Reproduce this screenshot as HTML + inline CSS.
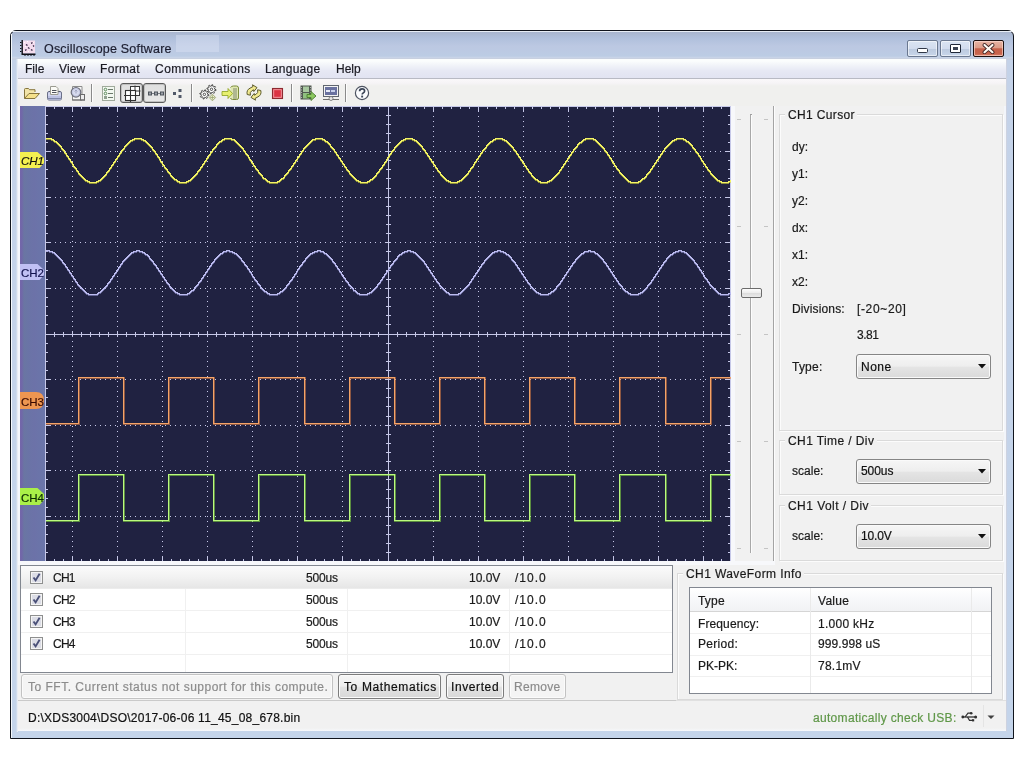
<!DOCTYPE html>
<html><head><meta charset="utf-8"><title>Oscilloscope Software</title>
<style>
html,body{margin:0;padding:0;width:1024px;height:768px;overflow:hidden;background:#fff;}
*{box-sizing:border-box;}
body{font-family:"Liberation Sans", sans-serif;font-size:12px;color:#000;position:relative;}
.a{position:absolute;}
.t{position:absolute;white-space:nowrap;line-height:14px;will-change:transform;-webkit-text-stroke:0.2px currentColor;}
</style></head><body>

<div class="a" style="left:10px;top:30px;width:1004px;height:709px;border:1px solid #10141c;border-radius:6px 6px 0 0;background:linear-gradient(#a8b4cc 0px,#b0c0dc 7px,#bcc8e2 15px,#bccce4 25px,#ccd6e8 27px,#c4cad8 28px,#c4d2e8 29px,#c4d4ea 100%);"></div>
<div class="a" style="left:12px;top:31px;width:1000px;height:1px;background:#e8eef6;border-radius:4px 4px 0 0"></div>
<div class="a" style="left:11px;top:34px;width:1px;height:704px;background:#f4f8fc"></div>
<div class="a" style="left:16px;top:59px;width:1px;height:673px;background:#d0dcec"></div>
<div class="a" style="left:17px;top:59px;width:1px;height:673px;background:#e8ecf4"></div>
<div class="a" style="left:1006px;top:59px;width:1px;height:673px;background:#cdd2e0"></div>
<div class="a" style="left:18px;top:59px;width:988px;height:672px;background:#f1f1f1"></div>
<div class="a" style="left:1004px;top:79px;width:2px;height:622px;background:#f2f5fa"></div>
<svg class="a" style="left:20px;top:40px" width="16" height="16">
<rect x="2.5" y="0.5" width="12.5" height="13" fill="#f4dcee"/>
<path d="M4 2h1v1h-1zM7 1h1v1h-1zM10 3h1v1h-1zM13 2h1v1h-1zM5 6h1v1h-1zM9 7h1v1h-1zM12 6h1v1h-1zM4 10h1v1h-1zM8 11h1v1h-1zM12 10h1v1h-1z" fill="#ffffff"/>
<path d="M2.2 0V14.3H15.5" stroke="#101018" stroke-width="1.4" fill="none"/>
<path d="M0 2.5h1.5M0 5.5h1.5M0 8.5h1.5M0 11.5h1.5M5 14.5v1.5M8 14.5v1.5M11 14.5v1.5M14 14.5v1.5" stroke="#101018" stroke-width="1"/>
<path d="M6 4.5l1.5 1M11 3.5l1.5-1M8 7.5l1.5 1M5 10.5l1.5-1M11 9.5l1.5 1M13 5.5l1 1" stroke="#3a2848" stroke-width="1.5"/>
</svg>
<div class="t" style="left:43.50px;top:41.00px;font-size:12.5px;line-height:16px;color:#1c1e30;letter-spacing:0.190px;">Oscilloscope Software</div>
<div class="a" style="left:176px;top:35px;width:43px;height:17px;background:rgba(230,236,250,0.35)"></div>
<div class="a" style="left:907px;top:40px;width:31px;height:17px;border:1px solid #6a7890;border-radius:2px;background:linear-gradient(#dae4f2,#d2dcee 50%,#bccadf 55%,#c8d6ea);box-shadow:inset 0 0 0 1px rgba(255,255,255,0.55)"></div>
<div class="a" style="left:917px;top:48px;width:11px;height:5px;border:1px solid #303848;background:#fff;border-radius:1.5px"></div>
<div class="a" style="left:940px;top:40px;width:31px;height:17px;border:1px solid #6a7890;border-radius:2px;background:linear-gradient(#dae4f2,#d2dcee 50%,#bccadf 55%,#c8d6ea);box-shadow:inset 0 0 0 1px rgba(255,255,255,0.55)"></div>
<div class="a" style="left:950px;top:44px;width:11px;height:9px;border:1px solid #202838;background:#fff;border-radius:1px"><div class="a" style="left:2px;top:2px;width:5px;height:3px;background:#3a4252"></div></div>
<div class="a" style="left:973px;top:40px;width:31px;height:17px;border:1px solid #1e1010;border-radius:2px;background:linear-gradient(#e8b4a4,#dc9c88 45%,#c6604a 52%,#c8644c 85%,#d88470);box-shadow:inset 0 0 0 1px rgba(255,225,215,0.6)"></div>
<svg class="a" style="left:982px;top:43px" width="13" height="11"><path d="M2.5 2L10.5 9.2M10.5 2L2.5 9.2" stroke="#3a2020" stroke-width="3.8" stroke-linecap="round"/><path d="M2.5 2L10.5 9.2M10.5 2L2.5 9.2" stroke="#fffaf4" stroke-width="2.2" stroke-linecap="round"/></svg>
<div class="a" style="left:18px;top:59px;width:988px;height:20px;background:linear-gradient(#fbfdfd 0px,#fbfdfd 2px,#f2f4f9 6px,#e6e8f4 12px,#e2e4f2 18px);border-bottom:1px solid #b8bac4"></div>
<div class="t" style="left:25.20px;top:61.00px;font-size:12px;line-height:16px;color:#1a1a22;letter-spacing:0.000px;">File</div>
<div class="t" style="left:58.70px;top:61.00px;font-size:12px;line-height:16px;color:#1a1a22;letter-spacing:0.100px;">View</div>
<div class="t" style="left:99.70px;top:61.00px;font-size:12px;line-height:16px;color:#1a1a22;letter-spacing:0.320px;">Format</div>
<div class="t" style="left:154.60px;top:61.00px;font-size:12px;line-height:16px;color:#1a1a22;letter-spacing:0.462px;">Communications</div>
<div class="t" style="left:264.60px;top:61.00px;font-size:12px;line-height:16px;color:#1a1a22;letter-spacing:0.243px;">Language</div>
<div class="t" style="left:336.10px;top:61.00px;font-size:12px;line-height:16px;color:#1a1a22;letter-spacing:0.000px;">Help</div>
<div class="a" style="left:18px;top:79px;width:988px;height:27px;background:linear-gradient(#faf8fa 0px,#f6f4f6 4px,#f0f0ee 7px,#f0f0ee 100%)"></div>
<svg class="a" style="left:23px;top:86px" width="18" height="15">
<path d="M1.5 12.5V3.5q0-1 1-1h3l1 1.2h5.5v2.3" fill="#f2e4a8" stroke="#85743c" stroke-width="1"/>
<path d="M1.5 12.5L6 7.5H16.5L12 12.5Z" fill="#f4e08a" stroke="#85743c" stroke-width="1" stroke-linejoin="round"/>
</svg>
<svg class="a" style="left:46px;top:85px" width="17" height="17">
<rect x="1.5" y="6.5" width="14" height="8.5" rx="1.5" fill="#d0d4ee" stroke="#6a7088" stroke-width="1"/>
<rect x="2" y="11" width="13" height="3.5" fill="#bcc2e2"/>
<path d="M2 13.5h13" stroke="#8088a8" stroke-width="1"/>
<path d="M3.5 6.5h10" stroke="#404858" stroke-width="1.2"/>
<path d="M4.5 1.5h5.5l2 2v6h-7.5z" fill="#fbfbf6" stroke="#9a9a90" stroke-width="1"/>
<path d="M6 5.5h4.5M6 7.5h4.5" stroke="#50545c" stroke-width="1"/>
</svg>
<svg class="a" style="left:70px;top:85px" width="17" height="17">
<path d="M2.5 1.5h9.5v13.5h-9.5z" fill="#f6f6f6" stroke="#8c8c8c" stroke-width="1"/>
<circle cx="6" cy="7.3" r="4.8" fill="#c6cae4" stroke="#6e707c" stroke-width="1.2"/>
<circle cx="6" cy="7.3" r="3" fill="#d8dcf0"/>
<path d="M6 5v3.5M4.6 6.4L6 5l1.4 1.4" stroke="#a0a4c0" stroke-width="1" fill="none"/>
<rect x="10.5" y="9.5" width="4" height="5.5" fill="#ececec" stroke="#6a6a6a" stroke-width="1"/>
<path d="M2 15h13" stroke="#6a6a6a" stroke-width="1"/>
</svg>
<div class="a" style="left:91px;top:84px;width:1px;height:18px;background:#8a8a8a"></div><div class="a" style="left:92px;top:84px;width:1px;height:18px;background:#fdfdfd"></div>
<svg class="a" style="left:102px;top:86px" width="14" height="15">
<rect x="0.5" y="0.5" width="12" height="14" fill="#f2f8f0" stroke="#a0aa9c" stroke-width="1"/>
<circle cx="3.5" cy="3.5" r="1.3" fill="none" stroke="#5c8a5c" stroke-width="1"/>
<circle cx="3.5" cy="7.5" r="1.3" fill="none" stroke="#5c8a5c" stroke-width="1"/>
<rect x="2" y="10" width="3" height="3" fill="#90a090"/>
<path d="M6 3.5h5M6 7.5h5M6 11.5h5" stroke="#6a786a" stroke-width="1"/>
</svg>
<div class="a" style="left:120px;top:83px;width:23px;height:20px;border:1px solid #5a5a5a;border-radius:3px;background:linear-gradient(#dedede,#e8e8e8);box-shadow:inset 0 0 0 1px #c0c0c0"></div>
<div class="a" style="left:143px;top:83px;width:23px;height:20px;border:1px solid #5a5a5a;border-radius:3px;background:linear-gradient(#dedede,#e8e8e8);box-shadow:inset 0 0 0 1px #c0c0c0"></div>
<svg class="a" style="left:124px;top:85px" width="18" height="17">
<rect x="6.5" y="1.5" width="9" height="9" fill="#fff" stroke="#383838" stroke-width="1"/>
<path d="M11 0.5v11M5.5 6h11" stroke="#383838" stroke-width="1"/>
<rect x="1.5" y="5.5" width="10" height="10" fill="#fff" stroke="#303030" stroke-width="1.1"/>
<path d="M6.5 4v13M0 10.5h13" stroke="#303030" stroke-width="1.1"/>
</svg>
<svg class="a" style="left:147px;top:90px" width="17" height="7">
<path d="M4 3.5h3M10 3.5h3" stroke="#7a7e86" stroke-width="1"/>
<rect x="1.5" y="2" width="3" height="3" fill="#9ca0a8" stroke="#4e545c" stroke-width="1"/><rect x="7.5" y="2" width="3" height="3" fill="#9ca0a8" stroke="#4e545c" stroke-width="1"/><rect x="13.5" y="2" width="3" height="3" fill="#9ca0a8" stroke="#4e545c" stroke-width="1"/>
</svg>
<svg class="a" style="left:172px;top:88px" width="10" height="11">
<rect x="1" y="4" width="3" height="3" fill="#505868"/><rect x="6.5" y="1" width="3" height="3" fill="#505868"/><rect x="6.5" y="7" width="3" height="3" fill="#505868"/>
</svg>
<div class="a" style="left:191px;top:84px;width:1px;height:18px;background:#8a8a8a"></div><div class="a" style="left:192px;top:84px;width:1px;height:18px;background:#fdfdfd"></div>
<svg class="a" style="left:199px;top:84px" width="19" height="18"><polygon points="15.80,5.30 17.08,5.73 16.90,6.65 15.55,6.56 14.83,7.63 15.43,8.84 14.65,9.37 13.76,8.35 12.50,8.60 12.07,9.88 11.15,9.70 11.24,8.35 10.17,7.63 8.96,8.23 8.43,7.45 9.45,6.56 9.20,5.30 7.92,4.87 8.10,3.95 9.45,4.04 10.17,2.97 9.57,1.76 10.35,1.23 11.24,2.25 12.50,2.00 12.93,0.72 13.85,0.90 13.76,2.25 14.83,2.97 16.04,2.37 16.57,3.15 15.55,4.04" fill="#fcfcfc" stroke="#404040" stroke-width="0.95" stroke-linejoin="round"/><circle cx="12.5" cy="5.3" r="1.2" fill="none" stroke="#404040" stroke-width="0.9"/><polygon points="8.70,10.40 9.98,10.83 9.80,11.75 8.45,11.66 7.73,12.73 8.33,13.94 7.55,14.47 6.66,13.45 5.40,13.70 4.97,14.98 4.05,14.80 4.14,13.45 3.07,12.73 1.86,13.33 1.33,12.55 2.35,11.66 2.10,10.40 0.82,9.97 1.00,9.05 2.35,9.14 3.07,8.07 2.47,6.86 3.25,6.33 4.14,7.35 5.40,7.10 5.83,5.82 6.75,6.00 6.66,7.35 7.73,8.07 8.94,7.47 9.47,8.25 8.45,9.14" fill="#fcfcfc" stroke="#404040" stroke-width="0.95" stroke-linejoin="round"/><circle cx="5.4" cy="10.4" r="1.2" fill="none" stroke="#404040" stroke-width="0.9"/><path d="M13.4 10.2l3.2 3.3-3.2 3.3-3.2-3.3z" fill="#eef4d0" stroke="#98a070" stroke-width="0.9"/><path d="M13.4 11.3v4.4M11.2 13.5h4.4" stroke="#98a070" stroke-width="0.8"/></svg>
<svg class="a" style="left:221px;top:85px" width="19" height="16">
<path d="M9.5 2.5q1-1.5 3-1.5h3q2 0 2 2v10q0 1.5-2 1.5h-4q-1.5 0-2-1.5" fill="#e0e8b0" stroke="#7a8a3a" stroke-width="1"/>
<rect x="12" y="3" width="4" height="11" fill="#b0b890"/>
<path d="M1 6.5h6v-3l4.5 5-4.5 5v-3h-6z" fill="#e8f070" stroke="#8aa020" stroke-width="0.8"/>
</svg>
<svg class="a" style="left:245px;top:84px" width="18" height="17">
<path d="M2.2 10.5Q1.2 6 5 4.2L8 2.5 7.5 0.8 12 3.6 8.8 7.5 8.6 5.8 6.8 6.8Q4.4 8.2 5.4 11.2Z" fill="#f2ea90" stroke="#5c5a2c" stroke-width="1" stroke-linejoin="round"/>
<path d="M15.8 6.5Q16.8 11 13 12.8L10 14.5 10.5 16.2 6 13.4 9.2 9.5 9.4 11.2 11.2 10.2Q13.6 8.8 12.6 5.8Z" fill="#f2ea90" stroke="#5c5a2c" stroke-width="1" stroke-linejoin="round"/>
</svg>
<svg class="a" style="left:271px;top:87px" width="13" height="13">
<rect x="1.5" y="1.5" width="10" height="10" fill="#dc3444" stroke="#8c2a30" stroke-width="1.1"/>
<rect x="2.7" y="2.7" width="7.6" height="7.6" fill="none" stroke="#f4a0a8" stroke-width="0.9"/>
</svg>
<div class="a" style="left:291px;top:84px;width:1px;height:18px;background:#8a8a8a"></div><div class="a" style="left:292px;top:84px;width:1px;height:18px;background:#fdfdfd"></div>
<svg class="a" style="left:299px;top:84px" width="18" height="17">
<rect x="1.5" y="1.5" width="11" height="14" fill="#505850"/>
<rect x="4" y="2.5" width="6" height="5.5" fill="#a8c8a0"/>
<rect x="4" y="9" width="6" height="5.5" fill="#90c080"/>
<path d="M2.5 3v12M11.5 3v12" stroke="#c8c8c8" stroke-width="0.8" stroke-dasharray="1 1.5"/>
<path d="M8 10.5h4v-3l5 4.5-5 4.5v-3h-4z" fill="#8cc860" stroke="#4a7a30" stroke-width="0.9" stroke-linejoin="round"/>
</svg>
<svg class="a" style="left:322px;top:84px" width="18" height="17">
<rect x="1.5" y="1.5" width="15" height="11" fill="#f4f4f4" stroke="#606670" stroke-width="1"/>
<rect x="3" y="3" width="12" height="8" fill="#6a72a0"/>
<rect x="4" y="6" width="4" height="2" fill="#e8ecf8"/><rect x="9" y="6" width="4" height="2" fill="#c8d0ec"/>
<path d="M1 15.5h16" stroke="#707070" stroke-width="1"/>
<circle cx="9" cy="14.5" r="2" fill="#e8e8e8" stroke="#707070" stroke-width="0.8"/>
</svg>
<div class="a" style="left:345px;top:84px;width:1px;height:18px;background:#8a8a8a"></div><div class="a" style="left:346px;top:84px;width:1px;height:18px;background:#fdfdfd"></div>
<svg class="a" style="left:354px;top:85px" width="16" height="16">
<circle cx="8" cy="8" r="6.6" fill="#fbfcfe" stroke="#4e5462" stroke-width="1.2"/>
<path d="M5.6 6.2q0-2.4 2.5-2.4t2.5 2.2q0 1.3-1.4 2-1 .5-1 1.6" fill="none" stroke="#3a4456" stroke-width="1.7"/>
<rect x="7.2" y="10.6" width="1.9" height="1.9" fill="#3a4456"/>
</svg>
<div class="a" style="left:18px;top:106px;width:2px;height:456px;background:#f4f6fa"></div>
<div class="a" style="left:20px;top:106px;width:25px;height:456px;background:linear-gradient(90deg,#7466aa 0px,#7068a8 2px,#6a76a2 4px,#6a74a6 8px,#6c72a8 14px,#6a76aa 25px)"></div>
<svg width="686" height="456" style="position:absolute;left:45px;top:106px" shape-rendering="crispEdges"><rect x="0" y="0" width="686" height="456" fill="#202241"/><path d="M27 0h1v1h-1zM27 5h1v1h-1zM27 10h1v1h-1zM27 15h1v1h-1zM27 20h1v1h-1zM27 25h1v1h-1zM27 30h1v1h-1zM27 35h1v1h-1zM27 40h1v1h-1zM27 45h1v1h-1zM27 50h1v1h-1zM27 55h1v1h-1zM27 60h1v1h-1zM27 65h1v1h-1zM27 70h1v1h-1zM27 75h1v1h-1zM27 80h1v1h-1zM27 85h1v1h-1zM27 90h1v1h-1zM27 95h1v1h-1zM27 100h1v1h-1zM27 105h1v1h-1zM27 110h1v1h-1zM27 115h1v1h-1zM27 120h1v1h-1zM27 125h1v1h-1zM27 130h1v1h-1zM27 135h1v1h-1zM27 140h1v1h-1zM27 145h1v1h-1zM27 150h1v1h-1zM27 155h1v1h-1zM27 160h1v1h-1zM27 165h1v1h-1zM27 170h1v1h-1zM27 175h1v1h-1zM27 180h1v1h-1zM27 185h1v1h-1zM27 190h1v1h-1zM27 195h1v1h-1zM27 200h1v1h-1zM27 205h1v1h-1zM27 210h1v1h-1zM27 215h1v1h-1zM27 220h1v1h-1zM27 225h1v1h-1zM27 230h1v1h-1zM27 235h1v1h-1zM27 240h1v1h-1zM27 245h1v1h-1zM27 250h1v1h-1zM27 255h1v1h-1zM27 260h1v1h-1zM27 265h1v1h-1zM27 270h1v1h-1zM27 275h1v1h-1zM27 280h1v1h-1zM27 285h1v1h-1zM27 290h1v1h-1zM27 295h1v1h-1zM27 300h1v1h-1zM27 305h1v1h-1zM27 310h1v1h-1zM27 315h1v1h-1zM27 320h1v1h-1zM27 325h1v1h-1zM27 330h1v1h-1zM27 335h1v1h-1zM27 340h1v1h-1zM27 345h1v1h-1zM27 350h1v1h-1zM27 355h1v1h-1zM27 360h1v1h-1zM27 365h1v1h-1zM27 370h1v1h-1zM27 375h1v1h-1zM27 380h1v1h-1zM27 385h1v1h-1zM27 390h1v1h-1zM27 395h1v1h-1zM27 400h1v1h-1zM27 405h1v1h-1zM27 410h1v1h-1zM27 415h1v1h-1zM27 420h1v1h-1zM27 425h1v1h-1zM27 430h1v1h-1zM27 435h1v1h-1zM27 440h1v1h-1zM27 445h1v1h-1zM27 450h1v1h-1zM27 455h1v1h-1zM72 0h1v1h-1zM72 5h1v1h-1zM72 10h1v1h-1zM72 15h1v1h-1zM72 20h1v1h-1zM72 25h1v1h-1zM72 30h1v1h-1zM72 35h1v1h-1zM72 40h1v1h-1zM72 45h1v1h-1zM72 50h1v1h-1zM72 55h1v1h-1zM72 60h1v1h-1zM72 65h1v1h-1zM72 70h1v1h-1zM72 75h1v1h-1zM72 80h1v1h-1zM72 85h1v1h-1zM72 90h1v1h-1zM72 95h1v1h-1zM72 100h1v1h-1zM72 105h1v1h-1zM72 110h1v1h-1zM72 115h1v1h-1zM72 120h1v1h-1zM72 125h1v1h-1zM72 130h1v1h-1zM72 135h1v1h-1zM72 140h1v1h-1zM72 145h1v1h-1zM72 150h1v1h-1zM72 155h1v1h-1zM72 160h1v1h-1zM72 165h1v1h-1zM72 170h1v1h-1zM72 175h1v1h-1zM72 180h1v1h-1zM72 185h1v1h-1zM72 190h1v1h-1zM72 195h1v1h-1zM72 200h1v1h-1zM72 205h1v1h-1zM72 210h1v1h-1zM72 215h1v1h-1zM72 220h1v1h-1zM72 225h1v1h-1zM72 230h1v1h-1zM72 235h1v1h-1zM72 240h1v1h-1zM72 245h1v1h-1zM72 250h1v1h-1zM72 255h1v1h-1zM72 260h1v1h-1zM72 265h1v1h-1zM72 270h1v1h-1zM72 275h1v1h-1zM72 280h1v1h-1zM72 285h1v1h-1zM72 290h1v1h-1zM72 295h1v1h-1zM72 300h1v1h-1zM72 305h1v1h-1zM72 310h1v1h-1zM72 315h1v1h-1zM72 320h1v1h-1zM72 325h1v1h-1zM72 330h1v1h-1zM72 335h1v1h-1zM72 340h1v1h-1zM72 345h1v1h-1zM72 350h1v1h-1zM72 355h1v1h-1zM72 360h1v1h-1zM72 365h1v1h-1zM72 370h1v1h-1zM72 375h1v1h-1zM72 380h1v1h-1zM72 385h1v1h-1zM72 390h1v1h-1zM72 395h1v1h-1zM72 400h1v1h-1zM72 405h1v1h-1zM72 410h1v1h-1zM72 415h1v1h-1zM72 420h1v1h-1zM72 425h1v1h-1zM72 430h1v1h-1zM72 435h1v1h-1zM72 440h1v1h-1zM72 445h1v1h-1zM72 450h1v1h-1zM72 455h1v1h-1zM117 0h1v1h-1zM117 5h1v1h-1zM117 10h1v1h-1zM117 15h1v1h-1zM117 20h1v1h-1zM117 25h1v1h-1zM117 30h1v1h-1zM117 35h1v1h-1zM117 40h1v1h-1zM117 45h1v1h-1zM117 50h1v1h-1zM117 55h1v1h-1zM117 60h1v1h-1zM117 65h1v1h-1zM117 70h1v1h-1zM117 75h1v1h-1zM117 80h1v1h-1zM117 85h1v1h-1zM117 90h1v1h-1zM117 95h1v1h-1zM117 100h1v1h-1zM117 105h1v1h-1zM117 110h1v1h-1zM117 115h1v1h-1zM117 120h1v1h-1zM117 125h1v1h-1zM117 130h1v1h-1zM117 135h1v1h-1zM117 140h1v1h-1zM117 145h1v1h-1zM117 150h1v1h-1zM117 155h1v1h-1zM117 160h1v1h-1zM117 165h1v1h-1zM117 170h1v1h-1zM117 175h1v1h-1zM117 180h1v1h-1zM117 185h1v1h-1zM117 190h1v1h-1zM117 195h1v1h-1zM117 200h1v1h-1zM117 205h1v1h-1zM117 210h1v1h-1zM117 215h1v1h-1zM117 220h1v1h-1zM117 225h1v1h-1zM117 230h1v1h-1zM117 235h1v1h-1zM117 240h1v1h-1zM117 245h1v1h-1zM117 250h1v1h-1zM117 255h1v1h-1zM117 260h1v1h-1zM117 265h1v1h-1zM117 270h1v1h-1zM117 275h1v1h-1zM117 280h1v1h-1zM117 285h1v1h-1zM117 290h1v1h-1zM117 295h1v1h-1zM117 300h1v1h-1zM117 305h1v1h-1zM117 310h1v1h-1zM117 315h1v1h-1zM117 320h1v1h-1zM117 325h1v1h-1zM117 330h1v1h-1zM117 335h1v1h-1zM117 340h1v1h-1zM117 345h1v1h-1zM117 350h1v1h-1zM117 355h1v1h-1zM117 360h1v1h-1zM117 365h1v1h-1zM117 370h1v1h-1zM117 375h1v1h-1zM117 380h1v1h-1zM117 385h1v1h-1zM117 390h1v1h-1zM117 395h1v1h-1zM117 400h1v1h-1zM117 405h1v1h-1zM117 410h1v1h-1zM117 415h1v1h-1zM117 420h1v1h-1zM117 425h1v1h-1zM117 430h1v1h-1zM117 435h1v1h-1zM117 440h1v1h-1zM117 445h1v1h-1zM117 450h1v1h-1zM117 455h1v1h-1zM162 0h1v1h-1zM162 5h1v1h-1zM162 10h1v1h-1zM162 15h1v1h-1zM162 20h1v1h-1zM162 25h1v1h-1zM162 30h1v1h-1zM162 35h1v1h-1zM162 40h1v1h-1zM162 45h1v1h-1zM162 50h1v1h-1zM162 55h1v1h-1zM162 60h1v1h-1zM162 65h1v1h-1zM162 70h1v1h-1zM162 75h1v1h-1zM162 80h1v1h-1zM162 85h1v1h-1zM162 90h1v1h-1zM162 95h1v1h-1zM162 100h1v1h-1zM162 105h1v1h-1zM162 110h1v1h-1zM162 115h1v1h-1zM162 120h1v1h-1zM162 125h1v1h-1zM162 130h1v1h-1zM162 135h1v1h-1zM162 140h1v1h-1zM162 145h1v1h-1zM162 150h1v1h-1zM162 155h1v1h-1zM162 160h1v1h-1zM162 165h1v1h-1zM162 170h1v1h-1zM162 175h1v1h-1zM162 180h1v1h-1zM162 185h1v1h-1zM162 190h1v1h-1zM162 195h1v1h-1zM162 200h1v1h-1zM162 205h1v1h-1zM162 210h1v1h-1zM162 215h1v1h-1zM162 220h1v1h-1zM162 225h1v1h-1zM162 230h1v1h-1zM162 235h1v1h-1zM162 240h1v1h-1zM162 245h1v1h-1zM162 250h1v1h-1zM162 255h1v1h-1zM162 260h1v1h-1zM162 265h1v1h-1zM162 270h1v1h-1zM162 275h1v1h-1zM162 280h1v1h-1zM162 285h1v1h-1zM162 290h1v1h-1zM162 295h1v1h-1zM162 300h1v1h-1zM162 305h1v1h-1zM162 310h1v1h-1zM162 315h1v1h-1zM162 320h1v1h-1zM162 325h1v1h-1zM162 330h1v1h-1zM162 335h1v1h-1zM162 340h1v1h-1zM162 345h1v1h-1zM162 350h1v1h-1zM162 355h1v1h-1zM162 360h1v1h-1zM162 365h1v1h-1zM162 370h1v1h-1zM162 375h1v1h-1zM162 380h1v1h-1zM162 385h1v1h-1zM162 390h1v1h-1zM162 395h1v1h-1zM162 400h1v1h-1zM162 405h1v1h-1zM162 410h1v1h-1zM162 415h1v1h-1zM162 420h1v1h-1zM162 425h1v1h-1zM162 430h1v1h-1zM162 435h1v1h-1zM162 440h1v1h-1zM162 445h1v1h-1zM162 450h1v1h-1zM162 455h1v1h-1zM207 0h1v1h-1zM207 5h1v1h-1zM207 10h1v1h-1zM207 15h1v1h-1zM207 20h1v1h-1zM207 25h1v1h-1zM207 30h1v1h-1zM207 35h1v1h-1zM207 40h1v1h-1zM207 45h1v1h-1zM207 50h1v1h-1zM207 55h1v1h-1zM207 60h1v1h-1zM207 65h1v1h-1zM207 70h1v1h-1zM207 75h1v1h-1zM207 80h1v1h-1zM207 85h1v1h-1zM207 90h1v1h-1zM207 95h1v1h-1zM207 100h1v1h-1zM207 105h1v1h-1zM207 110h1v1h-1zM207 115h1v1h-1zM207 120h1v1h-1zM207 125h1v1h-1zM207 130h1v1h-1zM207 135h1v1h-1zM207 140h1v1h-1zM207 145h1v1h-1zM207 150h1v1h-1zM207 155h1v1h-1zM207 160h1v1h-1zM207 165h1v1h-1zM207 170h1v1h-1zM207 175h1v1h-1zM207 180h1v1h-1zM207 185h1v1h-1zM207 190h1v1h-1zM207 195h1v1h-1zM207 200h1v1h-1zM207 205h1v1h-1zM207 210h1v1h-1zM207 215h1v1h-1zM207 220h1v1h-1zM207 225h1v1h-1zM207 230h1v1h-1zM207 235h1v1h-1zM207 240h1v1h-1zM207 245h1v1h-1zM207 250h1v1h-1zM207 255h1v1h-1zM207 260h1v1h-1zM207 265h1v1h-1zM207 270h1v1h-1zM207 275h1v1h-1zM207 280h1v1h-1zM207 285h1v1h-1zM207 290h1v1h-1zM207 295h1v1h-1zM207 300h1v1h-1zM207 305h1v1h-1zM207 310h1v1h-1zM207 315h1v1h-1zM207 320h1v1h-1zM207 325h1v1h-1zM207 330h1v1h-1zM207 335h1v1h-1zM207 340h1v1h-1zM207 345h1v1h-1zM207 350h1v1h-1zM207 355h1v1h-1zM207 360h1v1h-1zM207 365h1v1h-1zM207 370h1v1h-1zM207 375h1v1h-1zM207 380h1v1h-1zM207 385h1v1h-1zM207 390h1v1h-1zM207 395h1v1h-1zM207 400h1v1h-1zM207 405h1v1h-1zM207 410h1v1h-1zM207 415h1v1h-1zM207 420h1v1h-1zM207 425h1v1h-1zM207 430h1v1h-1zM207 435h1v1h-1zM207 440h1v1h-1zM207 445h1v1h-1zM207 450h1v1h-1zM207 455h1v1h-1zM252 0h1v1h-1zM252 5h1v1h-1zM252 10h1v1h-1zM252 15h1v1h-1zM252 20h1v1h-1zM252 25h1v1h-1zM252 30h1v1h-1zM252 35h1v1h-1zM252 40h1v1h-1zM252 45h1v1h-1zM252 50h1v1h-1zM252 55h1v1h-1zM252 60h1v1h-1zM252 65h1v1h-1zM252 70h1v1h-1zM252 75h1v1h-1zM252 80h1v1h-1zM252 85h1v1h-1zM252 90h1v1h-1zM252 95h1v1h-1zM252 100h1v1h-1zM252 105h1v1h-1zM252 110h1v1h-1zM252 115h1v1h-1zM252 120h1v1h-1zM252 125h1v1h-1zM252 130h1v1h-1zM252 135h1v1h-1zM252 140h1v1h-1zM252 145h1v1h-1zM252 150h1v1h-1zM252 155h1v1h-1zM252 160h1v1h-1zM252 165h1v1h-1zM252 170h1v1h-1zM252 175h1v1h-1zM252 180h1v1h-1zM252 185h1v1h-1zM252 190h1v1h-1zM252 195h1v1h-1zM252 200h1v1h-1zM252 205h1v1h-1zM252 210h1v1h-1zM252 215h1v1h-1zM252 220h1v1h-1zM252 225h1v1h-1zM252 230h1v1h-1zM252 235h1v1h-1zM252 240h1v1h-1zM252 245h1v1h-1zM252 250h1v1h-1zM252 255h1v1h-1zM252 260h1v1h-1zM252 265h1v1h-1zM252 270h1v1h-1zM252 275h1v1h-1zM252 280h1v1h-1zM252 285h1v1h-1zM252 290h1v1h-1zM252 295h1v1h-1zM252 300h1v1h-1zM252 305h1v1h-1zM252 310h1v1h-1zM252 315h1v1h-1zM252 320h1v1h-1zM252 325h1v1h-1zM252 330h1v1h-1zM252 335h1v1h-1zM252 340h1v1h-1zM252 345h1v1h-1zM252 350h1v1h-1zM252 355h1v1h-1zM252 360h1v1h-1zM252 365h1v1h-1zM252 370h1v1h-1zM252 375h1v1h-1zM252 380h1v1h-1zM252 385h1v1h-1zM252 390h1v1h-1zM252 395h1v1h-1zM252 400h1v1h-1zM252 405h1v1h-1zM252 410h1v1h-1zM252 415h1v1h-1zM252 420h1v1h-1zM252 425h1v1h-1zM252 430h1v1h-1zM252 435h1v1h-1zM252 440h1v1h-1zM252 445h1v1h-1zM252 450h1v1h-1zM252 455h1v1h-1zM297 0h1v1h-1zM297 5h1v1h-1zM297 10h1v1h-1zM297 15h1v1h-1zM297 20h1v1h-1zM297 25h1v1h-1zM297 30h1v1h-1zM297 35h1v1h-1zM297 40h1v1h-1zM297 45h1v1h-1zM297 50h1v1h-1zM297 55h1v1h-1zM297 60h1v1h-1zM297 65h1v1h-1zM297 70h1v1h-1zM297 75h1v1h-1zM297 80h1v1h-1zM297 85h1v1h-1zM297 90h1v1h-1zM297 95h1v1h-1zM297 100h1v1h-1zM297 105h1v1h-1zM297 110h1v1h-1zM297 115h1v1h-1zM297 120h1v1h-1zM297 125h1v1h-1zM297 130h1v1h-1zM297 135h1v1h-1zM297 140h1v1h-1zM297 145h1v1h-1zM297 150h1v1h-1zM297 155h1v1h-1zM297 160h1v1h-1zM297 165h1v1h-1zM297 170h1v1h-1zM297 175h1v1h-1zM297 180h1v1h-1zM297 185h1v1h-1zM297 190h1v1h-1zM297 195h1v1h-1zM297 200h1v1h-1zM297 205h1v1h-1zM297 210h1v1h-1zM297 215h1v1h-1zM297 220h1v1h-1zM297 225h1v1h-1zM297 230h1v1h-1zM297 235h1v1h-1zM297 240h1v1h-1zM297 245h1v1h-1zM297 250h1v1h-1zM297 255h1v1h-1zM297 260h1v1h-1zM297 265h1v1h-1zM297 270h1v1h-1zM297 275h1v1h-1zM297 280h1v1h-1zM297 285h1v1h-1zM297 290h1v1h-1zM297 295h1v1h-1zM297 300h1v1h-1zM297 305h1v1h-1zM297 310h1v1h-1zM297 315h1v1h-1zM297 320h1v1h-1zM297 325h1v1h-1zM297 330h1v1h-1zM297 335h1v1h-1zM297 340h1v1h-1zM297 345h1v1h-1zM297 350h1v1h-1zM297 355h1v1h-1zM297 360h1v1h-1zM297 365h1v1h-1zM297 370h1v1h-1zM297 375h1v1h-1zM297 380h1v1h-1zM297 385h1v1h-1zM297 390h1v1h-1zM297 395h1v1h-1zM297 400h1v1h-1zM297 405h1v1h-1zM297 410h1v1h-1zM297 415h1v1h-1zM297 420h1v1h-1zM297 425h1v1h-1zM297 430h1v1h-1zM297 435h1v1h-1zM297 440h1v1h-1zM297 445h1v1h-1zM297 450h1v1h-1zM297 455h1v1h-1zM388 0h1v1h-1zM388 5h1v1h-1zM388 10h1v1h-1zM388 15h1v1h-1zM388 20h1v1h-1zM388 25h1v1h-1zM388 30h1v1h-1zM388 35h1v1h-1zM388 40h1v1h-1zM388 45h1v1h-1zM388 50h1v1h-1zM388 55h1v1h-1zM388 60h1v1h-1zM388 65h1v1h-1zM388 70h1v1h-1zM388 75h1v1h-1zM388 80h1v1h-1zM388 85h1v1h-1zM388 90h1v1h-1zM388 95h1v1h-1zM388 100h1v1h-1zM388 105h1v1h-1zM388 110h1v1h-1zM388 115h1v1h-1zM388 120h1v1h-1zM388 125h1v1h-1zM388 130h1v1h-1zM388 135h1v1h-1zM388 140h1v1h-1zM388 145h1v1h-1zM388 150h1v1h-1zM388 155h1v1h-1zM388 160h1v1h-1zM388 165h1v1h-1zM388 170h1v1h-1zM388 175h1v1h-1zM388 180h1v1h-1zM388 185h1v1h-1zM388 190h1v1h-1zM388 195h1v1h-1zM388 200h1v1h-1zM388 205h1v1h-1zM388 210h1v1h-1zM388 215h1v1h-1zM388 220h1v1h-1zM388 225h1v1h-1zM388 230h1v1h-1zM388 235h1v1h-1zM388 240h1v1h-1zM388 245h1v1h-1zM388 250h1v1h-1zM388 255h1v1h-1zM388 260h1v1h-1zM388 265h1v1h-1zM388 270h1v1h-1zM388 275h1v1h-1zM388 280h1v1h-1zM388 285h1v1h-1zM388 290h1v1h-1zM388 295h1v1h-1zM388 300h1v1h-1zM388 305h1v1h-1zM388 310h1v1h-1zM388 315h1v1h-1zM388 320h1v1h-1zM388 325h1v1h-1zM388 330h1v1h-1zM388 335h1v1h-1zM388 340h1v1h-1zM388 345h1v1h-1zM388 350h1v1h-1zM388 355h1v1h-1zM388 360h1v1h-1zM388 365h1v1h-1zM388 370h1v1h-1zM388 375h1v1h-1zM388 380h1v1h-1zM388 385h1v1h-1zM388 390h1v1h-1zM388 395h1v1h-1zM388 400h1v1h-1zM388 405h1v1h-1zM388 410h1v1h-1zM388 415h1v1h-1zM388 420h1v1h-1zM388 425h1v1h-1zM388 430h1v1h-1zM388 435h1v1h-1zM388 440h1v1h-1zM388 445h1v1h-1zM388 450h1v1h-1zM388 455h1v1h-1zM433 0h1v1h-1zM433 5h1v1h-1zM433 10h1v1h-1zM433 15h1v1h-1zM433 20h1v1h-1zM433 25h1v1h-1zM433 30h1v1h-1zM433 35h1v1h-1zM433 40h1v1h-1zM433 45h1v1h-1zM433 50h1v1h-1zM433 55h1v1h-1zM433 60h1v1h-1zM433 65h1v1h-1zM433 70h1v1h-1zM433 75h1v1h-1zM433 80h1v1h-1zM433 85h1v1h-1zM433 90h1v1h-1zM433 95h1v1h-1zM433 100h1v1h-1zM433 105h1v1h-1zM433 110h1v1h-1zM433 115h1v1h-1zM433 120h1v1h-1zM433 125h1v1h-1zM433 130h1v1h-1zM433 135h1v1h-1zM433 140h1v1h-1zM433 145h1v1h-1zM433 150h1v1h-1zM433 155h1v1h-1zM433 160h1v1h-1zM433 165h1v1h-1zM433 170h1v1h-1zM433 175h1v1h-1zM433 180h1v1h-1zM433 185h1v1h-1zM433 190h1v1h-1zM433 195h1v1h-1zM433 200h1v1h-1zM433 205h1v1h-1zM433 210h1v1h-1zM433 215h1v1h-1zM433 220h1v1h-1zM433 225h1v1h-1zM433 230h1v1h-1zM433 235h1v1h-1zM433 240h1v1h-1zM433 245h1v1h-1zM433 250h1v1h-1zM433 255h1v1h-1zM433 260h1v1h-1zM433 265h1v1h-1zM433 270h1v1h-1zM433 275h1v1h-1zM433 280h1v1h-1zM433 285h1v1h-1zM433 290h1v1h-1zM433 295h1v1h-1zM433 300h1v1h-1zM433 305h1v1h-1zM433 310h1v1h-1zM433 315h1v1h-1zM433 320h1v1h-1zM433 325h1v1h-1zM433 330h1v1h-1zM433 335h1v1h-1zM433 340h1v1h-1zM433 345h1v1h-1zM433 350h1v1h-1zM433 355h1v1h-1zM433 360h1v1h-1zM433 365h1v1h-1zM433 370h1v1h-1zM433 375h1v1h-1zM433 380h1v1h-1zM433 385h1v1h-1zM433 390h1v1h-1zM433 395h1v1h-1zM433 400h1v1h-1zM433 405h1v1h-1zM433 410h1v1h-1zM433 415h1v1h-1zM433 420h1v1h-1zM433 425h1v1h-1zM433 430h1v1h-1zM433 435h1v1h-1zM433 440h1v1h-1zM433 445h1v1h-1zM433 450h1v1h-1zM433 455h1v1h-1zM478 0h1v1h-1zM478 5h1v1h-1zM478 10h1v1h-1zM478 15h1v1h-1zM478 20h1v1h-1zM478 25h1v1h-1zM478 30h1v1h-1zM478 35h1v1h-1zM478 40h1v1h-1zM478 45h1v1h-1zM478 50h1v1h-1zM478 55h1v1h-1zM478 60h1v1h-1zM478 65h1v1h-1zM478 70h1v1h-1zM478 75h1v1h-1zM478 80h1v1h-1zM478 85h1v1h-1zM478 90h1v1h-1zM478 95h1v1h-1zM478 100h1v1h-1zM478 105h1v1h-1zM478 110h1v1h-1zM478 115h1v1h-1zM478 120h1v1h-1zM478 125h1v1h-1zM478 130h1v1h-1zM478 135h1v1h-1zM478 140h1v1h-1zM478 145h1v1h-1zM478 150h1v1h-1zM478 155h1v1h-1zM478 160h1v1h-1zM478 165h1v1h-1zM478 170h1v1h-1zM478 175h1v1h-1zM478 180h1v1h-1zM478 185h1v1h-1zM478 190h1v1h-1zM478 195h1v1h-1zM478 200h1v1h-1zM478 205h1v1h-1zM478 210h1v1h-1zM478 215h1v1h-1zM478 220h1v1h-1zM478 225h1v1h-1zM478 230h1v1h-1zM478 235h1v1h-1zM478 240h1v1h-1zM478 245h1v1h-1zM478 250h1v1h-1zM478 255h1v1h-1zM478 260h1v1h-1zM478 265h1v1h-1zM478 270h1v1h-1zM478 275h1v1h-1zM478 280h1v1h-1zM478 285h1v1h-1zM478 290h1v1h-1zM478 295h1v1h-1zM478 300h1v1h-1zM478 305h1v1h-1zM478 310h1v1h-1zM478 315h1v1h-1zM478 320h1v1h-1zM478 325h1v1h-1zM478 330h1v1h-1zM478 335h1v1h-1zM478 340h1v1h-1zM478 345h1v1h-1zM478 350h1v1h-1zM478 355h1v1h-1zM478 360h1v1h-1zM478 365h1v1h-1zM478 370h1v1h-1zM478 375h1v1h-1zM478 380h1v1h-1zM478 385h1v1h-1zM478 390h1v1h-1zM478 395h1v1h-1zM478 400h1v1h-1zM478 405h1v1h-1zM478 410h1v1h-1zM478 415h1v1h-1zM478 420h1v1h-1zM478 425h1v1h-1zM478 430h1v1h-1zM478 435h1v1h-1zM478 440h1v1h-1zM478 445h1v1h-1zM478 450h1v1h-1zM478 455h1v1h-1zM523 0h1v1h-1zM523 5h1v1h-1zM523 10h1v1h-1zM523 15h1v1h-1zM523 20h1v1h-1zM523 25h1v1h-1zM523 30h1v1h-1zM523 35h1v1h-1zM523 40h1v1h-1zM523 45h1v1h-1zM523 50h1v1h-1zM523 55h1v1h-1zM523 60h1v1h-1zM523 65h1v1h-1zM523 70h1v1h-1zM523 75h1v1h-1zM523 80h1v1h-1zM523 85h1v1h-1zM523 90h1v1h-1zM523 95h1v1h-1zM523 100h1v1h-1zM523 105h1v1h-1zM523 110h1v1h-1zM523 115h1v1h-1zM523 120h1v1h-1zM523 125h1v1h-1zM523 130h1v1h-1zM523 135h1v1h-1zM523 140h1v1h-1zM523 145h1v1h-1zM523 150h1v1h-1zM523 155h1v1h-1zM523 160h1v1h-1zM523 165h1v1h-1zM523 170h1v1h-1zM523 175h1v1h-1zM523 180h1v1h-1zM523 185h1v1h-1zM523 190h1v1h-1zM523 195h1v1h-1zM523 200h1v1h-1zM523 205h1v1h-1zM523 210h1v1h-1zM523 215h1v1h-1zM523 220h1v1h-1zM523 225h1v1h-1zM523 230h1v1h-1zM523 235h1v1h-1zM523 240h1v1h-1zM523 245h1v1h-1zM523 250h1v1h-1zM523 255h1v1h-1zM523 260h1v1h-1zM523 265h1v1h-1zM523 270h1v1h-1zM523 275h1v1h-1zM523 280h1v1h-1zM523 285h1v1h-1zM523 290h1v1h-1zM523 295h1v1h-1zM523 300h1v1h-1zM523 305h1v1h-1zM523 310h1v1h-1zM523 315h1v1h-1zM523 320h1v1h-1zM523 325h1v1h-1zM523 330h1v1h-1zM523 335h1v1h-1zM523 340h1v1h-1zM523 345h1v1h-1zM523 350h1v1h-1zM523 355h1v1h-1zM523 360h1v1h-1zM523 365h1v1h-1zM523 370h1v1h-1zM523 375h1v1h-1zM523 380h1v1h-1zM523 385h1v1h-1zM523 390h1v1h-1zM523 395h1v1h-1zM523 400h1v1h-1zM523 405h1v1h-1zM523 410h1v1h-1zM523 415h1v1h-1zM523 420h1v1h-1zM523 425h1v1h-1zM523 430h1v1h-1zM523 435h1v1h-1zM523 440h1v1h-1zM523 445h1v1h-1zM523 450h1v1h-1zM523 455h1v1h-1zM568 0h1v1h-1zM568 5h1v1h-1zM568 10h1v1h-1zM568 15h1v1h-1zM568 20h1v1h-1zM568 25h1v1h-1zM568 30h1v1h-1zM568 35h1v1h-1zM568 40h1v1h-1zM568 45h1v1h-1zM568 50h1v1h-1zM568 55h1v1h-1zM568 60h1v1h-1zM568 65h1v1h-1zM568 70h1v1h-1zM568 75h1v1h-1zM568 80h1v1h-1zM568 85h1v1h-1zM568 90h1v1h-1zM568 95h1v1h-1zM568 100h1v1h-1zM568 105h1v1h-1zM568 110h1v1h-1zM568 115h1v1h-1zM568 120h1v1h-1zM568 125h1v1h-1zM568 130h1v1h-1zM568 135h1v1h-1zM568 140h1v1h-1zM568 145h1v1h-1zM568 150h1v1h-1zM568 155h1v1h-1zM568 160h1v1h-1zM568 165h1v1h-1zM568 170h1v1h-1zM568 175h1v1h-1zM568 180h1v1h-1zM568 185h1v1h-1zM568 190h1v1h-1zM568 195h1v1h-1zM568 200h1v1h-1zM568 205h1v1h-1zM568 210h1v1h-1zM568 215h1v1h-1zM568 220h1v1h-1zM568 225h1v1h-1zM568 230h1v1h-1zM568 235h1v1h-1zM568 240h1v1h-1zM568 245h1v1h-1zM568 250h1v1h-1zM568 255h1v1h-1zM568 260h1v1h-1zM568 265h1v1h-1zM568 270h1v1h-1zM568 275h1v1h-1zM568 280h1v1h-1zM568 285h1v1h-1zM568 290h1v1h-1zM568 295h1v1h-1zM568 300h1v1h-1zM568 305h1v1h-1zM568 310h1v1h-1zM568 315h1v1h-1zM568 320h1v1h-1zM568 325h1v1h-1zM568 330h1v1h-1zM568 335h1v1h-1zM568 340h1v1h-1zM568 345h1v1h-1zM568 350h1v1h-1zM568 355h1v1h-1zM568 360h1v1h-1zM568 365h1v1h-1zM568 370h1v1h-1zM568 375h1v1h-1zM568 380h1v1h-1zM568 385h1v1h-1zM568 390h1v1h-1zM568 395h1v1h-1zM568 400h1v1h-1zM568 405h1v1h-1zM568 410h1v1h-1zM568 415h1v1h-1zM568 420h1v1h-1zM568 425h1v1h-1zM568 430h1v1h-1zM568 435h1v1h-1zM568 440h1v1h-1zM568 445h1v1h-1zM568 450h1v1h-1zM568 455h1v1h-1zM613 0h1v1h-1zM613 5h1v1h-1zM613 10h1v1h-1zM613 15h1v1h-1zM613 20h1v1h-1zM613 25h1v1h-1zM613 30h1v1h-1zM613 35h1v1h-1zM613 40h1v1h-1zM613 45h1v1h-1zM613 50h1v1h-1zM613 55h1v1h-1zM613 60h1v1h-1zM613 65h1v1h-1zM613 70h1v1h-1zM613 75h1v1h-1zM613 80h1v1h-1zM613 85h1v1h-1zM613 90h1v1h-1zM613 95h1v1h-1zM613 100h1v1h-1zM613 105h1v1h-1zM613 110h1v1h-1zM613 115h1v1h-1zM613 120h1v1h-1zM613 125h1v1h-1zM613 130h1v1h-1zM613 135h1v1h-1zM613 140h1v1h-1zM613 145h1v1h-1zM613 150h1v1h-1zM613 155h1v1h-1zM613 160h1v1h-1zM613 165h1v1h-1zM613 170h1v1h-1zM613 175h1v1h-1zM613 180h1v1h-1zM613 185h1v1h-1zM613 190h1v1h-1zM613 195h1v1h-1zM613 200h1v1h-1zM613 205h1v1h-1zM613 210h1v1h-1zM613 215h1v1h-1zM613 220h1v1h-1zM613 225h1v1h-1zM613 230h1v1h-1zM613 235h1v1h-1zM613 240h1v1h-1zM613 245h1v1h-1zM613 250h1v1h-1zM613 255h1v1h-1zM613 260h1v1h-1zM613 265h1v1h-1zM613 270h1v1h-1zM613 275h1v1h-1zM613 280h1v1h-1zM613 285h1v1h-1zM613 290h1v1h-1zM613 295h1v1h-1zM613 300h1v1h-1zM613 305h1v1h-1zM613 310h1v1h-1zM613 315h1v1h-1zM613 320h1v1h-1zM613 325h1v1h-1zM613 330h1v1h-1zM613 335h1v1h-1zM613 340h1v1h-1zM613 345h1v1h-1zM613 350h1v1h-1zM613 355h1v1h-1zM613 360h1v1h-1zM613 365h1v1h-1zM613 370h1v1h-1zM613 375h1v1h-1zM613 380h1v1h-1zM613 385h1v1h-1zM613 390h1v1h-1zM613 395h1v1h-1zM613 400h1v1h-1zM613 405h1v1h-1zM613 410h1v1h-1zM613 415h1v1h-1zM613 420h1v1h-1zM613 425h1v1h-1zM613 430h1v1h-1zM613 435h1v1h-1zM613 440h1v1h-1zM613 445h1v1h-1zM613 450h1v1h-1zM613 455h1v1h-1zM658 0h1v1h-1zM658 5h1v1h-1zM658 10h1v1h-1zM658 15h1v1h-1zM658 20h1v1h-1zM658 25h1v1h-1zM658 30h1v1h-1zM658 35h1v1h-1zM658 40h1v1h-1zM658 45h1v1h-1zM658 50h1v1h-1zM658 55h1v1h-1zM658 60h1v1h-1zM658 65h1v1h-1zM658 70h1v1h-1zM658 75h1v1h-1zM658 80h1v1h-1zM658 85h1v1h-1zM658 90h1v1h-1zM658 95h1v1h-1zM658 100h1v1h-1zM658 105h1v1h-1zM658 110h1v1h-1zM658 115h1v1h-1zM658 120h1v1h-1zM658 125h1v1h-1zM658 130h1v1h-1zM658 135h1v1h-1zM658 140h1v1h-1zM658 145h1v1h-1zM658 150h1v1h-1zM658 155h1v1h-1zM658 160h1v1h-1zM658 165h1v1h-1zM658 170h1v1h-1zM658 175h1v1h-1zM658 180h1v1h-1zM658 185h1v1h-1zM658 190h1v1h-1zM658 195h1v1h-1zM658 200h1v1h-1zM658 205h1v1h-1zM658 210h1v1h-1zM658 215h1v1h-1zM658 220h1v1h-1zM658 225h1v1h-1zM658 230h1v1h-1zM658 235h1v1h-1zM658 240h1v1h-1zM658 245h1v1h-1zM658 250h1v1h-1zM658 255h1v1h-1zM658 260h1v1h-1zM658 265h1v1h-1zM658 270h1v1h-1zM658 275h1v1h-1zM658 280h1v1h-1zM658 285h1v1h-1zM658 290h1v1h-1zM658 295h1v1h-1zM658 300h1v1h-1zM658 305h1v1h-1zM658 310h1v1h-1zM658 315h1v1h-1zM658 320h1v1h-1zM658 325h1v1h-1zM658 330h1v1h-1zM658 335h1v1h-1zM658 340h1v1h-1zM658 345h1v1h-1zM658 350h1v1h-1zM658 355h1v1h-1zM658 360h1v1h-1zM658 365h1v1h-1zM658 370h1v1h-1zM658 375h1v1h-1zM658 380h1v1h-1zM658 385h1v1h-1zM658 390h1v1h-1zM658 395h1v1h-1zM658 400h1v1h-1zM658 405h1v1h-1zM658 410h1v1h-1zM658 415h1v1h-1zM658 420h1v1h-1zM658 425h1v1h-1zM658 430h1v1h-1zM658 435h1v1h-1zM658 440h1v1h-1zM658 445h1v1h-1zM658 450h1v1h-1zM658 455h1v1h-1zM0 45h1v1h-1zM5 45h1v1h-1zM10 45h1v1h-1zM15 45h1v1h-1zM20 45h1v1h-1zM25 45h1v1h-1zM30 45h1v1h-1zM35 45h1v1h-1zM40 45h1v1h-1zM45 45h1v1h-1zM50 45h1v1h-1zM55 45h1v1h-1zM60 45h1v1h-1zM65 45h1v1h-1zM70 45h1v1h-1zM75 45h1v1h-1zM80 45h1v1h-1zM85 45h1v1h-1zM90 45h1v1h-1zM95 45h1v1h-1zM100 45h1v1h-1zM105 45h1v1h-1zM110 45h1v1h-1zM115 45h1v1h-1zM120 45h1v1h-1zM125 45h1v1h-1zM130 45h1v1h-1zM135 45h1v1h-1zM140 45h1v1h-1zM145 45h1v1h-1zM150 45h1v1h-1zM155 45h1v1h-1zM160 45h1v1h-1zM165 45h1v1h-1zM170 45h1v1h-1zM175 45h1v1h-1zM180 45h1v1h-1zM185 45h1v1h-1zM190 45h1v1h-1zM195 45h1v1h-1zM200 45h1v1h-1zM205 45h1v1h-1zM210 45h1v1h-1zM215 45h1v1h-1zM220 45h1v1h-1zM225 45h1v1h-1zM230 45h1v1h-1zM235 45h1v1h-1zM240 45h1v1h-1zM245 45h1v1h-1zM250 45h1v1h-1zM255 45h1v1h-1zM260 45h1v1h-1zM265 45h1v1h-1zM270 45h1v1h-1zM275 45h1v1h-1zM280 45h1v1h-1zM285 45h1v1h-1zM290 45h1v1h-1zM295 45h1v1h-1zM300 45h1v1h-1zM305 45h1v1h-1zM310 45h1v1h-1zM315 45h1v1h-1zM320 45h1v1h-1zM325 45h1v1h-1zM330 45h1v1h-1zM335 45h1v1h-1zM340 45h1v1h-1zM345 45h1v1h-1zM350 45h1v1h-1zM355 45h1v1h-1zM360 45h1v1h-1zM365 45h1v1h-1zM370 45h1v1h-1zM375 45h1v1h-1zM380 45h1v1h-1zM385 45h1v1h-1zM390 45h1v1h-1zM395 45h1v1h-1zM400 45h1v1h-1zM405 45h1v1h-1zM410 45h1v1h-1zM415 45h1v1h-1zM420 45h1v1h-1zM425 45h1v1h-1zM430 45h1v1h-1zM435 45h1v1h-1zM440 45h1v1h-1zM445 45h1v1h-1zM450 45h1v1h-1zM455 45h1v1h-1zM460 45h1v1h-1zM465 45h1v1h-1zM470 45h1v1h-1zM475 45h1v1h-1zM480 45h1v1h-1zM485 45h1v1h-1zM490 45h1v1h-1zM495 45h1v1h-1zM500 45h1v1h-1zM505 45h1v1h-1zM510 45h1v1h-1zM515 45h1v1h-1zM520 45h1v1h-1zM525 45h1v1h-1zM530 45h1v1h-1zM535 45h1v1h-1zM540 45h1v1h-1zM545 45h1v1h-1zM550 45h1v1h-1zM555 45h1v1h-1zM560 45h1v1h-1zM565 45h1v1h-1zM570 45h1v1h-1zM575 45h1v1h-1zM580 45h1v1h-1zM585 45h1v1h-1zM590 45h1v1h-1zM595 45h1v1h-1zM600 45h1v1h-1zM605 45h1v1h-1zM610 45h1v1h-1zM615 45h1v1h-1zM620 45h1v1h-1zM625 45h1v1h-1zM630 45h1v1h-1zM635 45h1v1h-1zM640 45h1v1h-1zM645 45h1v1h-1zM650 45h1v1h-1zM655 45h1v1h-1zM660 45h1v1h-1zM665 45h1v1h-1zM670 45h1v1h-1zM675 45h1v1h-1zM680 45h1v1h-1zM685 45h1v1h-1zM0 91h1v1h-1zM5 91h1v1h-1zM10 91h1v1h-1zM15 91h1v1h-1zM20 91h1v1h-1zM25 91h1v1h-1zM30 91h1v1h-1zM35 91h1v1h-1zM40 91h1v1h-1zM45 91h1v1h-1zM50 91h1v1h-1zM55 91h1v1h-1zM60 91h1v1h-1zM65 91h1v1h-1zM70 91h1v1h-1zM75 91h1v1h-1zM80 91h1v1h-1zM85 91h1v1h-1zM90 91h1v1h-1zM95 91h1v1h-1zM100 91h1v1h-1zM105 91h1v1h-1zM110 91h1v1h-1zM115 91h1v1h-1zM120 91h1v1h-1zM125 91h1v1h-1zM130 91h1v1h-1zM135 91h1v1h-1zM140 91h1v1h-1zM145 91h1v1h-1zM150 91h1v1h-1zM155 91h1v1h-1zM160 91h1v1h-1zM165 91h1v1h-1zM170 91h1v1h-1zM175 91h1v1h-1zM180 91h1v1h-1zM185 91h1v1h-1zM190 91h1v1h-1zM195 91h1v1h-1zM200 91h1v1h-1zM205 91h1v1h-1zM210 91h1v1h-1zM215 91h1v1h-1zM220 91h1v1h-1zM225 91h1v1h-1zM230 91h1v1h-1zM235 91h1v1h-1zM240 91h1v1h-1zM245 91h1v1h-1zM250 91h1v1h-1zM255 91h1v1h-1zM260 91h1v1h-1zM265 91h1v1h-1zM270 91h1v1h-1zM275 91h1v1h-1zM280 91h1v1h-1zM285 91h1v1h-1zM290 91h1v1h-1zM295 91h1v1h-1zM300 91h1v1h-1zM305 91h1v1h-1zM310 91h1v1h-1zM315 91h1v1h-1zM320 91h1v1h-1zM325 91h1v1h-1zM330 91h1v1h-1zM335 91h1v1h-1zM340 91h1v1h-1zM345 91h1v1h-1zM350 91h1v1h-1zM355 91h1v1h-1zM360 91h1v1h-1zM365 91h1v1h-1zM370 91h1v1h-1zM375 91h1v1h-1zM380 91h1v1h-1zM385 91h1v1h-1zM390 91h1v1h-1zM395 91h1v1h-1zM400 91h1v1h-1zM405 91h1v1h-1zM410 91h1v1h-1zM415 91h1v1h-1zM420 91h1v1h-1zM425 91h1v1h-1zM430 91h1v1h-1zM435 91h1v1h-1zM440 91h1v1h-1zM445 91h1v1h-1zM450 91h1v1h-1zM455 91h1v1h-1zM460 91h1v1h-1zM465 91h1v1h-1zM470 91h1v1h-1zM475 91h1v1h-1zM480 91h1v1h-1zM485 91h1v1h-1zM490 91h1v1h-1zM495 91h1v1h-1zM500 91h1v1h-1zM505 91h1v1h-1zM510 91h1v1h-1zM515 91h1v1h-1zM520 91h1v1h-1zM525 91h1v1h-1zM530 91h1v1h-1zM535 91h1v1h-1zM540 91h1v1h-1zM545 91h1v1h-1zM550 91h1v1h-1zM555 91h1v1h-1zM560 91h1v1h-1zM565 91h1v1h-1zM570 91h1v1h-1zM575 91h1v1h-1zM580 91h1v1h-1zM585 91h1v1h-1zM590 91h1v1h-1zM595 91h1v1h-1zM600 91h1v1h-1zM605 91h1v1h-1zM610 91h1v1h-1zM615 91h1v1h-1zM620 91h1v1h-1zM625 91h1v1h-1zM630 91h1v1h-1zM635 91h1v1h-1zM640 91h1v1h-1zM645 91h1v1h-1zM650 91h1v1h-1zM655 91h1v1h-1zM660 91h1v1h-1zM665 91h1v1h-1zM670 91h1v1h-1zM675 91h1v1h-1zM680 91h1v1h-1zM685 91h1v1h-1zM0 136h1v1h-1zM5 136h1v1h-1zM10 136h1v1h-1zM15 136h1v1h-1zM20 136h1v1h-1zM25 136h1v1h-1zM30 136h1v1h-1zM35 136h1v1h-1zM40 136h1v1h-1zM45 136h1v1h-1zM50 136h1v1h-1zM55 136h1v1h-1zM60 136h1v1h-1zM65 136h1v1h-1zM70 136h1v1h-1zM75 136h1v1h-1zM80 136h1v1h-1zM85 136h1v1h-1zM90 136h1v1h-1zM95 136h1v1h-1zM100 136h1v1h-1zM105 136h1v1h-1zM110 136h1v1h-1zM115 136h1v1h-1zM120 136h1v1h-1zM125 136h1v1h-1zM130 136h1v1h-1zM135 136h1v1h-1zM140 136h1v1h-1zM145 136h1v1h-1zM150 136h1v1h-1zM155 136h1v1h-1zM160 136h1v1h-1zM165 136h1v1h-1zM170 136h1v1h-1zM175 136h1v1h-1zM180 136h1v1h-1zM185 136h1v1h-1zM190 136h1v1h-1zM195 136h1v1h-1zM200 136h1v1h-1zM205 136h1v1h-1zM210 136h1v1h-1zM215 136h1v1h-1zM220 136h1v1h-1zM225 136h1v1h-1zM230 136h1v1h-1zM235 136h1v1h-1zM240 136h1v1h-1zM245 136h1v1h-1zM250 136h1v1h-1zM255 136h1v1h-1zM260 136h1v1h-1zM265 136h1v1h-1zM270 136h1v1h-1zM275 136h1v1h-1zM280 136h1v1h-1zM285 136h1v1h-1zM290 136h1v1h-1zM295 136h1v1h-1zM300 136h1v1h-1zM305 136h1v1h-1zM310 136h1v1h-1zM315 136h1v1h-1zM320 136h1v1h-1zM325 136h1v1h-1zM330 136h1v1h-1zM335 136h1v1h-1zM340 136h1v1h-1zM345 136h1v1h-1zM350 136h1v1h-1zM355 136h1v1h-1zM360 136h1v1h-1zM365 136h1v1h-1zM370 136h1v1h-1zM375 136h1v1h-1zM380 136h1v1h-1zM385 136h1v1h-1zM390 136h1v1h-1zM395 136h1v1h-1zM400 136h1v1h-1zM405 136h1v1h-1zM410 136h1v1h-1zM415 136h1v1h-1zM420 136h1v1h-1zM425 136h1v1h-1zM430 136h1v1h-1zM435 136h1v1h-1zM440 136h1v1h-1zM445 136h1v1h-1zM450 136h1v1h-1zM455 136h1v1h-1zM460 136h1v1h-1zM465 136h1v1h-1zM470 136h1v1h-1zM475 136h1v1h-1zM480 136h1v1h-1zM485 136h1v1h-1zM490 136h1v1h-1zM495 136h1v1h-1zM500 136h1v1h-1zM505 136h1v1h-1zM510 136h1v1h-1zM515 136h1v1h-1zM520 136h1v1h-1zM525 136h1v1h-1zM530 136h1v1h-1zM535 136h1v1h-1zM540 136h1v1h-1zM545 136h1v1h-1zM550 136h1v1h-1zM555 136h1v1h-1zM560 136h1v1h-1zM565 136h1v1h-1zM570 136h1v1h-1zM575 136h1v1h-1zM580 136h1v1h-1zM585 136h1v1h-1zM590 136h1v1h-1zM595 136h1v1h-1zM600 136h1v1h-1zM605 136h1v1h-1zM610 136h1v1h-1zM615 136h1v1h-1zM620 136h1v1h-1zM625 136h1v1h-1zM630 136h1v1h-1zM635 136h1v1h-1zM640 136h1v1h-1zM645 136h1v1h-1zM650 136h1v1h-1zM655 136h1v1h-1zM660 136h1v1h-1zM665 136h1v1h-1zM670 136h1v1h-1zM675 136h1v1h-1zM680 136h1v1h-1zM685 136h1v1h-1zM0 182h1v1h-1zM5 182h1v1h-1zM10 182h1v1h-1zM15 182h1v1h-1zM20 182h1v1h-1zM25 182h1v1h-1zM30 182h1v1h-1zM35 182h1v1h-1zM40 182h1v1h-1zM45 182h1v1h-1zM50 182h1v1h-1zM55 182h1v1h-1zM60 182h1v1h-1zM65 182h1v1h-1zM70 182h1v1h-1zM75 182h1v1h-1zM80 182h1v1h-1zM85 182h1v1h-1zM90 182h1v1h-1zM95 182h1v1h-1zM100 182h1v1h-1zM105 182h1v1h-1zM110 182h1v1h-1zM115 182h1v1h-1zM120 182h1v1h-1zM125 182h1v1h-1zM130 182h1v1h-1zM135 182h1v1h-1zM140 182h1v1h-1zM145 182h1v1h-1zM150 182h1v1h-1zM155 182h1v1h-1zM160 182h1v1h-1zM165 182h1v1h-1zM170 182h1v1h-1zM175 182h1v1h-1zM180 182h1v1h-1zM185 182h1v1h-1zM190 182h1v1h-1zM195 182h1v1h-1zM200 182h1v1h-1zM205 182h1v1h-1zM210 182h1v1h-1zM215 182h1v1h-1zM220 182h1v1h-1zM225 182h1v1h-1zM230 182h1v1h-1zM235 182h1v1h-1zM240 182h1v1h-1zM245 182h1v1h-1zM250 182h1v1h-1zM255 182h1v1h-1zM260 182h1v1h-1zM265 182h1v1h-1zM270 182h1v1h-1zM275 182h1v1h-1zM280 182h1v1h-1zM285 182h1v1h-1zM290 182h1v1h-1zM295 182h1v1h-1zM300 182h1v1h-1zM305 182h1v1h-1zM310 182h1v1h-1zM315 182h1v1h-1zM320 182h1v1h-1zM325 182h1v1h-1zM330 182h1v1h-1zM335 182h1v1h-1zM340 182h1v1h-1zM345 182h1v1h-1zM350 182h1v1h-1zM355 182h1v1h-1zM360 182h1v1h-1zM365 182h1v1h-1zM370 182h1v1h-1zM375 182h1v1h-1zM380 182h1v1h-1zM385 182h1v1h-1zM390 182h1v1h-1zM395 182h1v1h-1zM400 182h1v1h-1zM405 182h1v1h-1zM410 182h1v1h-1zM415 182h1v1h-1zM420 182h1v1h-1zM425 182h1v1h-1zM430 182h1v1h-1zM435 182h1v1h-1zM440 182h1v1h-1zM445 182h1v1h-1zM450 182h1v1h-1zM455 182h1v1h-1zM460 182h1v1h-1zM465 182h1v1h-1zM470 182h1v1h-1zM475 182h1v1h-1zM480 182h1v1h-1zM485 182h1v1h-1zM490 182h1v1h-1zM495 182h1v1h-1zM500 182h1v1h-1zM505 182h1v1h-1zM510 182h1v1h-1zM515 182h1v1h-1zM520 182h1v1h-1zM525 182h1v1h-1zM530 182h1v1h-1zM535 182h1v1h-1zM540 182h1v1h-1zM545 182h1v1h-1zM550 182h1v1h-1zM555 182h1v1h-1zM560 182h1v1h-1zM565 182h1v1h-1zM570 182h1v1h-1zM575 182h1v1h-1zM580 182h1v1h-1zM585 182h1v1h-1zM590 182h1v1h-1zM595 182h1v1h-1zM600 182h1v1h-1zM605 182h1v1h-1zM610 182h1v1h-1zM615 182h1v1h-1zM620 182h1v1h-1zM625 182h1v1h-1zM630 182h1v1h-1zM635 182h1v1h-1zM640 182h1v1h-1zM645 182h1v1h-1zM650 182h1v1h-1zM655 182h1v1h-1zM660 182h1v1h-1zM665 182h1v1h-1zM670 182h1v1h-1zM675 182h1v1h-1zM680 182h1v1h-1zM685 182h1v1h-1zM0 273h1v1h-1zM5 273h1v1h-1zM10 273h1v1h-1zM15 273h1v1h-1zM20 273h1v1h-1zM25 273h1v1h-1zM30 273h1v1h-1zM35 273h1v1h-1zM40 273h1v1h-1zM45 273h1v1h-1zM50 273h1v1h-1zM55 273h1v1h-1zM60 273h1v1h-1zM65 273h1v1h-1zM70 273h1v1h-1zM75 273h1v1h-1zM80 273h1v1h-1zM85 273h1v1h-1zM90 273h1v1h-1zM95 273h1v1h-1zM100 273h1v1h-1zM105 273h1v1h-1zM110 273h1v1h-1zM115 273h1v1h-1zM120 273h1v1h-1zM125 273h1v1h-1zM130 273h1v1h-1zM135 273h1v1h-1zM140 273h1v1h-1zM145 273h1v1h-1zM150 273h1v1h-1zM155 273h1v1h-1zM160 273h1v1h-1zM165 273h1v1h-1zM170 273h1v1h-1zM175 273h1v1h-1zM180 273h1v1h-1zM185 273h1v1h-1zM190 273h1v1h-1zM195 273h1v1h-1zM200 273h1v1h-1zM205 273h1v1h-1zM210 273h1v1h-1zM215 273h1v1h-1zM220 273h1v1h-1zM225 273h1v1h-1zM230 273h1v1h-1zM235 273h1v1h-1zM240 273h1v1h-1zM245 273h1v1h-1zM250 273h1v1h-1zM255 273h1v1h-1zM260 273h1v1h-1zM265 273h1v1h-1zM270 273h1v1h-1zM275 273h1v1h-1zM280 273h1v1h-1zM285 273h1v1h-1zM290 273h1v1h-1zM295 273h1v1h-1zM300 273h1v1h-1zM305 273h1v1h-1zM310 273h1v1h-1zM315 273h1v1h-1zM320 273h1v1h-1zM325 273h1v1h-1zM330 273h1v1h-1zM335 273h1v1h-1zM340 273h1v1h-1zM345 273h1v1h-1zM350 273h1v1h-1zM355 273h1v1h-1zM360 273h1v1h-1zM365 273h1v1h-1zM370 273h1v1h-1zM375 273h1v1h-1zM380 273h1v1h-1zM385 273h1v1h-1zM390 273h1v1h-1zM395 273h1v1h-1zM400 273h1v1h-1zM405 273h1v1h-1zM410 273h1v1h-1zM415 273h1v1h-1zM420 273h1v1h-1zM425 273h1v1h-1zM430 273h1v1h-1zM435 273h1v1h-1zM440 273h1v1h-1zM445 273h1v1h-1zM450 273h1v1h-1zM455 273h1v1h-1zM460 273h1v1h-1zM465 273h1v1h-1zM470 273h1v1h-1zM475 273h1v1h-1zM480 273h1v1h-1zM485 273h1v1h-1zM490 273h1v1h-1zM495 273h1v1h-1zM500 273h1v1h-1zM505 273h1v1h-1zM510 273h1v1h-1zM515 273h1v1h-1zM520 273h1v1h-1zM525 273h1v1h-1zM530 273h1v1h-1zM535 273h1v1h-1zM540 273h1v1h-1zM545 273h1v1h-1zM550 273h1v1h-1zM555 273h1v1h-1zM560 273h1v1h-1zM565 273h1v1h-1zM570 273h1v1h-1zM575 273h1v1h-1zM580 273h1v1h-1zM585 273h1v1h-1zM590 273h1v1h-1zM595 273h1v1h-1zM600 273h1v1h-1zM605 273h1v1h-1zM610 273h1v1h-1zM615 273h1v1h-1zM620 273h1v1h-1zM625 273h1v1h-1zM630 273h1v1h-1zM635 273h1v1h-1zM640 273h1v1h-1zM645 273h1v1h-1zM650 273h1v1h-1zM655 273h1v1h-1zM660 273h1v1h-1zM665 273h1v1h-1zM670 273h1v1h-1zM675 273h1v1h-1zM680 273h1v1h-1zM685 273h1v1h-1zM0 319h1v1h-1zM5 319h1v1h-1zM10 319h1v1h-1zM15 319h1v1h-1zM20 319h1v1h-1zM25 319h1v1h-1zM30 319h1v1h-1zM35 319h1v1h-1zM40 319h1v1h-1zM45 319h1v1h-1zM50 319h1v1h-1zM55 319h1v1h-1zM60 319h1v1h-1zM65 319h1v1h-1zM70 319h1v1h-1zM75 319h1v1h-1zM80 319h1v1h-1zM85 319h1v1h-1zM90 319h1v1h-1zM95 319h1v1h-1zM100 319h1v1h-1zM105 319h1v1h-1zM110 319h1v1h-1zM115 319h1v1h-1zM120 319h1v1h-1zM125 319h1v1h-1zM130 319h1v1h-1zM135 319h1v1h-1zM140 319h1v1h-1zM145 319h1v1h-1zM150 319h1v1h-1zM155 319h1v1h-1zM160 319h1v1h-1zM165 319h1v1h-1zM170 319h1v1h-1zM175 319h1v1h-1zM180 319h1v1h-1zM185 319h1v1h-1zM190 319h1v1h-1zM195 319h1v1h-1zM200 319h1v1h-1zM205 319h1v1h-1zM210 319h1v1h-1zM215 319h1v1h-1zM220 319h1v1h-1zM225 319h1v1h-1zM230 319h1v1h-1zM235 319h1v1h-1zM240 319h1v1h-1zM245 319h1v1h-1zM250 319h1v1h-1zM255 319h1v1h-1zM260 319h1v1h-1zM265 319h1v1h-1zM270 319h1v1h-1zM275 319h1v1h-1zM280 319h1v1h-1zM285 319h1v1h-1zM290 319h1v1h-1zM295 319h1v1h-1zM300 319h1v1h-1zM305 319h1v1h-1zM310 319h1v1h-1zM315 319h1v1h-1zM320 319h1v1h-1zM325 319h1v1h-1zM330 319h1v1h-1zM335 319h1v1h-1zM340 319h1v1h-1zM345 319h1v1h-1zM350 319h1v1h-1zM355 319h1v1h-1zM360 319h1v1h-1zM365 319h1v1h-1zM370 319h1v1h-1zM375 319h1v1h-1zM380 319h1v1h-1zM385 319h1v1h-1zM390 319h1v1h-1zM395 319h1v1h-1zM400 319h1v1h-1zM405 319h1v1h-1zM410 319h1v1h-1zM415 319h1v1h-1zM420 319h1v1h-1zM425 319h1v1h-1zM430 319h1v1h-1zM435 319h1v1h-1zM440 319h1v1h-1zM445 319h1v1h-1zM450 319h1v1h-1zM455 319h1v1h-1zM460 319h1v1h-1zM465 319h1v1h-1zM470 319h1v1h-1zM475 319h1v1h-1zM480 319h1v1h-1zM485 319h1v1h-1zM490 319h1v1h-1zM495 319h1v1h-1zM500 319h1v1h-1zM505 319h1v1h-1zM510 319h1v1h-1zM515 319h1v1h-1zM520 319h1v1h-1zM525 319h1v1h-1zM530 319h1v1h-1zM535 319h1v1h-1zM540 319h1v1h-1zM545 319h1v1h-1zM550 319h1v1h-1zM555 319h1v1h-1zM560 319h1v1h-1zM565 319h1v1h-1zM570 319h1v1h-1zM575 319h1v1h-1zM580 319h1v1h-1zM585 319h1v1h-1zM590 319h1v1h-1zM595 319h1v1h-1zM600 319h1v1h-1zM605 319h1v1h-1zM610 319h1v1h-1zM615 319h1v1h-1zM620 319h1v1h-1zM625 319h1v1h-1zM630 319h1v1h-1zM635 319h1v1h-1zM640 319h1v1h-1zM645 319h1v1h-1zM650 319h1v1h-1zM655 319h1v1h-1zM660 319h1v1h-1zM665 319h1v1h-1zM670 319h1v1h-1zM675 319h1v1h-1zM680 319h1v1h-1zM685 319h1v1h-1zM0 364h1v1h-1zM5 364h1v1h-1zM10 364h1v1h-1zM15 364h1v1h-1zM20 364h1v1h-1zM25 364h1v1h-1zM30 364h1v1h-1zM35 364h1v1h-1zM40 364h1v1h-1zM45 364h1v1h-1zM50 364h1v1h-1zM55 364h1v1h-1zM60 364h1v1h-1zM65 364h1v1h-1zM70 364h1v1h-1zM75 364h1v1h-1zM80 364h1v1h-1zM85 364h1v1h-1zM90 364h1v1h-1zM95 364h1v1h-1zM100 364h1v1h-1zM105 364h1v1h-1zM110 364h1v1h-1zM115 364h1v1h-1zM120 364h1v1h-1zM125 364h1v1h-1zM130 364h1v1h-1zM135 364h1v1h-1zM140 364h1v1h-1zM145 364h1v1h-1zM150 364h1v1h-1zM155 364h1v1h-1zM160 364h1v1h-1zM165 364h1v1h-1zM170 364h1v1h-1zM175 364h1v1h-1zM180 364h1v1h-1zM185 364h1v1h-1zM190 364h1v1h-1zM195 364h1v1h-1zM200 364h1v1h-1zM205 364h1v1h-1zM210 364h1v1h-1zM215 364h1v1h-1zM220 364h1v1h-1zM225 364h1v1h-1zM230 364h1v1h-1zM235 364h1v1h-1zM240 364h1v1h-1zM245 364h1v1h-1zM250 364h1v1h-1zM255 364h1v1h-1zM260 364h1v1h-1zM265 364h1v1h-1zM270 364h1v1h-1zM275 364h1v1h-1zM280 364h1v1h-1zM285 364h1v1h-1zM290 364h1v1h-1zM295 364h1v1h-1zM300 364h1v1h-1zM305 364h1v1h-1zM310 364h1v1h-1zM315 364h1v1h-1zM320 364h1v1h-1zM325 364h1v1h-1zM330 364h1v1h-1zM335 364h1v1h-1zM340 364h1v1h-1zM345 364h1v1h-1zM350 364h1v1h-1zM355 364h1v1h-1zM360 364h1v1h-1zM365 364h1v1h-1zM370 364h1v1h-1zM375 364h1v1h-1zM380 364h1v1h-1zM385 364h1v1h-1zM390 364h1v1h-1zM395 364h1v1h-1zM400 364h1v1h-1zM405 364h1v1h-1zM410 364h1v1h-1zM415 364h1v1h-1zM420 364h1v1h-1zM425 364h1v1h-1zM430 364h1v1h-1zM435 364h1v1h-1zM440 364h1v1h-1zM445 364h1v1h-1zM450 364h1v1h-1zM455 364h1v1h-1zM460 364h1v1h-1zM465 364h1v1h-1zM470 364h1v1h-1zM475 364h1v1h-1zM480 364h1v1h-1zM485 364h1v1h-1zM490 364h1v1h-1zM495 364h1v1h-1zM500 364h1v1h-1zM505 364h1v1h-1zM510 364h1v1h-1zM515 364h1v1h-1zM520 364h1v1h-1zM525 364h1v1h-1zM530 364h1v1h-1zM535 364h1v1h-1zM540 364h1v1h-1zM545 364h1v1h-1zM550 364h1v1h-1zM555 364h1v1h-1zM560 364h1v1h-1zM565 364h1v1h-1zM570 364h1v1h-1zM575 364h1v1h-1zM580 364h1v1h-1zM585 364h1v1h-1zM590 364h1v1h-1zM595 364h1v1h-1zM600 364h1v1h-1zM605 364h1v1h-1zM610 364h1v1h-1zM615 364h1v1h-1zM620 364h1v1h-1zM625 364h1v1h-1zM630 364h1v1h-1zM635 364h1v1h-1zM640 364h1v1h-1zM645 364h1v1h-1zM650 364h1v1h-1zM655 364h1v1h-1zM660 364h1v1h-1zM665 364h1v1h-1zM670 364h1v1h-1zM675 364h1v1h-1zM680 364h1v1h-1zM685 364h1v1h-1zM0 410h1v1h-1zM5 410h1v1h-1zM10 410h1v1h-1zM15 410h1v1h-1zM20 410h1v1h-1zM25 410h1v1h-1zM30 410h1v1h-1zM35 410h1v1h-1zM40 410h1v1h-1zM45 410h1v1h-1zM50 410h1v1h-1zM55 410h1v1h-1zM60 410h1v1h-1zM65 410h1v1h-1zM70 410h1v1h-1zM75 410h1v1h-1zM80 410h1v1h-1zM85 410h1v1h-1zM90 410h1v1h-1zM95 410h1v1h-1zM100 410h1v1h-1zM105 410h1v1h-1zM110 410h1v1h-1zM115 410h1v1h-1zM120 410h1v1h-1zM125 410h1v1h-1zM130 410h1v1h-1zM135 410h1v1h-1zM140 410h1v1h-1zM145 410h1v1h-1zM150 410h1v1h-1zM155 410h1v1h-1zM160 410h1v1h-1zM165 410h1v1h-1zM170 410h1v1h-1zM175 410h1v1h-1zM180 410h1v1h-1zM185 410h1v1h-1zM190 410h1v1h-1zM195 410h1v1h-1zM200 410h1v1h-1zM205 410h1v1h-1zM210 410h1v1h-1zM215 410h1v1h-1zM220 410h1v1h-1zM225 410h1v1h-1zM230 410h1v1h-1zM235 410h1v1h-1zM240 410h1v1h-1zM245 410h1v1h-1zM250 410h1v1h-1zM255 410h1v1h-1zM260 410h1v1h-1zM265 410h1v1h-1zM270 410h1v1h-1zM275 410h1v1h-1zM280 410h1v1h-1zM285 410h1v1h-1zM290 410h1v1h-1zM295 410h1v1h-1zM300 410h1v1h-1zM305 410h1v1h-1zM310 410h1v1h-1zM315 410h1v1h-1zM320 410h1v1h-1zM325 410h1v1h-1zM330 410h1v1h-1zM335 410h1v1h-1zM340 410h1v1h-1zM345 410h1v1h-1zM350 410h1v1h-1zM355 410h1v1h-1zM360 410h1v1h-1zM365 410h1v1h-1zM370 410h1v1h-1zM375 410h1v1h-1zM380 410h1v1h-1zM385 410h1v1h-1zM390 410h1v1h-1zM395 410h1v1h-1zM400 410h1v1h-1zM405 410h1v1h-1zM410 410h1v1h-1zM415 410h1v1h-1zM420 410h1v1h-1zM425 410h1v1h-1zM430 410h1v1h-1zM435 410h1v1h-1zM440 410h1v1h-1zM445 410h1v1h-1zM450 410h1v1h-1zM455 410h1v1h-1zM460 410h1v1h-1zM465 410h1v1h-1zM470 410h1v1h-1zM475 410h1v1h-1zM480 410h1v1h-1zM485 410h1v1h-1zM490 410h1v1h-1zM495 410h1v1h-1zM500 410h1v1h-1zM505 410h1v1h-1zM510 410h1v1h-1zM515 410h1v1h-1zM520 410h1v1h-1zM525 410h1v1h-1zM530 410h1v1h-1zM535 410h1v1h-1zM540 410h1v1h-1zM545 410h1v1h-1zM550 410h1v1h-1zM555 410h1v1h-1zM560 410h1v1h-1zM565 410h1v1h-1zM570 410h1v1h-1zM575 410h1v1h-1zM580 410h1v1h-1zM585 410h1v1h-1zM590 410h1v1h-1zM595 410h1v1h-1zM600 410h1v1h-1zM605 410h1v1h-1zM610 410h1v1h-1zM615 410h1v1h-1zM620 410h1v1h-1zM625 410h1v1h-1zM630 410h1v1h-1zM635 410h1v1h-1zM640 410h1v1h-1zM645 410h1v1h-1zM650 410h1v1h-1zM655 410h1v1h-1zM660 410h1v1h-1zM665 410h1v1h-1zM670 410h1v1h-1zM675 410h1v1h-1zM680 410h1v1h-1zM685 410h1v1h-1zM343 0h1v456h-1zM0 228h686v1h-686zM9 226h1v5h-1zM18 226h1v5h-1zM27 226h1v5h-1zM36 226h1v5h-1zM45 226h1v5h-1zM54 226h1v5h-1zM63 226h1v5h-1zM72 226h1v5h-1zM81 226h1v5h-1zM90 226h1v5h-1zM99 226h1v5h-1zM108 226h1v5h-1zM117 226h1v5h-1zM126 226h1v5h-1zM135 226h1v5h-1zM144 226h1v5h-1zM153 226h1v5h-1zM162 226h1v5h-1zM171 226h1v5h-1zM180 226h1v5h-1zM189 226h1v5h-1zM198 226h1v5h-1zM207 226h1v5h-1zM216 226h1v5h-1zM225 226h1v5h-1zM234 226h1v5h-1zM243 226h1v5h-1zM252 226h1v5h-1zM261 226h1v5h-1zM270 226h1v5h-1zM279 226h1v5h-1zM288 226h1v5h-1zM297 226h1v5h-1zM306 226h1v5h-1zM315 226h1v5h-1zM324 226h1v5h-1zM333 226h1v5h-1zM352 226h1v5h-1zM361 226h1v5h-1zM370 226h1v5h-1zM379 226h1v5h-1zM388 226h1v5h-1zM397 226h1v5h-1zM406 226h1v5h-1zM415 226h1v5h-1zM424 226h1v5h-1zM433 226h1v5h-1zM442 226h1v5h-1zM451 226h1v5h-1zM460 226h1v5h-1zM469 226h1v5h-1zM478 226h1v5h-1zM487 226h1v5h-1zM496 226h1v5h-1zM505 226h1v5h-1zM514 226h1v5h-1zM523 226h1v5h-1zM532 226h1v5h-1zM541 226h1v5h-1zM550 226h1v5h-1zM559 226h1v5h-1zM568 226h1v5h-1zM577 226h1v5h-1zM586 226h1v5h-1zM595 226h1v5h-1zM604 226h1v5h-1zM613 226h1v5h-1zM622 226h1v5h-1zM631 226h1v5h-1zM640 226h1v5h-1zM649 226h1v5h-1zM658 226h1v5h-1zM667 226h1v5h-1zM676 226h1v5h-1zM341 9h5v1h-5zM341 18h5v1h-5zM341 27h5v1h-5zM341 36h5v1h-5zM341 45h5v1h-5zM341 54h5v1h-5zM341 63h5v1h-5zM341 72h5v1h-5zM341 82h5v1h-5zM341 91h5v1h-5zM341 100h5v1h-5zM341 109h5v1h-5zM341 118h5v1h-5zM341 127h5v1h-5zM341 136h5v1h-5zM341 145h5v1h-5zM341 155h5v1h-5zM341 164h5v1h-5zM341 173h5v1h-5zM341 182h5v1h-5zM341 191h5v1h-5zM341 200h5v1h-5zM341 209h5v1h-5zM341 218h5v1h-5zM341 237h5v1h-5zM341 246h5v1h-5zM341 255h5v1h-5zM341 264h5v1h-5zM341 273h5v1h-5zM341 282h5v1h-5zM341 291h5v1h-5zM341 300h5v1h-5zM341 310h5v1h-5zM341 319h5v1h-5zM341 328h5v1h-5zM341 337h5v1h-5zM341 346h5v1h-5zM341 355h5v1h-5zM341 364h5v1h-5zM341 373h5v1h-5zM341 383h5v1h-5zM341 392h5v1h-5zM341 401h5v1h-5zM341 410h5v1h-5zM341 419h5v1h-5zM341 428h5v1h-5zM341 437h5v1h-5zM341 446h5v1h-5zM9 0h1v3h-1zM9 453h1v3h-1zM18 0h1v3h-1zM18 453h1v3h-1zM27 0h1v6h-1zM27 450h1v6h-1zM36 0h1v3h-1zM36 453h1v3h-1zM45 0h1v3h-1zM45 453h1v3h-1zM54 0h1v3h-1zM54 453h1v3h-1zM63 0h1v3h-1zM63 453h1v3h-1zM72 0h1v6h-1zM72 450h1v6h-1zM81 0h1v3h-1zM81 453h1v3h-1zM90 0h1v3h-1zM90 453h1v3h-1zM99 0h1v3h-1zM99 453h1v3h-1zM108 0h1v3h-1zM108 453h1v3h-1zM117 0h1v6h-1zM117 450h1v6h-1zM126 0h1v3h-1zM126 453h1v3h-1zM135 0h1v3h-1zM135 453h1v3h-1zM144 0h1v3h-1zM144 453h1v3h-1zM153 0h1v3h-1zM153 453h1v3h-1zM162 0h1v6h-1zM162 450h1v6h-1zM171 0h1v3h-1zM171 453h1v3h-1zM180 0h1v3h-1zM180 453h1v3h-1zM189 0h1v3h-1zM189 453h1v3h-1zM198 0h1v3h-1zM198 453h1v3h-1zM207 0h1v6h-1zM207 450h1v6h-1zM216 0h1v3h-1zM216 453h1v3h-1zM225 0h1v3h-1zM225 453h1v3h-1zM234 0h1v3h-1zM234 453h1v3h-1zM243 0h1v3h-1zM243 453h1v3h-1zM252 0h1v6h-1zM252 450h1v6h-1zM261 0h1v3h-1zM261 453h1v3h-1zM270 0h1v3h-1zM270 453h1v3h-1zM279 0h1v3h-1zM279 453h1v3h-1zM288 0h1v3h-1zM288 453h1v3h-1zM297 0h1v6h-1zM297 450h1v6h-1zM306 0h1v3h-1zM306 453h1v3h-1zM315 0h1v3h-1zM315 453h1v3h-1zM324 0h1v3h-1zM324 453h1v3h-1zM333 0h1v3h-1zM333 453h1v3h-1zM343 0h1v6h-1zM343 450h1v6h-1zM352 0h1v3h-1zM352 453h1v3h-1zM361 0h1v3h-1zM361 453h1v3h-1zM370 0h1v3h-1zM370 453h1v3h-1zM379 0h1v3h-1zM379 453h1v3h-1zM388 0h1v6h-1zM388 450h1v6h-1zM397 0h1v3h-1zM397 453h1v3h-1zM406 0h1v3h-1zM406 453h1v3h-1zM415 0h1v3h-1zM415 453h1v3h-1zM424 0h1v3h-1zM424 453h1v3h-1zM433 0h1v6h-1zM433 450h1v6h-1zM442 0h1v3h-1zM442 453h1v3h-1zM451 0h1v3h-1zM451 453h1v3h-1zM460 0h1v3h-1zM460 453h1v3h-1zM469 0h1v3h-1zM469 453h1v3h-1zM478 0h1v6h-1zM478 450h1v6h-1zM487 0h1v3h-1zM487 453h1v3h-1zM496 0h1v3h-1zM496 453h1v3h-1zM505 0h1v3h-1zM505 453h1v3h-1zM514 0h1v3h-1zM514 453h1v3h-1zM523 0h1v6h-1zM523 450h1v6h-1zM532 0h1v3h-1zM532 453h1v3h-1zM541 0h1v3h-1zM541 453h1v3h-1zM550 0h1v3h-1zM550 453h1v3h-1zM559 0h1v3h-1zM559 453h1v3h-1zM568 0h1v6h-1zM568 450h1v6h-1zM577 0h1v3h-1zM577 453h1v3h-1zM586 0h1v3h-1zM586 453h1v3h-1zM595 0h1v3h-1zM595 453h1v3h-1zM604 0h1v3h-1zM604 453h1v3h-1zM613 0h1v6h-1zM613 450h1v6h-1zM622 0h1v3h-1zM622 453h1v3h-1zM631 0h1v3h-1zM631 453h1v3h-1zM640 0h1v3h-1zM640 453h1v3h-1zM649 0h1v3h-1zM649 453h1v3h-1zM658 0h1v6h-1zM658 450h1v6h-1zM667 0h1v3h-1zM667 453h1v3h-1zM676 0h1v3h-1zM676 453h1v3h-1zM0 9h3v1h-3zM683 9h3v1h-3zM0 18h3v1h-3zM683 18h3v1h-3zM0 27h3v1h-3zM683 27h3v1h-3zM0 36h3v1h-3zM683 36h3v1h-3zM0 45h6v1h-6zM680 45h6v1h-6zM0 54h3v1h-3zM683 54h3v1h-3zM0 63h3v1h-3zM683 63h3v1h-3zM0 72h3v1h-3zM683 72h3v1h-3zM0 82h3v1h-3zM683 82h3v1h-3zM0 91h6v1h-6zM680 91h6v1h-6zM0 100h3v1h-3zM683 100h3v1h-3zM0 109h3v1h-3zM683 109h3v1h-3zM0 118h3v1h-3zM683 118h3v1h-3zM0 127h3v1h-3zM683 127h3v1h-3zM0 136h6v1h-6zM680 136h6v1h-6zM0 145h3v1h-3zM683 145h3v1h-3zM0 155h3v1h-3zM683 155h3v1h-3zM0 164h3v1h-3zM683 164h3v1h-3zM0 173h3v1h-3zM683 173h3v1h-3zM0 182h6v1h-6zM680 182h6v1h-6zM0 191h3v1h-3zM683 191h3v1h-3zM0 200h3v1h-3zM683 200h3v1h-3zM0 209h3v1h-3zM683 209h3v1h-3zM0 218h3v1h-3zM683 218h3v1h-3zM0 228h6v1h-6zM680 228h6v1h-6zM0 237h3v1h-3zM683 237h3v1h-3zM0 246h3v1h-3zM683 246h3v1h-3zM0 255h3v1h-3zM683 255h3v1h-3zM0 264h3v1h-3zM683 264h3v1h-3zM0 273h6v1h-6zM680 273h6v1h-6zM0 282h3v1h-3zM683 282h3v1h-3zM0 291h3v1h-3zM683 291h3v1h-3zM0 300h3v1h-3zM683 300h3v1h-3zM0 310h3v1h-3zM683 310h3v1h-3zM0 319h6v1h-6zM680 319h6v1h-6zM0 328h3v1h-3zM683 328h3v1h-3zM0 337h3v1h-3zM683 337h3v1h-3zM0 346h3v1h-3zM683 346h3v1h-3zM0 355h3v1h-3zM683 355h3v1h-3zM0 364h6v1h-6zM680 364h6v1h-6zM0 373h3v1h-3zM683 373h3v1h-3zM0 383h3v1h-3zM683 383h3v1h-3zM0 392h3v1h-3zM683 392h3v1h-3zM0 401h3v1h-3zM683 401h3v1h-3zM0 410h6v1h-6zM680 410h6v1h-6zM0 419h3v1h-3zM683 419h3v1h-3zM0 428h3v1h-3zM683 428h3v1h-3zM0 437h3v1h-3zM683 437h3v1h-3zM0 446h3v1h-3zM683 446h3v1h-3zM0 0h1v456h-1zM0 0h686v1h-686zM685 0h1v456h-1z" fill="#c6c8e8"/><path d="M1 32h1v2h-1zM2 32h1v2h-1zM3 32h1v2h-1zM4 32h1v2h-1zM5 32h1v2h-1zM6 32h1v3h-1zM7 33h1v2h-1zM8 33h1v3h-1zM9 34h1v3h-1zM10 35h1v2h-1zM11 35h1v3h-1zM12 36h1v3h-1zM13 37h1v3h-1zM14 38h1v3h-1zM15 39h1v3h-1zM16 40h1v4h-1zM17 42h1v3h-1zM18 43h1v3h-1zM19 44h1v4h-1zM20 46h1v3h-1zM21 47h1v4h-1zM22 49h1v3h-1zM23 50h1v4h-1zM24 52h1v3h-1zM25 53h1v4h-1zM26 55h1v3h-1zM27 56h1v4h-1zM28 58h1v4h-1zM29 60h1v3h-1zM30 61h1v3h-1zM31 62h1v4h-1zM32 64h1v3h-1zM33 65h1v4h-1zM34 67h1v3h-1zM35 68h1v3h-1zM36 69h1v3h-1zM37 70h1v3h-1zM38 71h1v3h-1zM39 72h1v3h-1zM40 73h1v3h-1zM41 74h1v2h-1zM42 74h1v3h-1zM43 75h1v2h-1zM44 75h1v3h-1zM45 76h1v2h-1zM46 76h1v2h-1zM47 76h1v2h-1zM48 76h1v2h-1zM49 76h1v2h-1zM50 76h1v2h-1zM51 75h1v3h-1zM52 75h1v2h-1zM53 74h1v3h-1zM54 74h1v2h-1zM55 73h1v3h-1zM56 72h1v3h-1zM57 71h1v3h-1zM58 70h1v3h-1zM59 69h1v3h-1zM60 68h1v3h-1zM61 66h1v4h-1zM62 65h1v3h-1zM63 64h1v3h-1zM64 62h1v4h-1zM65 61h1v3h-1zM66 59h1v4h-1zM67 58h1v3h-1zM68 56h1v4h-1zM69 55h1v3h-1zM70 53h1v4h-1zM71 52h1v3h-1zM72 50h1v4h-1zM73 49h1v3h-1zM74 47h1v4h-1zM75 46h1v3h-1zM76 44h1v4h-1zM77 43h1v3h-1zM78 42h1v3h-1zM79 40h1v4h-1zM80 39h1v3h-1zM81 38h1v3h-1zM82 37h1v3h-1zM83 36h1v3h-1zM84 35h1v3h-1zM85 34h1v3h-1zM86 34h1v2h-1zM87 33h1v3h-1zM88 33h1v2h-1zM89 32h1v3h-1zM90 32h1v2h-1zM91 32h1v2h-1zM92 32h1v2h-1zM93 32h1v2h-1zM94 32h1v2h-1zM95 32h1v2h-1zM96 32h1v3h-1zM97 33h1v2h-1zM98 33h1v3h-1zM99 34h1v2h-1zM100 34h1v3h-1zM101 35h1v3h-1zM102 36h1v3h-1zM103 37h1v3h-1zM104 38h1v3h-1zM105 39h1v3h-1zM106 40h1v3h-1zM107 41h1v4h-1zM108 43h1v3h-1zM109 44h1v3h-1zM110 45h1v4h-1zM111 47h1v3h-1zM112 48h1v4h-1zM113 50h1v3h-1zM114 51h1v4h-1zM115 53h1v4h-1zM116 55h1v3h-1zM117 56h1v4h-1zM118 58h1v3h-1zM119 59h1v4h-1zM120 61h1v3h-1zM121 62h1v3h-1zM122 63h1v4h-1zM123 65h1v3h-1zM124 66h1v3h-1zM125 67h1v4h-1zM126 69h1v3h-1zM127 70h1v3h-1zM128 71h1v3h-1zM129 72h1v3h-1zM130 73h1v2h-1zM131 73h1v3h-1zM132 74h1v3h-1zM133 75h1v2h-1zM134 75h1v3h-1zM135 76h1v2h-1zM136 76h1v2h-1zM137 76h1v2h-1zM138 76h1v2h-1zM139 76h1v2h-1zM140 76h1v2h-1zM141 75h1v3h-1zM142 75h1v2h-1zM143 74h1v3h-1zM144 74h1v2h-1zM145 73h1v3h-1zM146 72h1v3h-1zM147 71h1v3h-1zM148 70h1v3h-1zM149 69h1v3h-1zM150 68h1v3h-1zM151 67h1v3h-1zM152 65h1v4h-1zM153 64h1v3h-1zM154 63h1v3h-1zM155 61h1v4h-1zM156 60h1v3h-1zM157 58h1v4h-1zM158 57h1v3h-1zM159 55h1v4h-1zM160 54h1v3h-1zM161 52h1v4h-1zM162 51h1v3h-1zM163 49h1v4h-1zM164 48h1v3h-1zM165 46h1v4h-1zM166 45h1v3h-1zM167 43h1v4h-1zM168 42h1v3h-1zM169 41h1v3h-1zM170 40h1v3h-1zM171 38h1v4h-1zM172 37h1v3h-1zM173 36h1v3h-1zM174 35h1v3h-1zM175 35h1v2h-1zM176 34h1v3h-1zM177 33h1v3h-1zM178 33h1v2h-1zM179 32h1v3h-1zM180 32h1v2h-1zM181 32h1v2h-1zM182 32h1v2h-1zM183 32h1v2h-1zM184 32h1v2h-1zM185 32h1v2h-1zM186 32h1v3h-1zM187 33h1v2h-1zM188 33h1v2h-1zM189 33h1v3h-1zM190 34h1v3h-1zM191 35h1v3h-1zM192 36h1v3h-1zM193 37h1v3h-1zM194 38h1v3h-1zM195 39h1v3h-1zM196 40h1v3h-1zM197 41h1v3h-1zM198 42h1v4h-1zM199 44h1v3h-1zM200 45h1v4h-1zM201 47h1v3h-1zM202 48h1v3h-1zM203 49h1v4h-1zM204 51h1v4h-1zM205 53h1v3h-1zM206 54h1v4h-1zM207 56h1v3h-1zM208 57h1v4h-1zM209 59h1v3h-1zM210 60h1v4h-1zM211 62h1v3h-1zM212 63h1v3h-1zM213 64h1v4h-1zM214 66h1v3h-1zM215 67h1v3h-1zM216 68h1v3h-1zM217 69h1v4h-1zM218 71h1v3h-1zM219 72h1v2h-1zM220 72h1v3h-1zM221 73h1v3h-1zM222 74h1v3h-1zM223 75h1v2h-1zM224 75h1v3h-1zM225 76h1v2h-1zM226 76h1v2h-1zM227 76h1v2h-1zM228 76h1v2h-1zM229 76h1v2h-1zM230 76h1v2h-1zM231 76h1v2h-1zM232 75h1v3h-1zM233 75h1v2h-1zM234 74h1v3h-1zM235 73h1v3h-1zM236 72h1v3h-1zM237 72h1v2h-1zM238 71h1v3h-1zM239 69h1v4h-1zM240 68h1v3h-1zM241 67h1v3h-1zM242 66h1v3h-1zM243 64h1v4h-1zM244 63h1v3h-1zM245 62h1v3h-1zM246 60h1v4h-1zM247 59h1v3h-1zM248 57h1v4h-1zM249 56h1v3h-1zM250 54h1v4h-1zM251 53h1v3h-1zM252 51h1v4h-1zM253 50h1v3h-1zM254 48h1v4h-1zM255 47h1v3h-1zM256 45h1v4h-1zM257 44h1v3h-1zM258 42h1v4h-1zM259 41h1v3h-1zM260 40h1v3h-1zM261 39h1v3h-1zM262 38h1v3h-1zM263 37h1v3h-1zM264 36h1v3h-1zM265 35h1v3h-1zM266 34h1v3h-1zM267 33h1v3h-1zM268 33h1v2h-1zM269 33h1v2h-1zM270 32h1v3h-1zM271 32h1v2h-1zM272 32h1v2h-1zM273 32h1v2h-1zM274 32h1v2h-1zM275 32h1v2h-1zM276 32h1v2h-1zM277 32h1v3h-1zM278 33h1v2h-1zM279 33h1v3h-1zM280 34h1v3h-1zM281 35h1v2h-1zM282 35h1v3h-1zM283 36h1v3h-1zM284 37h1v3h-1zM285 38h1v4h-1zM286 40h1v3h-1zM287 41h1v3h-1zM288 42h1v3h-1zM289 43h1v4h-1zM290 45h1v3h-1zM291 46h1v4h-1zM292 48h1v3h-1zM293 49h1v4h-1zM294 51h1v3h-1zM295 52h1v4h-1zM296 54h1v3h-1zM297 55h1v4h-1zM298 57h1v3h-1zM299 58h1v4h-1zM300 60h1v3h-1zM301 61h1v4h-1zM302 63h1v3h-1zM303 64h1v3h-1zM304 65h1v4h-1zM305 67h1v3h-1zM306 68h1v3h-1zM307 69h1v3h-1zM308 70h1v3h-1zM309 71h1v3h-1zM310 72h1v3h-1zM311 73h1v3h-1zM312 74h1v2h-1zM313 74h1v3h-1zM314 75h1v2h-1zM315 75h1v3h-1zM316 76h1v2h-1zM317 76h1v2h-1zM318 76h1v2h-1zM319 76h1v2h-1zM320 76h1v2h-1zM321 76h1v2h-1zM322 75h1v3h-1zM323 75h1v2h-1zM324 74h1v3h-1zM325 73h1v3h-1zM326 73h1v2h-1zM327 72h1v3h-1zM328 71h1v3h-1zM329 70h1v3h-1zM330 69h1v3h-1zM331 67h1v4h-1zM332 66h1v3h-1zM333 65h1v3h-1zM334 63h1v4h-1zM335 62h1v3h-1zM336 61h1v3h-1zM337 59h1v4h-1zM338 58h1v3h-1zM339 56h1v4h-1zM340 55h1v3h-1zM341 53h1v4h-1zM342 51h1v4h-1zM343 50h1v3h-1zM344 48h1v4h-1zM345 47h1v3h-1zM346 45h1v4h-1zM347 44h1v3h-1zM348 43h1v3h-1zM349 41h1v4h-1zM350 40h1v3h-1zM351 39h1v3h-1zM352 38h1v3h-1zM353 37h1v3h-1zM354 36h1v3h-1zM355 35h1v3h-1zM356 34h1v3h-1zM357 34h1v2h-1zM358 33h1v3h-1zM359 33h1v2h-1zM360 32h1v3h-1zM361 32h1v2h-1zM362 32h1v2h-1zM363 32h1v2h-1zM364 32h1v2h-1zM365 32h1v2h-1zM366 32h1v2h-1zM367 32h1v3h-1zM368 33h1v2h-1zM369 33h1v3h-1zM370 34h1v2h-1zM371 34h1v3h-1zM372 35h1v3h-1zM373 36h1v3h-1zM374 37h1v3h-1zM375 38h1v3h-1zM376 39h1v3h-1zM377 40h1v4h-1zM378 42h1v3h-1zM379 43h1v3h-1zM380 44h1v4h-1zM381 46h1v3h-1zM382 47h1v4h-1zM383 49h1v3h-1zM384 50h1v4h-1zM385 52h1v3h-1zM386 53h1v4h-1zM387 55h1v3h-1zM388 56h1v4h-1zM389 58h1v3h-1zM390 59h1v4h-1zM391 61h1v3h-1zM392 62h1v4h-1zM393 64h1v3h-1zM394 65h1v3h-1zM395 66h1v4h-1zM396 68h1v3h-1zM397 69h1v3h-1zM398 70h1v3h-1zM399 71h1v3h-1zM400 72h1v3h-1zM401 73h1v3h-1zM402 74h1v2h-1zM403 74h1v3h-1zM404 75h1v2h-1zM405 75h1v3h-1zM406 76h1v2h-1zM407 76h1v2h-1zM408 76h1v2h-1zM409 76h1v2h-1zM410 76h1v2h-1zM411 76h1v2h-1zM412 75h1v3h-1zM413 75h1v2h-1zM414 74h1v3h-1zM415 74h1v2h-1zM416 73h1v3h-1zM417 72h1v3h-1zM418 71h1v3h-1zM419 70h1v3h-1zM420 69h1v3h-1zM421 68h1v3h-1zM422 67h1v3h-1zM423 65h1v4h-1zM424 64h1v3h-1zM425 62h1v4h-1zM426 61h1v3h-1zM427 60h1v3h-1zM428 58h1v4h-1zM429 56h1v4h-1zM430 55h1v3h-1zM431 53h1v4h-1zM432 52h1v3h-1zM433 50h1v4h-1zM434 49h1v3h-1zM435 47h1v4h-1zM436 46h1v3h-1zM437 44h1v4h-1zM438 43h1v3h-1zM439 42h1v3h-1zM440 41h1v3h-1zM441 39h1v4h-1zM442 38h1v3h-1zM443 37h1v3h-1zM444 36h1v3h-1zM445 35h1v3h-1zM446 35h1v2h-1zM447 34h1v3h-1zM448 33h1v3h-1zM449 33h1v2h-1zM450 32h1v3h-1zM451 32h1v2h-1zM452 32h1v2h-1zM453 32h1v2h-1zM454 32h1v2h-1zM455 32h1v2h-1zM456 32h1v2h-1zM457 32h1v3h-1zM458 33h1v2h-1zM459 33h1v3h-1zM460 34h1v2h-1zM461 34h1v3h-1zM462 35h1v3h-1zM463 36h1v3h-1zM464 37h1v3h-1zM465 38h1v3h-1zM466 39h1v3h-1zM467 40h1v3h-1zM468 41h1v4h-1zM469 43h1v3h-1zM470 44h1v3h-1zM471 45h1v4h-1zM472 47h1v3h-1zM473 48h1v4h-1zM474 50h1v3h-1zM475 51h1v4h-1zM476 53h1v3h-1zM477 54h1v4h-1zM478 56h1v3h-1zM479 57h1v4h-1zM480 59h1v3h-1zM481 60h1v4h-1zM482 62h1v3h-1zM483 63h1v4h-1zM484 65h1v3h-1zM485 66h1v3h-1zM486 67h1v4h-1zM487 69h1v3h-1zM488 70h1v3h-1zM489 71h1v3h-1zM490 72h1v3h-1zM491 73h1v2h-1zM492 73h1v3h-1zM493 74h1v3h-1zM494 75h1v2h-1zM495 75h1v3h-1zM496 76h1v2h-1zM497 76h1v2h-1zM498 76h1v2h-1zM499 76h1v2h-1zM500 76h1v2h-1zM501 76h1v2h-1zM502 75h1v3h-1zM503 75h1v2h-1zM504 74h1v3h-1zM505 74h1v2h-1zM506 73h1v3h-1zM507 72h1v3h-1zM508 71h1v3h-1zM509 70h1v3h-1zM510 69h1v3h-1zM511 68h1v3h-1zM512 67h1v3h-1zM513 66h1v3h-1zM514 64h1v4h-1zM515 63h1v3h-1zM516 61h1v4h-1zM517 60h1v3h-1zM518 58h1v4h-1zM519 57h1v3h-1zM520 55h1v4h-1zM521 54h1v3h-1zM522 52h1v4h-1zM523 51h1v3h-1zM524 49h1v4h-1zM525 48h1v3h-1zM526 46h1v4h-1zM527 45h1v3h-1zM528 43h1v4h-1zM529 42h1v3h-1zM530 41h1v3h-1zM531 40h1v3h-1zM532 38h1v4h-1zM533 37h1v3h-1zM534 36h1v3h-1zM535 36h1v2h-1zM536 35h1v3h-1zM537 34h1v3h-1zM538 33h1v3h-1zM539 33h1v2h-1zM540 32h1v3h-1zM541 32h1v2h-1zM542 32h1v2h-1zM543 32h1v2h-1zM544 32h1v2h-1zM545 32h1v2h-1zM546 32h1v2h-1zM547 32h1v2h-1zM548 32h1v3h-1zM549 33h1v2h-1zM550 33h1v3h-1zM551 34h1v3h-1zM552 35h1v3h-1zM553 36h1v3h-1zM554 37h1v3h-1zM555 38h1v3h-1zM556 39h1v3h-1zM557 40h1v3h-1zM558 41h1v3h-1zM559 42h1v4h-1zM560 44h1v3h-1zM561 45h1v3h-1zM562 46h1v4h-1zM563 48h1v3h-1zM564 49h1v4h-1zM565 51h1v3h-1zM566 52h1v4h-1zM567 54h1v4h-1zM568 56h1v3h-1zM569 57h1v4h-1zM570 59h1v3h-1zM571 60h1v4h-1zM572 62h1v3h-1zM573 63h1v3h-1zM574 64h1v4h-1zM575 66h1v3h-1zM576 67h1v3h-1zM577 68h1v3h-1zM578 69h1v3h-1zM579 70h1v3h-1zM580 71h1v3h-1zM581 72h1v3h-1zM582 73h1v3h-1zM583 74h1v3h-1zM584 75h1v2h-1zM585 75h1v3h-1zM586 76h1v2h-1zM587 76h1v2h-1zM588 76h1v2h-1zM589 76h1v2h-1zM590 76h1v2h-1zM591 76h1v2h-1zM592 76h1v2h-1zM593 75h1v3h-1zM594 75h1v2h-1zM595 74h1v3h-1zM596 73h1v3h-1zM597 72h1v3h-1zM598 72h1v2h-1zM599 71h1v3h-1zM600 70h1v3h-1zM601 68h1v4h-1zM602 67h1v3h-1zM603 66h1v3h-1zM604 65h1v3h-1zM605 63h1v4h-1zM606 62h1v3h-1zM607 60h1v4h-1zM608 59h1v3h-1zM609 57h1v4h-1zM610 56h1v3h-1zM611 54h1v4h-1zM612 53h1v3h-1zM613 51h1v4h-1zM614 50h1v3h-1zM615 48h1v4h-1zM616 47h1v3h-1zM617 45h1v4h-1zM618 44h1v3h-1zM619 42h1v4h-1zM620 41h1v3h-1zM621 40h1v3h-1zM622 39h1v3h-1zM623 38h1v3h-1zM624 37h1v3h-1zM625 36h1v3h-1zM626 35h1v3h-1zM627 34h1v3h-1zM628 34h1v2h-1zM629 33h1v3h-1zM630 33h1v2h-1zM631 32h1v3h-1zM632 32h1v2h-1zM633 32h1v2h-1zM634 32h1v2h-1zM635 32h1v2h-1zM636 32h1v2h-1zM637 32h1v2h-1zM638 32h1v3h-1zM639 33h1v2h-1zM640 33h1v3h-1zM641 34h1v3h-1zM642 35h1v2h-1zM643 35h1v3h-1zM644 36h1v3h-1zM645 37h1v3h-1zM646 38h1v3h-1zM647 39h1v4h-1zM648 41h1v3h-1zM649 42h1v3h-1zM650 43h1v4h-1zM651 45h1v3h-1zM652 46h1v3h-1zM653 47h1v4h-1zM654 49h1v3h-1zM655 50h1v4h-1zM656 52h1v4h-1zM657 54h1v3h-1zM658 55h1v4h-1zM659 57h1v3h-1zM660 58h1v4h-1zM661 60h1v3h-1zM662 61h1v4h-1zM663 63h1v3h-1zM664 64h1v3h-1zM665 65h1v4h-1zM666 67h1v3h-1zM667 68h1v3h-1zM668 69h1v3h-1zM669 70h1v3h-1zM670 71h1v3h-1zM671 72h1v3h-1zM672 73h1v3h-1zM673 74h1v2h-1zM674 74h1v3h-1zM675 75h1v2h-1zM676 75h1v3h-1zM677 76h1v2h-1zM678 76h1v2h-1zM679 76h1v2h-1zM680 76h1v2h-1zM681 76h1v2h-1zM682 76h1v2h-1zM683 75h1v3h-1zM684 75h1v2h-1zM685 74h1v3h-1z" fill="#dcdc38" opacity="0.6"/><path d="M1 32h1v1h-1zM2 32h1v1h-1zM3 32h1v1h-1zM4 32h1v1h-1zM5 32h1v1h-1zM6 32h1v2h-1zM7 33h1v1h-1zM8 33h1v2h-1zM9 34h1v2h-1zM10 35h1v1h-1zM11 35h1v2h-1zM12 36h1v2h-1zM13 37h1v2h-1zM14 38h1v2h-1zM15 39h1v2h-1zM16 40h1v3h-1zM17 42h1v2h-1zM18 43h1v2h-1zM19 44h1v3h-1zM20 46h1v2h-1zM21 47h1v3h-1zM22 49h1v2h-1zM23 50h1v3h-1zM24 52h1v2h-1zM25 53h1v3h-1zM26 55h1v2h-1zM27 56h1v3h-1zM28 58h1v3h-1zM29 60h1v2h-1zM30 61h1v2h-1zM31 62h1v3h-1zM32 64h1v2h-1zM33 65h1v3h-1zM34 67h1v2h-1zM35 68h1v2h-1zM36 69h1v2h-1zM37 70h1v2h-1zM38 71h1v2h-1zM39 72h1v2h-1zM40 73h1v2h-1zM41 74h1v1h-1zM42 74h1v2h-1zM43 75h1v1h-1zM44 75h1v2h-1zM45 76h1v1h-1zM46 76h1v1h-1zM47 76h1v1h-1zM48 76h1v1h-1zM49 76h1v1h-1zM50 76h1v1h-1zM51 75h1v2h-1zM52 75h1v1h-1zM53 74h1v2h-1zM54 74h1v1h-1zM55 73h1v2h-1zM56 72h1v2h-1zM57 71h1v2h-1zM58 70h1v2h-1zM59 69h1v2h-1zM60 68h1v2h-1zM61 66h1v3h-1zM62 65h1v2h-1zM63 64h1v2h-1zM64 62h1v3h-1zM65 61h1v2h-1zM66 59h1v3h-1zM67 58h1v2h-1zM68 56h1v3h-1zM69 55h1v2h-1zM70 53h1v3h-1zM71 52h1v2h-1zM72 50h1v3h-1zM73 49h1v2h-1zM74 47h1v3h-1zM75 46h1v2h-1zM76 44h1v3h-1zM77 43h1v2h-1zM78 42h1v2h-1zM79 40h1v3h-1zM80 39h1v2h-1zM81 38h1v2h-1zM82 37h1v2h-1zM83 36h1v2h-1zM84 35h1v2h-1zM85 34h1v2h-1zM86 34h1v1h-1zM87 33h1v2h-1zM88 33h1v1h-1zM89 32h1v2h-1zM90 32h1v1h-1zM91 32h1v1h-1zM92 32h1v1h-1zM93 32h1v1h-1zM94 32h1v1h-1zM95 32h1v1h-1zM96 32h1v2h-1zM97 33h1v1h-1zM98 33h1v2h-1zM99 34h1v1h-1zM100 34h1v2h-1zM101 35h1v2h-1zM102 36h1v2h-1zM103 37h1v2h-1zM104 38h1v2h-1zM105 39h1v2h-1zM106 40h1v2h-1zM107 41h1v3h-1zM108 43h1v2h-1zM109 44h1v2h-1zM110 45h1v3h-1zM111 47h1v2h-1zM112 48h1v3h-1zM113 50h1v2h-1zM114 51h1v3h-1zM115 53h1v3h-1zM116 55h1v2h-1zM117 56h1v3h-1zM118 58h1v2h-1zM119 59h1v3h-1zM120 61h1v2h-1zM121 62h1v2h-1zM122 63h1v3h-1zM123 65h1v2h-1zM124 66h1v2h-1zM125 67h1v3h-1zM126 69h1v2h-1zM127 70h1v2h-1zM128 71h1v2h-1zM129 72h1v2h-1zM130 73h1v1h-1zM131 73h1v2h-1zM132 74h1v2h-1zM133 75h1v1h-1zM134 75h1v2h-1zM135 76h1v1h-1zM136 76h1v1h-1zM137 76h1v1h-1zM138 76h1v1h-1zM139 76h1v1h-1zM140 76h1v1h-1zM141 75h1v2h-1zM142 75h1v1h-1zM143 74h1v2h-1zM144 74h1v1h-1zM145 73h1v2h-1zM146 72h1v2h-1zM147 71h1v2h-1zM148 70h1v2h-1zM149 69h1v2h-1zM150 68h1v2h-1zM151 67h1v2h-1zM152 65h1v3h-1zM153 64h1v2h-1zM154 63h1v2h-1zM155 61h1v3h-1zM156 60h1v2h-1zM157 58h1v3h-1zM158 57h1v2h-1zM159 55h1v3h-1zM160 54h1v2h-1zM161 52h1v3h-1zM162 51h1v2h-1zM163 49h1v3h-1zM164 48h1v2h-1zM165 46h1v3h-1zM166 45h1v2h-1zM167 43h1v3h-1zM168 42h1v2h-1zM169 41h1v2h-1zM170 40h1v2h-1zM171 38h1v3h-1zM172 37h1v2h-1zM173 36h1v2h-1zM174 35h1v2h-1zM175 35h1v1h-1zM176 34h1v2h-1zM177 33h1v2h-1zM178 33h1v1h-1zM179 32h1v2h-1zM180 32h1v1h-1zM181 32h1v1h-1zM182 32h1v1h-1zM183 32h1v1h-1zM184 32h1v1h-1zM185 32h1v1h-1zM186 32h1v2h-1zM187 33h1v1h-1zM188 33h1v1h-1zM189 33h1v2h-1zM190 34h1v2h-1zM191 35h1v2h-1zM192 36h1v2h-1zM193 37h1v2h-1zM194 38h1v2h-1zM195 39h1v2h-1zM196 40h1v2h-1zM197 41h1v2h-1zM198 42h1v3h-1zM199 44h1v2h-1zM200 45h1v3h-1zM201 47h1v2h-1zM202 48h1v2h-1zM203 49h1v3h-1zM204 51h1v3h-1zM205 53h1v2h-1zM206 54h1v3h-1zM207 56h1v2h-1zM208 57h1v3h-1zM209 59h1v2h-1zM210 60h1v3h-1zM211 62h1v2h-1zM212 63h1v2h-1zM213 64h1v3h-1zM214 66h1v2h-1zM215 67h1v2h-1zM216 68h1v2h-1zM217 69h1v3h-1zM218 71h1v2h-1zM219 72h1v1h-1zM220 72h1v2h-1zM221 73h1v2h-1zM222 74h1v2h-1zM223 75h1v1h-1zM224 75h1v2h-1zM225 76h1v1h-1zM226 76h1v1h-1zM227 76h1v1h-1zM228 76h1v1h-1zM229 76h1v1h-1zM230 76h1v1h-1zM231 76h1v1h-1zM232 75h1v2h-1zM233 75h1v1h-1zM234 74h1v2h-1zM235 73h1v2h-1zM236 72h1v2h-1zM237 72h1v1h-1zM238 71h1v2h-1zM239 69h1v3h-1zM240 68h1v2h-1zM241 67h1v2h-1zM242 66h1v2h-1zM243 64h1v3h-1zM244 63h1v2h-1zM245 62h1v2h-1zM246 60h1v3h-1zM247 59h1v2h-1zM248 57h1v3h-1zM249 56h1v2h-1zM250 54h1v3h-1zM251 53h1v2h-1zM252 51h1v3h-1zM253 50h1v2h-1zM254 48h1v3h-1zM255 47h1v2h-1zM256 45h1v3h-1zM257 44h1v2h-1zM258 42h1v3h-1zM259 41h1v2h-1zM260 40h1v2h-1zM261 39h1v2h-1zM262 38h1v2h-1zM263 37h1v2h-1zM264 36h1v2h-1zM265 35h1v2h-1zM266 34h1v2h-1zM267 33h1v2h-1zM268 33h1v1h-1zM269 33h1v1h-1zM270 32h1v2h-1zM271 32h1v1h-1zM272 32h1v1h-1zM273 32h1v1h-1zM274 32h1v1h-1zM275 32h1v1h-1zM276 32h1v1h-1zM277 32h1v2h-1zM278 33h1v1h-1zM279 33h1v2h-1zM280 34h1v2h-1zM281 35h1v1h-1zM282 35h1v2h-1zM283 36h1v2h-1zM284 37h1v2h-1zM285 38h1v3h-1zM286 40h1v2h-1zM287 41h1v2h-1zM288 42h1v2h-1zM289 43h1v3h-1zM290 45h1v2h-1zM291 46h1v3h-1zM292 48h1v2h-1zM293 49h1v3h-1zM294 51h1v2h-1zM295 52h1v3h-1zM296 54h1v2h-1zM297 55h1v3h-1zM298 57h1v2h-1zM299 58h1v3h-1zM300 60h1v2h-1zM301 61h1v3h-1zM302 63h1v2h-1zM303 64h1v2h-1zM304 65h1v3h-1zM305 67h1v2h-1zM306 68h1v2h-1zM307 69h1v2h-1zM308 70h1v2h-1zM309 71h1v2h-1zM310 72h1v2h-1zM311 73h1v2h-1zM312 74h1v1h-1zM313 74h1v2h-1zM314 75h1v1h-1zM315 75h1v2h-1zM316 76h1v1h-1zM317 76h1v1h-1zM318 76h1v1h-1zM319 76h1v1h-1zM320 76h1v1h-1zM321 76h1v1h-1zM322 75h1v2h-1zM323 75h1v1h-1zM324 74h1v2h-1zM325 73h1v2h-1zM326 73h1v1h-1zM327 72h1v2h-1zM328 71h1v2h-1zM329 70h1v2h-1zM330 69h1v2h-1zM331 67h1v3h-1zM332 66h1v2h-1zM333 65h1v2h-1zM334 63h1v3h-1zM335 62h1v2h-1zM336 61h1v2h-1zM337 59h1v3h-1zM338 58h1v2h-1zM339 56h1v3h-1zM340 55h1v2h-1zM341 53h1v3h-1zM342 51h1v3h-1zM343 50h1v2h-1zM344 48h1v3h-1zM345 47h1v2h-1zM346 45h1v3h-1zM347 44h1v2h-1zM348 43h1v2h-1zM349 41h1v3h-1zM350 40h1v2h-1zM351 39h1v2h-1zM352 38h1v2h-1zM353 37h1v2h-1zM354 36h1v2h-1zM355 35h1v2h-1zM356 34h1v2h-1zM357 34h1v1h-1zM358 33h1v2h-1zM359 33h1v1h-1zM360 32h1v2h-1zM361 32h1v1h-1zM362 32h1v1h-1zM363 32h1v1h-1zM364 32h1v1h-1zM365 32h1v1h-1zM366 32h1v1h-1zM367 32h1v2h-1zM368 33h1v1h-1zM369 33h1v2h-1zM370 34h1v1h-1zM371 34h1v2h-1zM372 35h1v2h-1zM373 36h1v2h-1zM374 37h1v2h-1zM375 38h1v2h-1zM376 39h1v2h-1zM377 40h1v3h-1zM378 42h1v2h-1zM379 43h1v2h-1zM380 44h1v3h-1zM381 46h1v2h-1zM382 47h1v3h-1zM383 49h1v2h-1zM384 50h1v3h-1zM385 52h1v2h-1zM386 53h1v3h-1zM387 55h1v2h-1zM388 56h1v3h-1zM389 58h1v2h-1zM390 59h1v3h-1zM391 61h1v2h-1zM392 62h1v3h-1zM393 64h1v2h-1zM394 65h1v2h-1zM395 66h1v3h-1zM396 68h1v2h-1zM397 69h1v2h-1zM398 70h1v2h-1zM399 71h1v2h-1zM400 72h1v2h-1zM401 73h1v2h-1zM402 74h1v1h-1zM403 74h1v2h-1zM404 75h1v1h-1zM405 75h1v2h-1zM406 76h1v1h-1zM407 76h1v1h-1zM408 76h1v1h-1zM409 76h1v1h-1zM410 76h1v1h-1zM411 76h1v1h-1zM412 75h1v2h-1zM413 75h1v1h-1zM414 74h1v2h-1zM415 74h1v1h-1zM416 73h1v2h-1zM417 72h1v2h-1zM418 71h1v2h-1zM419 70h1v2h-1zM420 69h1v2h-1zM421 68h1v2h-1zM422 67h1v2h-1zM423 65h1v3h-1zM424 64h1v2h-1zM425 62h1v3h-1zM426 61h1v2h-1zM427 60h1v2h-1zM428 58h1v3h-1zM429 56h1v3h-1zM430 55h1v2h-1zM431 53h1v3h-1zM432 52h1v2h-1zM433 50h1v3h-1zM434 49h1v2h-1zM435 47h1v3h-1zM436 46h1v2h-1zM437 44h1v3h-1zM438 43h1v2h-1zM439 42h1v2h-1zM440 41h1v2h-1zM441 39h1v3h-1zM442 38h1v2h-1zM443 37h1v2h-1zM444 36h1v2h-1zM445 35h1v2h-1zM446 35h1v1h-1zM447 34h1v2h-1zM448 33h1v2h-1zM449 33h1v1h-1zM450 32h1v2h-1zM451 32h1v1h-1zM452 32h1v1h-1zM453 32h1v1h-1zM454 32h1v1h-1zM455 32h1v1h-1zM456 32h1v1h-1zM457 32h1v2h-1zM458 33h1v1h-1zM459 33h1v2h-1zM460 34h1v1h-1zM461 34h1v2h-1zM462 35h1v2h-1zM463 36h1v2h-1zM464 37h1v2h-1zM465 38h1v2h-1zM466 39h1v2h-1zM467 40h1v2h-1zM468 41h1v3h-1zM469 43h1v2h-1zM470 44h1v2h-1zM471 45h1v3h-1zM472 47h1v2h-1zM473 48h1v3h-1zM474 50h1v2h-1zM475 51h1v3h-1zM476 53h1v2h-1zM477 54h1v3h-1zM478 56h1v2h-1zM479 57h1v3h-1zM480 59h1v2h-1zM481 60h1v3h-1zM482 62h1v2h-1zM483 63h1v3h-1zM484 65h1v2h-1zM485 66h1v2h-1zM486 67h1v3h-1zM487 69h1v2h-1zM488 70h1v2h-1zM489 71h1v2h-1zM490 72h1v2h-1zM491 73h1v1h-1zM492 73h1v2h-1zM493 74h1v2h-1zM494 75h1v1h-1zM495 75h1v2h-1zM496 76h1v1h-1zM497 76h1v1h-1zM498 76h1v1h-1zM499 76h1v1h-1zM500 76h1v1h-1zM501 76h1v1h-1zM502 75h1v2h-1zM503 75h1v1h-1zM504 74h1v2h-1zM505 74h1v1h-1zM506 73h1v2h-1zM507 72h1v2h-1zM508 71h1v2h-1zM509 70h1v2h-1zM510 69h1v2h-1zM511 68h1v2h-1zM512 67h1v2h-1zM513 66h1v2h-1zM514 64h1v3h-1zM515 63h1v2h-1zM516 61h1v3h-1zM517 60h1v2h-1zM518 58h1v3h-1zM519 57h1v2h-1zM520 55h1v3h-1zM521 54h1v2h-1zM522 52h1v3h-1zM523 51h1v2h-1zM524 49h1v3h-1zM525 48h1v2h-1zM526 46h1v3h-1zM527 45h1v2h-1zM528 43h1v3h-1zM529 42h1v2h-1zM530 41h1v2h-1zM531 40h1v2h-1zM532 38h1v3h-1zM533 37h1v2h-1zM534 36h1v2h-1zM535 36h1v1h-1zM536 35h1v2h-1zM537 34h1v2h-1zM538 33h1v2h-1zM539 33h1v1h-1zM540 32h1v2h-1zM541 32h1v1h-1zM542 32h1v1h-1zM543 32h1v1h-1zM544 32h1v1h-1zM545 32h1v1h-1zM546 32h1v1h-1zM547 32h1v1h-1zM548 32h1v2h-1zM549 33h1v1h-1zM550 33h1v2h-1zM551 34h1v2h-1zM552 35h1v2h-1zM553 36h1v2h-1zM554 37h1v2h-1zM555 38h1v2h-1zM556 39h1v2h-1zM557 40h1v2h-1zM558 41h1v2h-1zM559 42h1v3h-1zM560 44h1v2h-1zM561 45h1v2h-1zM562 46h1v3h-1zM563 48h1v2h-1zM564 49h1v3h-1zM565 51h1v2h-1zM566 52h1v3h-1zM567 54h1v3h-1zM568 56h1v2h-1zM569 57h1v3h-1zM570 59h1v2h-1zM571 60h1v3h-1zM572 62h1v2h-1zM573 63h1v2h-1zM574 64h1v3h-1zM575 66h1v2h-1zM576 67h1v2h-1zM577 68h1v2h-1zM578 69h1v2h-1zM579 70h1v2h-1zM580 71h1v2h-1zM581 72h1v2h-1zM582 73h1v2h-1zM583 74h1v2h-1zM584 75h1v1h-1zM585 75h1v2h-1zM586 76h1v1h-1zM587 76h1v1h-1zM588 76h1v1h-1zM589 76h1v1h-1zM590 76h1v1h-1zM591 76h1v1h-1zM592 76h1v1h-1zM593 75h1v2h-1zM594 75h1v1h-1zM595 74h1v2h-1zM596 73h1v2h-1zM597 72h1v2h-1zM598 72h1v1h-1zM599 71h1v2h-1zM600 70h1v2h-1zM601 68h1v3h-1zM602 67h1v2h-1zM603 66h1v2h-1zM604 65h1v2h-1zM605 63h1v3h-1zM606 62h1v2h-1zM607 60h1v3h-1zM608 59h1v2h-1zM609 57h1v3h-1zM610 56h1v2h-1zM611 54h1v3h-1zM612 53h1v2h-1zM613 51h1v3h-1zM614 50h1v2h-1zM615 48h1v3h-1zM616 47h1v2h-1zM617 45h1v3h-1zM618 44h1v2h-1zM619 42h1v3h-1zM620 41h1v2h-1zM621 40h1v2h-1zM622 39h1v2h-1zM623 38h1v2h-1zM624 37h1v2h-1zM625 36h1v2h-1zM626 35h1v2h-1zM627 34h1v2h-1zM628 34h1v1h-1zM629 33h1v2h-1zM630 33h1v1h-1zM631 32h1v2h-1zM632 32h1v1h-1zM633 32h1v1h-1zM634 32h1v1h-1zM635 32h1v1h-1zM636 32h1v1h-1zM637 32h1v1h-1zM638 32h1v2h-1zM639 33h1v1h-1zM640 33h1v2h-1zM641 34h1v2h-1zM642 35h1v1h-1zM643 35h1v2h-1zM644 36h1v2h-1zM645 37h1v2h-1zM646 38h1v2h-1zM647 39h1v3h-1zM648 41h1v2h-1zM649 42h1v2h-1zM650 43h1v3h-1zM651 45h1v2h-1zM652 46h1v2h-1zM653 47h1v3h-1zM654 49h1v2h-1zM655 50h1v3h-1zM656 52h1v3h-1zM657 54h1v2h-1zM658 55h1v3h-1zM659 57h1v2h-1zM660 58h1v3h-1zM661 60h1v2h-1zM662 61h1v3h-1zM663 63h1v2h-1zM664 64h1v2h-1zM665 65h1v3h-1zM666 67h1v2h-1zM667 68h1v2h-1zM668 69h1v2h-1zM669 70h1v2h-1zM670 71h1v2h-1zM671 72h1v2h-1zM672 73h1v2h-1zM673 74h1v1h-1zM674 74h1v2h-1zM675 75h1v1h-1zM676 75h1v2h-1zM677 76h1v1h-1zM678 76h1v1h-1zM679 76h1v1h-1zM680 76h1v1h-1zM681 76h1v1h-1zM682 76h1v1h-1zM683 75h1v2h-1zM684 75h1v1h-1zM685 74h1v2h-1z" fill="#f4f466"/><path d="M1 144h1v2h-1zM2 144h1v2h-1zM3 144h1v2h-1zM4 144h1v3h-1zM5 145h1v2h-1zM6 145h1v2h-1zM7 145h1v3h-1zM8 146h1v2h-1zM9 146h1v3h-1zM10 147h1v3h-1zM11 148h1v3h-1zM12 149h1v3h-1zM13 150h1v3h-1zM14 151h1v3h-1zM15 152h1v3h-1zM16 153h1v3h-1zM17 154h1v4h-1zM18 156h1v3h-1zM19 157h1v3h-1zM20 158h1v4h-1zM21 160h1v3h-1zM22 161h1v4h-1zM23 163h1v3h-1zM24 164h1v4h-1zM25 166h1v3h-1zM26 167h1v4h-1zM27 169h1v3h-1zM28 170h1v4h-1zM29 172h1v3h-1zM30 173h1v4h-1zM31 175h1v3h-1zM32 176h1v4h-1zM33 178h1v3h-1zM34 179h1v3h-1zM35 180h1v3h-1zM36 181h1v3h-1zM37 182h1v3h-1zM38 183h1v3h-1zM39 184h1v3h-1zM40 185h1v3h-1zM41 186h1v3h-1zM42 187h1v2h-1zM43 187h1v3h-1zM44 188h1v2h-1zM45 188h1v2h-1zM46 188h1v2h-1zM47 188h1v2h-1zM48 188h1v2h-1zM49 188h1v2h-1zM50 188h1v2h-1zM51 188h1v2h-1zM52 187h1v3h-1zM53 186h1v3h-1zM54 186h1v2h-1zM55 185h1v3h-1zM56 184h1v3h-1zM57 183h1v3h-1zM58 182h1v3h-1zM59 181h1v3h-1zM60 180h1v3h-1zM61 179h1v3h-1zM62 177h1v4h-1zM63 176h1v3h-1zM64 175h1v3h-1zM65 173h1v4h-1zM66 172h1v3h-1zM67 170h1v4h-1zM68 169h1v3h-1zM69 167h1v4h-1zM70 166h1v3h-1zM71 164h1v4h-1zM72 163h1v3h-1zM73 161h1v4h-1zM74 160h1v3h-1zM75 158h1v4h-1zM76 157h1v3h-1zM77 155h1v4h-1zM78 154h1v3h-1zM79 153h1v3h-1zM80 152h1v3h-1zM81 151h1v3h-1zM82 150h1v3h-1zM83 149h1v3h-1zM84 148h1v3h-1zM85 147h1v3h-1zM86 146h1v3h-1zM87 146h1v2h-1zM88 145h1v3h-1zM89 145h1v2h-1zM90 145h1v2h-1zM91 144h1v3h-1zM92 144h1v2h-1zM93 144h1v2h-1zM94 144h1v3h-1zM95 145h1v2h-1zM96 145h1v2h-1zM97 145h1v3h-1zM98 146h1v2h-1zM99 146h1v3h-1zM100 147h1v3h-1zM101 148h1v2h-1zM102 148h1v3h-1zM103 149h1v3h-1zM104 150h1v4h-1zM105 152h1v3h-1zM106 153h1v3h-1zM107 154h1v3h-1zM108 155h1v4h-1zM109 157h1v3h-1zM110 158h1v3h-1zM111 159h1v4h-1zM112 161h1v3h-1zM113 162h1v4h-1zM114 164h1v3h-1zM115 165h1v4h-1zM116 167h1v3h-1zM117 168h1v4h-1zM118 170h1v3h-1zM119 171h1v4h-1zM120 173h1v3h-1zM121 174h1v4h-1zM122 176h1v3h-1zM123 177h1v3h-1zM124 178h1v4h-1zM125 180h1v3h-1zM126 181h1v3h-1zM127 182h1v3h-1zM128 183h1v3h-1zM129 184h1v3h-1zM130 185h1v3h-1zM131 186h1v2h-1zM132 186h1v3h-1zM133 187h1v2h-1zM134 187h1v3h-1zM135 188h1v2h-1zM136 188h1v2h-1zM137 188h1v2h-1zM138 188h1v2h-1zM139 188h1v2h-1zM140 188h1v2h-1zM141 188h1v2h-1zM142 187h1v3h-1zM143 187h1v2h-1zM144 186h1v3h-1zM145 185h1v3h-1zM146 184h1v3h-1zM147 184h1v2h-1zM148 183h1v3h-1zM149 181h1v4h-1zM150 180h1v3h-1zM151 179h1v3h-1zM152 178h1v3h-1zM153 176h1v4h-1zM154 175h1v3h-1zM155 174h1v3h-1zM156 172h1v4h-1zM157 171h1v3h-1zM158 169h1v4h-1zM159 168h1v3h-1zM160 166h1v4h-1zM161 165h1v3h-1zM162 163h1v4h-1zM163 162h1v3h-1zM164 160h1v4h-1zM165 159h1v3h-1zM166 157h1v4h-1zM167 156h1v3h-1zM168 155h1v3h-1zM169 153h1v4h-1zM170 152h1v3h-1zM171 151h1v3h-1zM172 150h1v3h-1zM173 149h1v3h-1zM174 148h1v3h-1zM175 147h1v3h-1zM176 147h1v2h-1zM177 146h1v3h-1zM178 145h1v3h-1zM179 145h1v2h-1zM180 145h1v2h-1zM181 144h1v3h-1zM182 144h1v2h-1zM183 144h1v2h-1zM184 144h1v3h-1zM185 145h1v2h-1zM186 145h1v2h-1zM187 145h1v3h-1zM188 146h1v2h-1zM189 146h1v3h-1zM190 147h1v2h-1zM191 147h1v3h-1zM192 148h1v3h-1zM193 149h1v3h-1zM194 150h1v3h-1zM195 151h1v3h-1zM196 152h1v4h-1zM197 154h1v3h-1zM198 155h1v3h-1zM199 156h1v4h-1zM200 158h1v3h-1zM201 159h1v3h-1zM202 160h1v4h-1zM203 162h1v3h-1zM204 163h1v4h-1zM205 165h1v3h-1zM206 166h1v4h-1zM207 168h1v4h-1zM208 170h1v3h-1zM209 171h1v4h-1zM210 173h1v3h-1zM211 174h1v3h-1zM212 175h1v4h-1zM213 177h1v3h-1zM214 178h1v3h-1zM215 179h1v4h-1zM216 181h1v3h-1zM217 182h1v3h-1zM218 183h1v3h-1zM219 184h1v3h-1zM220 185h1v2h-1zM221 185h1v3h-1zM222 186h1v3h-1zM223 187h1v2h-1zM224 187h1v3h-1zM225 188h1v2h-1zM226 188h1v2h-1zM227 188h1v2h-1zM228 188h1v2h-1zM229 188h1v2h-1zM230 188h1v2h-1zM231 188h1v2h-1zM232 187h1v3h-1zM233 187h1v2h-1zM234 186h1v3h-1zM235 185h1v3h-1zM236 185h1v2h-1zM237 184h1v3h-1zM238 183h1v3h-1zM239 182h1v3h-1zM240 181h1v3h-1zM241 179h1v4h-1zM242 178h1v3h-1zM243 177h1v3h-1zM244 175h1v4h-1zM245 174h1v3h-1zM246 173h1v3h-1zM247 171h1v4h-1zM248 170h1v3h-1zM249 168h1v4h-1zM250 167h1v3h-1zM251 165h1v4h-1zM252 163h1v4h-1zM253 162h1v3h-1zM254 160h1v4h-1zM255 159h1v3h-1zM256 158h1v3h-1zM257 156h1v4h-1zM258 155h1v3h-1zM259 154h1v3h-1zM260 152h1v4h-1zM261 151h1v3h-1zM262 150h1v3h-1zM263 149h1v3h-1zM264 148h1v3h-1zM265 147h1v3h-1zM266 147h1v2h-1zM267 146h1v3h-1zM268 146h1v2h-1zM269 145h1v3h-1zM270 145h1v2h-1zM271 145h1v2h-1zM272 144h1v3h-1zM273 144h1v2h-1zM274 144h1v2h-1zM275 144h1v3h-1zM276 145h1v2h-1zM277 145h1v2h-1zM278 145h1v3h-1zM279 146h1v3h-1zM280 147h1v2h-1zM281 147h1v3h-1zM282 148h1v3h-1zM283 149h1v3h-1zM284 150h1v3h-1zM285 151h1v3h-1zM286 152h1v3h-1zM287 153h1v4h-1zM288 155h1v3h-1zM289 156h1v3h-1zM290 157h1v4h-1zM291 159h1v3h-1zM292 160h1v4h-1zM293 162h1v3h-1zM294 163h1v4h-1zM295 165h1v3h-1zM296 166h1v4h-1zM297 168h1v3h-1zM298 169h1v4h-1zM299 171h1v3h-1zM300 172h1v4h-1zM301 174h1v3h-1zM302 175h1v3h-1zM303 176h1v4h-1zM304 178h1v3h-1zM305 179h1v3h-1zM306 180h1v3h-1zM307 181h1v3h-1zM308 182h1v4h-1zM309 184h1v2h-1zM310 184h1v3h-1zM311 185h1v3h-1zM312 186h1v3h-1zM313 187h1v2h-1zM314 187h1v3h-1zM315 188h1v2h-1zM316 188h1v2h-1zM317 188h1v2h-1zM318 188h1v2h-1zM319 188h1v2h-1zM320 188h1v2h-1zM321 188h1v2h-1zM322 187h1v3h-1zM323 187h1v2h-1zM324 186h1v3h-1zM325 186h1v2h-1zM326 185h1v3h-1zM327 184h1v3h-1zM328 183h1v3h-1zM329 182h1v3h-1zM330 181h1v3h-1zM331 180h1v3h-1zM332 178h1v4h-1zM333 177h1v3h-1zM334 176h1v3h-1zM335 174h1v4h-1zM336 173h1v3h-1zM337 171h1v4h-1zM338 170h1v3h-1zM339 168h1v4h-1zM340 167h1v3h-1zM341 165h1v4h-1zM342 164h1v3h-1zM343 162h1v4h-1zM344 161h1v3h-1zM345 159h1v4h-1zM346 158h1v3h-1zM347 157h1v3h-1zM348 155h1v4h-1zM349 154h1v3h-1zM350 153h1v3h-1zM351 152h1v3h-1zM352 150h1v4h-1zM353 149h1v3h-1zM354 148h1v3h-1zM355 148h1v2h-1zM356 147h1v3h-1zM357 146h1v3h-1zM358 146h1v2h-1zM359 145h1v3h-1zM360 145h1v2h-1zM361 145h1v2h-1zM362 144h1v3h-1zM363 144h1v2h-1zM364 144h1v2h-1zM365 144h1v3h-1zM366 145h1v2h-1zM367 145h1v2h-1zM368 145h1v3h-1zM369 146h1v2h-1zM370 146h1v3h-1zM371 147h1v3h-1zM372 148h1v3h-1zM373 149h1v3h-1zM374 150h1v3h-1zM375 151h1v3h-1zM376 152h1v3h-1zM377 153h1v3h-1zM378 154h1v3h-1zM379 155h1v4h-1zM380 157h1v3h-1zM381 158h1v4h-1zM382 160h1v3h-1zM383 161h1v4h-1zM384 163h1v3h-1zM385 164h1v4h-1zM386 166h1v3h-1zM387 167h1v4h-1zM388 169h1v3h-1zM389 170h1v4h-1zM390 172h1v3h-1zM391 173h1v4h-1zM392 175h1v3h-1zM393 176h1v3h-1zM394 177h1v4h-1zM395 179h1v3h-1zM396 180h1v3h-1zM397 181h1v3h-1zM398 182h1v3h-1zM399 183h1v3h-1zM400 184h1v3h-1zM401 185h1v3h-1zM402 186h1v2h-1zM403 186h1v3h-1zM404 187h1v3h-1zM405 188h1v2h-1zM406 188h1v2h-1zM407 188h1v2h-1zM408 188h1v2h-1zM409 188h1v2h-1zM410 188h1v2h-1zM411 188h1v2h-1zM412 188h1v2h-1zM413 187h1v3h-1zM414 187h1v2h-1zM415 186h1v3h-1zM416 185h1v3h-1zM417 184h1v3h-1zM418 183h1v3h-1zM419 182h1v3h-1zM420 181h1v3h-1zM421 180h1v3h-1zM422 179h1v3h-1zM423 178h1v3h-1zM424 176h1v4h-1zM425 175h1v3h-1zM426 173h1v4h-1zM427 172h1v3h-1zM428 170h1v4h-1zM429 169h1v3h-1zM430 167h1v4h-1zM431 166h1v3h-1zM432 164h1v4h-1zM433 163h1v3h-1zM434 161h1v4h-1zM435 160h1v3h-1zM436 158h1v4h-1zM437 157h1v3h-1zM438 156h1v3h-1zM439 154h1v4h-1zM440 153h1v3h-1zM441 152h1v3h-1zM442 151h1v3h-1zM443 150h1v3h-1zM444 149h1v3h-1zM445 148h1v3h-1zM446 147h1v3h-1zM447 146h1v3h-1zM448 146h1v2h-1zM449 145h1v3h-1zM450 145h1v2h-1zM451 145h1v2h-1zM452 144h1v3h-1zM453 144h1v2h-1zM454 144h1v2h-1zM455 144h1v3h-1zM456 145h1v2h-1zM457 145h1v2h-1zM458 145h1v3h-1zM459 146h1v2h-1zM460 146h1v3h-1zM461 147h1v3h-1zM462 148h1v2h-1zM463 148h1v3h-1zM464 149h1v3h-1zM465 150h1v3h-1zM466 151h1v4h-1zM467 153h1v3h-1zM468 154h1v3h-1zM469 155h1v3h-1zM470 156h1v4h-1zM471 158h1v3h-1zM472 159h1v4h-1zM473 161h1v3h-1zM474 162h1v4h-1zM475 164h1v3h-1zM476 165h1v4h-1zM477 167h1v3h-1zM478 168h1v4h-1zM479 170h1v3h-1zM480 171h1v4h-1zM481 173h1v3h-1zM482 174h1v4h-1zM483 176h1v3h-1zM484 177h1v3h-1zM485 178h1v4h-1zM486 180h1v3h-1zM487 181h1v3h-1zM488 182h1v3h-1zM489 183h1v3h-1zM490 184h1v3h-1zM491 185h1v3h-1zM492 186h1v2h-1zM493 186h1v3h-1zM494 187h1v2h-1zM495 187h1v3h-1zM496 188h1v2h-1zM497 188h1v2h-1zM498 188h1v2h-1zM499 188h1v2h-1zM500 188h1v2h-1zM501 188h1v2h-1zM502 188h1v2h-1zM503 187h1v3h-1zM504 187h1v2h-1zM505 186h1v3h-1zM506 185h1v3h-1zM507 185h1v2h-1zM508 184h1v3h-1zM509 183h1v3h-1zM510 182h1v3h-1zM511 180h1v4h-1zM512 179h1v3h-1zM513 178h1v3h-1zM514 177h1v3h-1zM515 175h1v4h-1zM516 174h1v3h-1zM517 172h1v4h-1zM518 171h1v3h-1zM519 169h1v4h-1zM520 168h1v3h-1zM521 166h1v4h-1zM522 165h1v3h-1zM523 163h1v4h-1zM524 162h1v3h-1zM525 160h1v4h-1zM526 159h1v3h-1zM527 157h1v4h-1zM528 156h1v3h-1zM529 155h1v3h-1zM530 153h1v4h-1zM531 152h1v3h-1zM532 151h1v3h-1zM533 150h1v3h-1zM534 149h1v3h-1zM535 148h1v3h-1zM536 147h1v3h-1zM537 147h1v2h-1zM538 146h1v3h-1zM539 145h1v3h-1zM540 145h1v2h-1zM541 145h1v2h-1zM542 145h1v2h-1zM543 144h1v3h-1zM544 144h1v2h-1zM545 144h1v3h-1zM546 145h1v2h-1zM547 145h1v2h-1zM548 145h1v2h-1zM549 145h1v3h-1zM550 146h1v3h-1zM551 147h1v2h-1zM552 147h1v3h-1zM553 148h1v3h-1zM554 149h1v3h-1zM555 150h1v3h-1zM556 151h1v3h-1zM557 152h1v3h-1zM558 153h1v4h-1zM559 155h1v3h-1zM560 156h1v3h-1zM561 157h1v4h-1zM562 159h1v3h-1zM563 160h1v4h-1zM564 162h1v3h-1zM565 163h1v4h-1zM566 165h1v3h-1zM567 166h1v4h-1zM568 168h1v3h-1zM569 169h1v4h-1zM570 171h1v3h-1zM571 172h1v4h-1zM572 174h1v3h-1zM573 175h1v4h-1zM574 177h1v3h-1zM575 178h1v3h-1zM576 179h1v3h-1zM577 180h1v4h-1zM578 182h1v3h-1zM579 183h1v3h-1zM580 184h1v3h-1zM581 185h1v2h-1zM582 185h1v3h-1zM583 186h1v3h-1zM584 187h1v2h-1zM585 187h1v3h-1zM586 188h1v2h-1zM587 188h1v2h-1zM588 188h1v2h-1zM589 188h1v2h-1zM590 188h1v2h-1zM591 188h1v2h-1zM592 188h1v2h-1zM593 187h1v3h-1zM594 187h1v2h-1zM595 186h1v3h-1zM596 186h1v2h-1zM597 185h1v3h-1zM598 184h1v3h-1zM599 183h1v3h-1zM600 182h1v3h-1zM601 181h1v3h-1zM602 179h1v4h-1zM603 178h1v3h-1zM604 177h1v3h-1zM605 176h1v3h-1zM606 174h1v4h-1zM607 173h1v3h-1zM608 171h1v4h-1zM609 170h1v3h-1zM610 168h1v4h-1zM611 167h1v3h-1zM612 165h1v4h-1zM613 164h1v3h-1zM614 162h1v4h-1zM615 161h1v3h-1zM616 159h1v4h-1zM617 158h1v3h-1zM618 156h1v4h-1zM619 155h1v3h-1zM620 154h1v3h-1zM621 152h1v4h-1zM622 151h1v3h-1zM623 150h1v3h-1zM624 149h1v3h-1zM625 148h1v3h-1zM626 148h1v2h-1zM627 147h1v3h-1zM628 146h1v3h-1zM629 146h1v2h-1zM630 145h1v3h-1zM631 145h1v2h-1zM632 145h1v2h-1zM633 144h1v3h-1zM634 144h1v2h-1zM635 144h1v2h-1zM636 144h1v3h-1zM637 145h1v2h-1zM638 145h1v2h-1zM639 145h1v3h-1zM640 146h1v2h-1zM641 146h1v3h-1zM642 147h1v3h-1zM643 148h1v3h-1zM644 149h1v3h-1zM645 150h1v3h-1zM646 151h1v3h-1zM647 152h1v3h-1zM648 153h1v3h-1zM649 154h1v4h-1zM650 156h1v3h-1zM651 157h1v3h-1zM652 158h1v4h-1zM653 160h1v3h-1zM654 161h1v4h-1zM655 163h1v3h-1zM656 164h1v4h-1zM657 166h1v3h-1zM658 167h1v4h-1zM659 169h1v4h-1zM660 171h1v3h-1zM661 172h1v3h-1zM662 173h1v4h-1zM663 175h1v3h-1zM664 176h1v4h-1zM665 178h1v3h-1zM666 179h1v3h-1zM667 180h1v3h-1zM668 181h1v3h-1zM669 182h1v3h-1zM670 183h1v3h-1zM671 184h1v3h-1zM672 185h1v3h-1zM673 186h1v3h-1zM674 187h1v2h-1zM675 187h1v3h-1zM676 188h1v2h-1zM677 188h1v2h-1zM678 188h1v2h-1zM679 188h1v2h-1zM680 188h1v2h-1zM681 188h1v2h-1zM682 188h1v2h-1zM683 187h1v3h-1zM684 187h1v2h-1zM685 186h1v3h-1z" fill="#9c9cdc" opacity="0.55"/><path d="M1 144h1v1h-1zM2 144h1v1h-1zM3 144h1v1h-1zM4 144h1v2h-1zM5 145h1v1h-1zM6 145h1v1h-1zM7 145h1v2h-1zM8 146h1v1h-1zM9 146h1v2h-1zM10 147h1v2h-1zM11 148h1v2h-1zM12 149h1v2h-1zM13 150h1v2h-1zM14 151h1v2h-1zM15 152h1v2h-1zM16 153h1v2h-1zM17 154h1v3h-1zM18 156h1v2h-1zM19 157h1v2h-1zM20 158h1v3h-1zM21 160h1v2h-1zM22 161h1v3h-1zM23 163h1v2h-1zM24 164h1v3h-1zM25 166h1v2h-1zM26 167h1v3h-1zM27 169h1v2h-1zM28 170h1v3h-1zM29 172h1v2h-1zM30 173h1v3h-1zM31 175h1v2h-1zM32 176h1v3h-1zM33 178h1v2h-1zM34 179h1v2h-1zM35 180h1v2h-1zM36 181h1v2h-1zM37 182h1v2h-1zM38 183h1v2h-1zM39 184h1v2h-1zM40 185h1v2h-1zM41 186h1v2h-1zM42 187h1v1h-1zM43 187h1v2h-1zM44 188h1v1h-1zM45 188h1v1h-1zM46 188h1v1h-1zM47 188h1v1h-1zM48 188h1v1h-1zM49 188h1v1h-1zM50 188h1v1h-1zM51 188h1v1h-1zM52 187h1v2h-1zM53 186h1v2h-1zM54 186h1v1h-1zM55 185h1v2h-1zM56 184h1v2h-1zM57 183h1v2h-1zM58 182h1v2h-1zM59 181h1v2h-1zM60 180h1v2h-1zM61 179h1v2h-1zM62 177h1v3h-1zM63 176h1v2h-1zM64 175h1v2h-1zM65 173h1v3h-1zM66 172h1v2h-1zM67 170h1v3h-1zM68 169h1v2h-1zM69 167h1v3h-1zM70 166h1v2h-1zM71 164h1v3h-1zM72 163h1v2h-1zM73 161h1v3h-1zM74 160h1v2h-1zM75 158h1v3h-1zM76 157h1v2h-1zM77 155h1v3h-1zM78 154h1v2h-1zM79 153h1v2h-1zM80 152h1v2h-1zM81 151h1v2h-1zM82 150h1v2h-1zM83 149h1v2h-1zM84 148h1v2h-1zM85 147h1v2h-1zM86 146h1v2h-1zM87 146h1v1h-1zM88 145h1v2h-1zM89 145h1v1h-1zM90 145h1v1h-1zM91 144h1v2h-1zM92 144h1v1h-1zM93 144h1v1h-1zM94 144h1v2h-1zM95 145h1v1h-1zM96 145h1v1h-1zM97 145h1v2h-1zM98 146h1v1h-1zM99 146h1v2h-1zM100 147h1v2h-1zM101 148h1v1h-1zM102 148h1v2h-1zM103 149h1v2h-1zM104 150h1v3h-1zM105 152h1v2h-1zM106 153h1v2h-1zM107 154h1v2h-1zM108 155h1v3h-1zM109 157h1v2h-1zM110 158h1v2h-1zM111 159h1v3h-1zM112 161h1v2h-1zM113 162h1v3h-1zM114 164h1v2h-1zM115 165h1v3h-1zM116 167h1v2h-1zM117 168h1v3h-1zM118 170h1v2h-1zM119 171h1v3h-1zM120 173h1v2h-1zM121 174h1v3h-1zM122 176h1v2h-1zM123 177h1v2h-1zM124 178h1v3h-1zM125 180h1v2h-1zM126 181h1v2h-1zM127 182h1v2h-1zM128 183h1v2h-1zM129 184h1v2h-1zM130 185h1v2h-1zM131 186h1v1h-1zM132 186h1v2h-1zM133 187h1v1h-1zM134 187h1v2h-1zM135 188h1v1h-1zM136 188h1v1h-1zM137 188h1v1h-1zM138 188h1v1h-1zM139 188h1v1h-1zM140 188h1v1h-1zM141 188h1v1h-1zM142 187h1v2h-1zM143 187h1v1h-1zM144 186h1v2h-1zM145 185h1v2h-1zM146 184h1v2h-1zM147 184h1v1h-1zM148 183h1v2h-1zM149 181h1v3h-1zM150 180h1v2h-1zM151 179h1v2h-1zM152 178h1v2h-1zM153 176h1v3h-1zM154 175h1v2h-1zM155 174h1v2h-1zM156 172h1v3h-1zM157 171h1v2h-1zM158 169h1v3h-1zM159 168h1v2h-1zM160 166h1v3h-1zM161 165h1v2h-1zM162 163h1v3h-1zM163 162h1v2h-1zM164 160h1v3h-1zM165 159h1v2h-1zM166 157h1v3h-1zM167 156h1v2h-1zM168 155h1v2h-1zM169 153h1v3h-1zM170 152h1v2h-1zM171 151h1v2h-1zM172 150h1v2h-1zM173 149h1v2h-1zM174 148h1v2h-1zM175 147h1v2h-1zM176 147h1v1h-1zM177 146h1v2h-1zM178 145h1v2h-1zM179 145h1v1h-1zM180 145h1v1h-1zM181 144h1v2h-1zM182 144h1v1h-1zM183 144h1v1h-1zM184 144h1v2h-1zM185 145h1v1h-1zM186 145h1v1h-1zM187 145h1v2h-1zM188 146h1v1h-1zM189 146h1v2h-1zM190 147h1v1h-1zM191 147h1v2h-1zM192 148h1v2h-1zM193 149h1v2h-1zM194 150h1v2h-1zM195 151h1v2h-1zM196 152h1v3h-1zM197 154h1v2h-1zM198 155h1v2h-1zM199 156h1v3h-1zM200 158h1v2h-1zM201 159h1v2h-1zM202 160h1v3h-1zM203 162h1v2h-1zM204 163h1v3h-1zM205 165h1v2h-1zM206 166h1v3h-1zM207 168h1v3h-1zM208 170h1v2h-1zM209 171h1v3h-1zM210 173h1v2h-1zM211 174h1v2h-1zM212 175h1v3h-1zM213 177h1v2h-1zM214 178h1v2h-1zM215 179h1v3h-1zM216 181h1v2h-1zM217 182h1v2h-1zM218 183h1v2h-1zM219 184h1v2h-1zM220 185h1v1h-1zM221 185h1v2h-1zM222 186h1v2h-1zM223 187h1v1h-1zM224 187h1v2h-1zM225 188h1v1h-1zM226 188h1v1h-1zM227 188h1v1h-1zM228 188h1v1h-1zM229 188h1v1h-1zM230 188h1v1h-1zM231 188h1v1h-1zM232 187h1v2h-1zM233 187h1v1h-1zM234 186h1v2h-1zM235 185h1v2h-1zM236 185h1v1h-1zM237 184h1v2h-1zM238 183h1v2h-1zM239 182h1v2h-1zM240 181h1v2h-1zM241 179h1v3h-1zM242 178h1v2h-1zM243 177h1v2h-1zM244 175h1v3h-1zM245 174h1v2h-1zM246 173h1v2h-1zM247 171h1v3h-1zM248 170h1v2h-1zM249 168h1v3h-1zM250 167h1v2h-1zM251 165h1v3h-1zM252 163h1v3h-1zM253 162h1v2h-1zM254 160h1v3h-1zM255 159h1v2h-1zM256 158h1v2h-1zM257 156h1v3h-1zM258 155h1v2h-1zM259 154h1v2h-1zM260 152h1v3h-1zM261 151h1v2h-1zM262 150h1v2h-1zM263 149h1v2h-1zM264 148h1v2h-1zM265 147h1v2h-1zM266 147h1v1h-1zM267 146h1v2h-1zM268 146h1v1h-1zM269 145h1v2h-1zM270 145h1v1h-1zM271 145h1v1h-1zM272 144h1v2h-1zM273 144h1v1h-1zM274 144h1v1h-1zM275 144h1v2h-1zM276 145h1v1h-1zM277 145h1v1h-1zM278 145h1v2h-1zM279 146h1v2h-1zM280 147h1v1h-1zM281 147h1v2h-1zM282 148h1v2h-1zM283 149h1v2h-1zM284 150h1v2h-1zM285 151h1v2h-1zM286 152h1v2h-1zM287 153h1v3h-1zM288 155h1v2h-1zM289 156h1v2h-1zM290 157h1v3h-1zM291 159h1v2h-1zM292 160h1v3h-1zM293 162h1v2h-1zM294 163h1v3h-1zM295 165h1v2h-1zM296 166h1v3h-1zM297 168h1v2h-1zM298 169h1v3h-1zM299 171h1v2h-1zM300 172h1v3h-1zM301 174h1v2h-1zM302 175h1v2h-1zM303 176h1v3h-1zM304 178h1v2h-1zM305 179h1v2h-1zM306 180h1v2h-1zM307 181h1v2h-1zM308 182h1v3h-1zM309 184h1v1h-1zM310 184h1v2h-1zM311 185h1v2h-1zM312 186h1v2h-1zM313 187h1v1h-1zM314 187h1v2h-1zM315 188h1v1h-1zM316 188h1v1h-1zM317 188h1v1h-1zM318 188h1v1h-1zM319 188h1v1h-1zM320 188h1v1h-1zM321 188h1v1h-1zM322 187h1v2h-1zM323 187h1v1h-1zM324 186h1v2h-1zM325 186h1v1h-1zM326 185h1v2h-1zM327 184h1v2h-1zM328 183h1v2h-1zM329 182h1v2h-1zM330 181h1v2h-1zM331 180h1v2h-1zM332 178h1v3h-1zM333 177h1v2h-1zM334 176h1v2h-1zM335 174h1v3h-1zM336 173h1v2h-1zM337 171h1v3h-1zM338 170h1v2h-1zM339 168h1v3h-1zM340 167h1v2h-1zM341 165h1v3h-1zM342 164h1v2h-1zM343 162h1v3h-1zM344 161h1v2h-1zM345 159h1v3h-1zM346 158h1v2h-1zM347 157h1v2h-1zM348 155h1v3h-1zM349 154h1v2h-1zM350 153h1v2h-1zM351 152h1v2h-1zM352 150h1v3h-1zM353 149h1v2h-1zM354 148h1v2h-1zM355 148h1v1h-1zM356 147h1v2h-1zM357 146h1v2h-1zM358 146h1v1h-1zM359 145h1v2h-1zM360 145h1v1h-1zM361 145h1v1h-1zM362 144h1v2h-1zM363 144h1v1h-1zM364 144h1v1h-1zM365 144h1v2h-1zM366 145h1v1h-1zM367 145h1v1h-1zM368 145h1v2h-1zM369 146h1v1h-1zM370 146h1v2h-1zM371 147h1v2h-1zM372 148h1v2h-1zM373 149h1v2h-1zM374 150h1v2h-1zM375 151h1v2h-1zM376 152h1v2h-1zM377 153h1v2h-1zM378 154h1v2h-1zM379 155h1v3h-1zM380 157h1v2h-1zM381 158h1v3h-1zM382 160h1v2h-1zM383 161h1v3h-1zM384 163h1v2h-1zM385 164h1v3h-1zM386 166h1v2h-1zM387 167h1v3h-1zM388 169h1v2h-1zM389 170h1v3h-1zM390 172h1v2h-1zM391 173h1v3h-1zM392 175h1v2h-1zM393 176h1v2h-1zM394 177h1v3h-1zM395 179h1v2h-1zM396 180h1v2h-1zM397 181h1v2h-1zM398 182h1v2h-1zM399 183h1v2h-1zM400 184h1v2h-1zM401 185h1v2h-1zM402 186h1v1h-1zM403 186h1v2h-1zM404 187h1v2h-1zM405 188h1v1h-1zM406 188h1v1h-1zM407 188h1v1h-1zM408 188h1v1h-1zM409 188h1v1h-1zM410 188h1v1h-1zM411 188h1v1h-1zM412 188h1v1h-1zM413 187h1v2h-1zM414 187h1v1h-1zM415 186h1v2h-1zM416 185h1v2h-1zM417 184h1v2h-1zM418 183h1v2h-1zM419 182h1v2h-1zM420 181h1v2h-1zM421 180h1v2h-1zM422 179h1v2h-1zM423 178h1v2h-1zM424 176h1v3h-1zM425 175h1v2h-1zM426 173h1v3h-1zM427 172h1v2h-1zM428 170h1v3h-1zM429 169h1v2h-1zM430 167h1v3h-1zM431 166h1v2h-1zM432 164h1v3h-1zM433 163h1v2h-1zM434 161h1v3h-1zM435 160h1v2h-1zM436 158h1v3h-1zM437 157h1v2h-1zM438 156h1v2h-1zM439 154h1v3h-1zM440 153h1v2h-1zM441 152h1v2h-1zM442 151h1v2h-1zM443 150h1v2h-1zM444 149h1v2h-1zM445 148h1v2h-1zM446 147h1v2h-1zM447 146h1v2h-1zM448 146h1v1h-1zM449 145h1v2h-1zM450 145h1v1h-1zM451 145h1v1h-1zM452 144h1v2h-1zM453 144h1v1h-1zM454 144h1v1h-1zM455 144h1v2h-1zM456 145h1v1h-1zM457 145h1v1h-1zM458 145h1v2h-1zM459 146h1v1h-1zM460 146h1v2h-1zM461 147h1v2h-1zM462 148h1v1h-1zM463 148h1v2h-1zM464 149h1v2h-1zM465 150h1v2h-1zM466 151h1v3h-1zM467 153h1v2h-1zM468 154h1v2h-1zM469 155h1v2h-1zM470 156h1v3h-1zM471 158h1v2h-1zM472 159h1v3h-1zM473 161h1v2h-1zM474 162h1v3h-1zM475 164h1v2h-1zM476 165h1v3h-1zM477 167h1v2h-1zM478 168h1v3h-1zM479 170h1v2h-1zM480 171h1v3h-1zM481 173h1v2h-1zM482 174h1v3h-1zM483 176h1v2h-1zM484 177h1v2h-1zM485 178h1v3h-1zM486 180h1v2h-1zM487 181h1v2h-1zM488 182h1v2h-1zM489 183h1v2h-1zM490 184h1v2h-1zM491 185h1v2h-1zM492 186h1v1h-1zM493 186h1v2h-1zM494 187h1v1h-1zM495 187h1v2h-1zM496 188h1v1h-1zM497 188h1v1h-1zM498 188h1v1h-1zM499 188h1v1h-1zM500 188h1v1h-1zM501 188h1v1h-1zM502 188h1v1h-1zM503 187h1v2h-1zM504 187h1v1h-1zM505 186h1v2h-1zM506 185h1v2h-1zM507 185h1v1h-1zM508 184h1v2h-1zM509 183h1v2h-1zM510 182h1v2h-1zM511 180h1v3h-1zM512 179h1v2h-1zM513 178h1v2h-1zM514 177h1v2h-1zM515 175h1v3h-1zM516 174h1v2h-1zM517 172h1v3h-1zM518 171h1v2h-1zM519 169h1v3h-1zM520 168h1v2h-1zM521 166h1v3h-1zM522 165h1v2h-1zM523 163h1v3h-1zM524 162h1v2h-1zM525 160h1v3h-1zM526 159h1v2h-1zM527 157h1v3h-1zM528 156h1v2h-1zM529 155h1v2h-1zM530 153h1v3h-1zM531 152h1v2h-1zM532 151h1v2h-1zM533 150h1v2h-1zM534 149h1v2h-1zM535 148h1v2h-1zM536 147h1v2h-1zM537 147h1v1h-1zM538 146h1v2h-1zM539 145h1v2h-1zM540 145h1v1h-1zM541 145h1v1h-1zM542 145h1v1h-1zM543 144h1v2h-1zM544 144h1v1h-1zM545 144h1v2h-1zM546 145h1v1h-1zM547 145h1v1h-1zM548 145h1v1h-1zM549 145h1v2h-1zM550 146h1v2h-1zM551 147h1v1h-1zM552 147h1v2h-1zM553 148h1v2h-1zM554 149h1v2h-1zM555 150h1v2h-1zM556 151h1v2h-1zM557 152h1v2h-1zM558 153h1v3h-1zM559 155h1v2h-1zM560 156h1v2h-1zM561 157h1v3h-1zM562 159h1v2h-1zM563 160h1v3h-1zM564 162h1v2h-1zM565 163h1v3h-1zM566 165h1v2h-1zM567 166h1v3h-1zM568 168h1v2h-1zM569 169h1v3h-1zM570 171h1v2h-1zM571 172h1v3h-1zM572 174h1v2h-1zM573 175h1v3h-1zM574 177h1v2h-1zM575 178h1v2h-1zM576 179h1v2h-1zM577 180h1v3h-1zM578 182h1v2h-1zM579 183h1v2h-1zM580 184h1v2h-1zM581 185h1v1h-1zM582 185h1v2h-1zM583 186h1v2h-1zM584 187h1v1h-1zM585 187h1v2h-1zM586 188h1v1h-1zM587 188h1v1h-1zM588 188h1v1h-1zM589 188h1v1h-1zM590 188h1v1h-1zM591 188h1v1h-1zM592 188h1v1h-1zM593 187h1v2h-1zM594 187h1v1h-1zM595 186h1v2h-1zM596 186h1v1h-1zM597 185h1v2h-1zM598 184h1v2h-1zM599 183h1v2h-1zM600 182h1v2h-1zM601 181h1v2h-1zM602 179h1v3h-1zM603 178h1v2h-1zM604 177h1v2h-1zM605 176h1v2h-1zM606 174h1v3h-1zM607 173h1v2h-1zM608 171h1v3h-1zM609 170h1v2h-1zM610 168h1v3h-1zM611 167h1v2h-1zM612 165h1v3h-1zM613 164h1v2h-1zM614 162h1v3h-1zM615 161h1v2h-1zM616 159h1v3h-1zM617 158h1v2h-1zM618 156h1v3h-1zM619 155h1v2h-1zM620 154h1v2h-1zM621 152h1v3h-1zM622 151h1v2h-1zM623 150h1v2h-1zM624 149h1v2h-1zM625 148h1v2h-1zM626 148h1v1h-1zM627 147h1v2h-1zM628 146h1v2h-1zM629 146h1v1h-1zM630 145h1v2h-1zM631 145h1v1h-1zM632 145h1v1h-1zM633 144h1v2h-1zM634 144h1v1h-1zM635 144h1v1h-1zM636 144h1v2h-1zM637 145h1v1h-1zM638 145h1v1h-1zM639 145h1v2h-1zM640 146h1v1h-1zM641 146h1v2h-1zM642 147h1v2h-1zM643 148h1v2h-1zM644 149h1v2h-1zM645 150h1v2h-1zM646 151h1v2h-1zM647 152h1v2h-1zM648 153h1v2h-1zM649 154h1v3h-1zM650 156h1v2h-1zM651 157h1v2h-1zM652 158h1v3h-1zM653 160h1v2h-1zM654 161h1v3h-1zM655 163h1v2h-1zM656 164h1v3h-1zM657 166h1v2h-1zM658 167h1v3h-1zM659 169h1v3h-1zM660 171h1v2h-1zM661 172h1v2h-1zM662 173h1v3h-1zM663 175h1v2h-1zM664 176h1v3h-1zM665 178h1v2h-1zM666 179h1v2h-1zM667 180h1v2h-1zM668 181h1v2h-1zM669 182h1v2h-1zM670 183h1v2h-1zM671 184h1v2h-1zM672 185h1v2h-1zM673 186h1v2h-1zM674 187h1v1h-1zM675 187h1v2h-1zM676 188h1v1h-1zM677 188h1v1h-1zM678 188h1v1h-1zM679 188h1v1h-1zM680 188h1v1h-1zM681 188h1v1h-1zM682 188h1v1h-1zM683 187h1v2h-1zM684 187h1v1h-1zM685 186h1v2h-1z" fill="#bcbcf0"/><path d="M1 317h1v2h-1zM2 317h1v2h-1zM3 317h1v2h-1zM4 317h1v2h-1zM5 317h1v2h-1zM6 317h1v2h-1zM7 317h1v2h-1zM8 317h1v2h-1zM9 317h1v2h-1zM10 317h1v2h-1zM11 317h1v2h-1zM12 317h1v2h-1zM13 317h1v2h-1zM14 317h1v2h-1zM15 317h1v2h-1zM16 317h1v2h-1zM17 317h1v2h-1zM18 317h1v2h-1zM19 317h1v2h-1zM20 317h1v2h-1zM21 317h1v2h-1zM22 317h1v2h-1zM23 317h1v2h-1zM24 317h1v2h-1zM25 317h1v2h-1zM26 317h1v2h-1zM27 317h1v2h-1zM28 317h1v2h-1zM29 317h1v2h-1zM30 317h1v2h-1zM31 317h1v2h-1zM32 317h1v2h-1zM33 317h1v2h-1zM34 271h1v2h-1zM35 271h1v2h-1zM36 271h1v2h-1zM37 271h1v2h-1zM38 271h1v2h-1zM39 271h1v2h-1zM40 271h1v2h-1zM41 271h1v2h-1zM42 271h1v2h-1zM43 271h1v2h-1zM44 271h1v2h-1zM45 271h1v2h-1zM46 271h1v2h-1zM47 271h1v2h-1zM48 271h1v2h-1zM49 271h1v2h-1zM50 271h1v2h-1zM51 271h1v2h-1zM52 271h1v2h-1zM53 271h1v2h-1zM54 271h1v2h-1zM55 271h1v2h-1zM56 271h1v2h-1zM57 271h1v2h-1zM58 271h1v2h-1zM59 271h1v2h-1zM60 271h1v2h-1zM61 271h1v2h-1zM62 271h1v2h-1zM63 271h1v2h-1zM64 271h1v2h-1zM65 271h1v2h-1zM66 271h1v2h-1zM67 271h1v2h-1zM68 271h1v2h-1zM69 271h1v2h-1zM70 271h1v2h-1zM71 271h1v2h-1zM72 271h1v2h-1zM73 271h1v2h-1zM74 271h1v2h-1zM75 271h1v2h-1zM76 271h1v2h-1zM77 271h1v2h-1zM78 271h1v2h-1zM79 317h1v2h-1zM80 317h1v2h-1zM81 317h1v2h-1zM82 317h1v2h-1zM83 317h1v2h-1zM84 317h1v2h-1zM85 317h1v2h-1zM86 317h1v2h-1zM87 317h1v2h-1zM88 317h1v2h-1zM89 317h1v2h-1zM90 317h1v2h-1zM91 317h1v2h-1zM92 317h1v2h-1zM93 317h1v2h-1zM94 317h1v2h-1zM95 317h1v2h-1zM96 317h1v2h-1zM97 317h1v2h-1zM98 317h1v2h-1zM99 317h1v2h-1zM100 317h1v2h-1zM101 317h1v2h-1zM102 317h1v2h-1zM103 317h1v2h-1zM104 317h1v2h-1zM105 317h1v2h-1zM106 317h1v2h-1zM107 317h1v2h-1zM108 317h1v2h-1zM109 317h1v2h-1zM110 317h1v2h-1zM111 317h1v2h-1zM112 317h1v2h-1zM113 317h1v2h-1zM114 317h1v2h-1zM115 317h1v2h-1zM116 317h1v2h-1zM117 317h1v2h-1zM118 317h1v2h-1zM119 317h1v2h-1zM120 317h1v2h-1zM121 317h1v2h-1zM122 317h1v2h-1zM123 317h1v2h-1zM124 271h1v2h-1zM125 271h1v2h-1zM126 271h1v2h-1zM127 271h1v2h-1zM128 271h1v2h-1zM129 271h1v2h-1zM130 271h1v2h-1zM131 271h1v2h-1zM132 271h1v2h-1zM133 271h1v2h-1zM134 271h1v2h-1zM135 271h1v2h-1zM136 271h1v2h-1zM137 271h1v2h-1zM138 271h1v2h-1zM139 271h1v2h-1zM140 271h1v2h-1zM141 271h1v2h-1zM142 271h1v2h-1zM143 271h1v2h-1zM144 271h1v2h-1zM145 271h1v2h-1zM146 271h1v2h-1zM147 271h1v2h-1zM148 271h1v2h-1zM149 271h1v2h-1zM150 271h1v2h-1zM151 271h1v2h-1zM152 271h1v2h-1zM153 271h1v2h-1zM154 271h1v2h-1zM155 271h1v2h-1zM156 271h1v2h-1zM157 271h1v2h-1zM158 271h1v2h-1zM159 271h1v2h-1zM160 271h1v2h-1zM161 271h1v2h-1zM162 271h1v2h-1zM163 271h1v2h-1zM164 271h1v2h-1zM165 271h1v2h-1zM166 271h1v2h-1zM167 271h1v2h-1zM168 271h1v2h-1zM169 317h1v2h-1zM170 317h1v2h-1zM171 317h1v2h-1zM172 317h1v2h-1zM173 317h1v2h-1zM174 317h1v2h-1zM175 317h1v2h-1zM176 317h1v2h-1zM177 317h1v2h-1zM178 317h1v2h-1zM179 317h1v2h-1zM180 317h1v2h-1zM181 317h1v2h-1zM182 317h1v2h-1zM183 317h1v2h-1zM184 317h1v2h-1zM185 317h1v2h-1zM186 317h1v2h-1zM187 317h1v2h-1zM188 317h1v2h-1zM189 317h1v2h-1zM190 317h1v2h-1zM191 317h1v2h-1zM192 317h1v2h-1zM193 317h1v2h-1zM194 317h1v2h-1zM195 317h1v2h-1zM196 317h1v2h-1zM197 317h1v2h-1zM198 317h1v2h-1zM199 317h1v2h-1zM200 317h1v2h-1zM201 317h1v2h-1zM202 317h1v2h-1zM203 317h1v2h-1zM204 317h1v2h-1zM205 317h1v2h-1zM206 317h1v2h-1zM207 317h1v2h-1zM208 317h1v2h-1zM209 317h1v2h-1zM210 317h1v2h-1zM211 317h1v2h-1zM212 317h1v2h-1zM213 317h1v2h-1zM214 271h1v2h-1zM215 271h1v2h-1zM216 271h1v2h-1zM217 271h1v2h-1zM218 271h1v2h-1zM219 271h1v2h-1zM220 271h1v2h-1zM221 271h1v2h-1zM222 271h1v2h-1zM223 271h1v2h-1zM224 271h1v2h-1zM225 271h1v2h-1zM226 271h1v2h-1zM227 271h1v2h-1zM228 271h1v2h-1zM229 271h1v2h-1zM230 271h1v2h-1zM231 271h1v2h-1zM232 271h1v2h-1zM233 271h1v2h-1zM234 271h1v2h-1zM235 271h1v2h-1zM236 271h1v2h-1zM237 271h1v2h-1zM238 271h1v2h-1zM239 271h1v2h-1zM240 271h1v2h-1zM241 271h1v2h-1zM242 271h1v2h-1zM243 271h1v2h-1zM244 271h1v2h-1zM245 271h1v2h-1zM246 271h1v2h-1zM247 271h1v2h-1zM248 271h1v2h-1zM249 271h1v2h-1zM250 271h1v2h-1zM251 271h1v2h-1zM252 271h1v2h-1zM253 271h1v2h-1zM254 271h1v2h-1zM255 271h1v2h-1zM256 271h1v2h-1zM257 271h1v2h-1zM258 271h1v2h-1zM259 271h1v2h-1zM260 317h1v2h-1zM261 317h1v2h-1zM262 317h1v2h-1zM263 317h1v2h-1zM264 317h1v2h-1zM265 317h1v2h-1zM266 317h1v2h-1zM267 317h1v2h-1zM268 317h1v2h-1zM269 317h1v2h-1zM270 317h1v2h-1zM271 317h1v2h-1zM272 317h1v2h-1zM273 317h1v2h-1zM274 317h1v2h-1zM275 317h1v2h-1zM276 317h1v2h-1zM277 317h1v2h-1zM278 317h1v2h-1zM279 317h1v2h-1zM280 317h1v2h-1zM281 317h1v2h-1zM282 317h1v2h-1zM283 317h1v2h-1zM284 317h1v2h-1zM285 317h1v2h-1zM286 317h1v2h-1zM287 317h1v2h-1zM288 317h1v2h-1zM289 317h1v2h-1zM290 317h1v2h-1zM291 317h1v2h-1zM292 317h1v2h-1zM293 317h1v2h-1zM294 317h1v2h-1zM295 317h1v2h-1zM296 317h1v2h-1zM297 317h1v2h-1zM298 317h1v2h-1zM299 317h1v2h-1zM300 317h1v2h-1zM301 317h1v2h-1zM302 317h1v2h-1zM303 317h1v2h-1zM304 317h1v2h-1zM305 271h1v2h-1zM306 271h1v2h-1zM307 271h1v2h-1zM308 271h1v2h-1zM309 271h1v2h-1zM310 271h1v2h-1zM311 271h1v2h-1zM312 271h1v2h-1zM313 271h1v2h-1zM314 271h1v2h-1zM315 271h1v2h-1zM316 271h1v2h-1zM317 271h1v2h-1zM318 271h1v2h-1zM319 271h1v2h-1zM320 271h1v2h-1zM321 271h1v2h-1zM322 271h1v2h-1zM323 271h1v2h-1zM324 271h1v2h-1zM325 271h1v2h-1zM326 271h1v2h-1zM327 271h1v2h-1zM328 271h1v2h-1zM329 271h1v2h-1zM330 271h1v2h-1zM331 271h1v2h-1zM332 271h1v2h-1zM333 271h1v2h-1zM334 271h1v2h-1zM335 271h1v2h-1zM336 271h1v2h-1zM337 271h1v2h-1zM338 271h1v2h-1zM339 271h1v2h-1zM340 271h1v2h-1zM341 271h1v2h-1zM342 271h1v2h-1zM343 271h1v2h-1zM344 271h1v2h-1zM345 271h1v2h-1zM346 271h1v2h-1zM347 271h1v2h-1zM348 271h1v2h-1zM349 271h1v2h-1zM350 317h1v2h-1zM351 317h1v2h-1zM352 317h1v2h-1zM353 317h1v2h-1zM354 317h1v2h-1zM355 317h1v2h-1zM356 317h1v2h-1zM357 317h1v2h-1zM358 317h1v2h-1zM359 317h1v2h-1zM360 317h1v2h-1zM361 317h1v2h-1zM362 317h1v2h-1zM363 317h1v2h-1zM364 317h1v2h-1zM365 317h1v2h-1zM366 317h1v2h-1zM367 317h1v2h-1zM368 317h1v2h-1zM369 317h1v2h-1zM370 317h1v2h-1zM371 317h1v2h-1zM372 317h1v2h-1zM373 317h1v2h-1zM374 317h1v2h-1zM375 317h1v2h-1zM376 317h1v2h-1zM377 317h1v2h-1zM378 317h1v2h-1zM379 317h1v2h-1zM380 317h1v2h-1zM381 317h1v2h-1zM382 317h1v2h-1zM383 317h1v2h-1zM384 317h1v2h-1zM385 317h1v2h-1zM386 317h1v2h-1zM387 317h1v2h-1zM388 317h1v2h-1zM389 317h1v2h-1zM390 317h1v2h-1zM391 317h1v2h-1zM392 317h1v2h-1zM393 317h1v2h-1zM394 317h1v2h-1zM395 271h1v2h-1zM396 271h1v2h-1zM397 271h1v2h-1zM398 271h1v2h-1zM399 271h1v2h-1zM400 271h1v2h-1zM401 271h1v2h-1zM402 271h1v2h-1zM403 271h1v2h-1zM404 271h1v2h-1zM405 271h1v2h-1zM406 271h1v2h-1zM407 271h1v2h-1zM408 271h1v2h-1zM409 271h1v2h-1zM410 271h1v2h-1zM411 271h1v2h-1zM412 271h1v2h-1zM413 271h1v2h-1zM414 271h1v2h-1zM415 271h1v2h-1zM416 271h1v2h-1zM417 271h1v2h-1zM418 271h1v2h-1zM419 271h1v2h-1zM420 271h1v2h-1zM421 271h1v2h-1zM422 271h1v2h-1zM423 271h1v2h-1zM424 271h1v2h-1zM425 271h1v2h-1zM426 271h1v2h-1zM427 271h1v2h-1zM428 271h1v2h-1zM429 271h1v2h-1zM430 271h1v2h-1zM431 271h1v2h-1zM432 271h1v2h-1zM433 271h1v2h-1zM434 271h1v2h-1zM435 271h1v2h-1zM436 271h1v2h-1zM437 271h1v2h-1zM438 271h1v2h-1zM439 271h1v2h-1zM440 317h1v2h-1zM441 317h1v2h-1zM442 317h1v2h-1zM443 317h1v2h-1zM444 317h1v2h-1zM445 317h1v2h-1zM446 317h1v2h-1zM447 317h1v2h-1zM448 317h1v2h-1zM449 317h1v2h-1zM450 317h1v2h-1zM451 317h1v2h-1zM452 317h1v2h-1zM453 317h1v2h-1zM454 317h1v2h-1zM455 317h1v2h-1zM456 317h1v2h-1zM457 317h1v2h-1zM458 317h1v2h-1zM459 317h1v2h-1zM460 317h1v2h-1zM461 317h1v2h-1zM462 317h1v2h-1zM463 317h1v2h-1zM464 317h1v2h-1zM465 317h1v2h-1zM466 317h1v2h-1zM467 317h1v2h-1zM468 317h1v2h-1zM469 317h1v2h-1zM470 317h1v2h-1zM471 317h1v2h-1zM472 317h1v2h-1zM473 317h1v2h-1zM474 317h1v2h-1zM475 317h1v2h-1zM476 317h1v2h-1zM477 317h1v2h-1zM478 317h1v2h-1zM479 317h1v2h-1zM480 317h1v2h-1zM481 317h1v2h-1zM482 317h1v2h-1zM483 317h1v2h-1zM484 317h1v2h-1zM485 271h1v2h-1zM486 271h1v2h-1zM487 271h1v2h-1zM488 271h1v2h-1zM489 271h1v2h-1zM490 271h1v2h-1zM491 271h1v2h-1zM492 271h1v2h-1zM493 271h1v2h-1zM494 271h1v2h-1zM495 271h1v2h-1zM496 271h1v2h-1zM497 271h1v2h-1zM498 271h1v2h-1zM499 271h1v2h-1zM500 271h1v2h-1zM501 271h1v2h-1zM502 271h1v2h-1zM503 271h1v2h-1zM504 271h1v2h-1zM505 271h1v2h-1zM506 271h1v2h-1zM507 271h1v2h-1zM508 271h1v2h-1zM509 271h1v2h-1zM510 271h1v2h-1zM511 271h1v2h-1zM512 271h1v2h-1zM513 271h1v2h-1zM514 271h1v2h-1zM515 271h1v2h-1zM516 271h1v2h-1zM517 271h1v2h-1zM518 271h1v2h-1zM519 271h1v2h-1zM520 271h1v2h-1zM521 271h1v2h-1zM522 271h1v2h-1zM523 271h1v2h-1zM524 271h1v2h-1zM525 271h1v2h-1zM526 271h1v2h-1zM527 271h1v2h-1zM528 271h1v2h-1zM529 271h1v2h-1zM530 317h1v2h-1zM531 317h1v2h-1zM532 317h1v2h-1zM533 317h1v2h-1zM534 317h1v2h-1zM535 317h1v2h-1zM536 317h1v2h-1zM537 317h1v2h-1zM538 317h1v2h-1zM539 317h1v2h-1zM540 317h1v2h-1zM541 317h1v2h-1zM542 317h1v2h-1zM543 317h1v2h-1zM544 317h1v2h-1zM545 317h1v2h-1zM546 317h1v2h-1zM547 317h1v2h-1zM548 317h1v2h-1zM549 317h1v2h-1zM550 317h1v2h-1zM551 317h1v2h-1zM552 317h1v2h-1zM553 317h1v2h-1zM554 317h1v2h-1zM555 317h1v2h-1zM556 317h1v2h-1zM557 317h1v2h-1zM558 317h1v2h-1zM559 317h1v2h-1zM560 317h1v2h-1zM561 317h1v2h-1zM562 317h1v2h-1zM563 317h1v2h-1zM564 317h1v2h-1zM565 317h1v2h-1zM566 317h1v2h-1zM567 317h1v2h-1zM568 317h1v2h-1zM569 317h1v2h-1zM570 317h1v2h-1zM571 317h1v2h-1zM572 317h1v2h-1zM573 317h1v2h-1zM574 317h1v2h-1zM575 271h1v2h-1zM576 271h1v2h-1zM577 271h1v2h-1zM578 271h1v2h-1zM579 271h1v2h-1zM580 271h1v2h-1zM581 271h1v2h-1zM582 271h1v2h-1zM583 271h1v2h-1zM584 271h1v2h-1zM585 271h1v2h-1zM586 271h1v2h-1zM587 271h1v2h-1zM588 271h1v2h-1zM589 271h1v2h-1zM590 271h1v2h-1zM591 271h1v2h-1zM592 271h1v2h-1zM593 271h1v2h-1zM594 271h1v2h-1zM595 271h1v2h-1zM596 271h1v2h-1zM597 271h1v2h-1zM598 271h1v2h-1zM599 271h1v2h-1zM600 271h1v2h-1zM601 271h1v2h-1zM602 271h1v2h-1zM603 271h1v2h-1zM604 271h1v2h-1zM605 271h1v2h-1zM606 271h1v2h-1zM607 271h1v2h-1zM608 271h1v2h-1zM609 271h1v2h-1zM610 271h1v2h-1zM611 271h1v2h-1zM612 271h1v2h-1zM613 271h1v2h-1zM614 271h1v2h-1zM615 271h1v2h-1zM616 271h1v2h-1zM617 271h1v2h-1zM618 271h1v2h-1zM619 271h1v2h-1zM620 271h1v2h-1zM621 317h1v2h-1zM622 317h1v2h-1zM623 317h1v2h-1zM624 317h1v2h-1zM625 317h1v2h-1zM626 317h1v2h-1zM627 317h1v2h-1zM628 317h1v2h-1zM629 317h1v2h-1zM630 317h1v2h-1zM631 317h1v2h-1zM632 317h1v2h-1zM633 317h1v2h-1zM634 317h1v2h-1zM635 317h1v2h-1zM636 317h1v2h-1zM637 317h1v2h-1zM638 317h1v2h-1zM639 317h1v2h-1zM640 317h1v2h-1zM641 317h1v2h-1zM642 317h1v2h-1zM643 317h1v2h-1zM644 317h1v2h-1zM645 317h1v2h-1zM646 317h1v2h-1zM647 317h1v2h-1zM648 317h1v2h-1zM649 317h1v2h-1zM650 317h1v2h-1zM651 317h1v2h-1zM652 317h1v2h-1zM653 317h1v2h-1zM654 317h1v2h-1zM655 317h1v2h-1zM656 317h1v2h-1zM657 317h1v2h-1zM658 317h1v2h-1zM659 317h1v2h-1zM660 317h1v2h-1zM661 317h1v2h-1zM662 317h1v2h-1zM663 317h1v2h-1zM664 317h1v2h-1zM665 317h1v2h-1zM666 271h1v2h-1zM667 271h1v2h-1zM668 271h1v2h-1zM669 271h1v2h-1zM670 271h1v2h-1zM671 271h1v2h-1zM672 271h1v2h-1zM673 271h1v2h-1zM674 271h1v2h-1zM675 271h1v2h-1zM676 271h1v2h-1zM677 271h1v2h-1zM678 271h1v2h-1zM679 271h1v2h-1zM680 271h1v2h-1zM681 271h1v2h-1zM682 271h1v2h-1zM683 271h1v2h-1zM684 271h1v2h-1zM685 271h1v2h-1zM33 271h2v48h-2zM78 271h2v48h-2zM123 271h2v48h-2zM168 271h2v48h-2zM213 271h2v48h-2zM259 271h2v48h-2zM304 271h2v48h-2zM349 271h2v48h-2zM394 271h2v48h-2zM439 271h2v48h-2zM484 271h2v48h-2zM529 271h2v48h-2zM574 271h2v48h-2zM620 271h2v48h-2zM665 271h2v48h-2z" fill="#e88444" opacity="0.55"/><path d="M1 317h1v1h-1zM2 317h1v1h-1zM3 317h1v1h-1zM4 317h1v1h-1zM5 317h1v1h-1zM6 317h1v1h-1zM7 317h1v1h-1zM8 317h1v1h-1zM9 317h1v1h-1zM10 317h1v1h-1zM11 317h1v1h-1zM12 317h1v1h-1zM13 317h1v1h-1zM14 317h1v1h-1zM15 317h1v1h-1zM16 317h1v1h-1zM17 317h1v1h-1zM18 317h1v1h-1zM19 317h1v1h-1zM20 317h1v1h-1zM21 317h1v1h-1zM22 317h1v1h-1zM23 317h1v1h-1zM24 317h1v1h-1zM25 317h1v1h-1zM26 317h1v1h-1zM27 317h1v1h-1zM28 317h1v1h-1zM29 317h1v1h-1zM30 317h1v1h-1zM31 317h1v1h-1zM32 317h1v1h-1zM33 317h1v1h-1zM34 271h1v1h-1zM35 271h1v1h-1zM36 271h1v1h-1zM37 271h1v1h-1zM38 271h1v1h-1zM39 271h1v1h-1zM40 271h1v1h-1zM41 271h1v1h-1zM42 271h1v1h-1zM43 271h1v1h-1zM44 271h1v1h-1zM45 271h1v1h-1zM46 271h1v1h-1zM47 271h1v1h-1zM48 271h1v1h-1zM49 271h1v1h-1zM50 271h1v1h-1zM51 271h1v1h-1zM52 271h1v1h-1zM53 271h1v1h-1zM54 271h1v1h-1zM55 271h1v1h-1zM56 271h1v1h-1zM57 271h1v1h-1zM58 271h1v1h-1zM59 271h1v1h-1zM60 271h1v1h-1zM61 271h1v1h-1zM62 271h1v1h-1zM63 271h1v1h-1zM64 271h1v1h-1zM65 271h1v1h-1zM66 271h1v1h-1zM67 271h1v1h-1zM68 271h1v1h-1zM69 271h1v1h-1zM70 271h1v1h-1zM71 271h1v1h-1zM72 271h1v1h-1zM73 271h1v1h-1zM74 271h1v1h-1zM75 271h1v1h-1zM76 271h1v1h-1zM77 271h1v1h-1zM78 271h1v1h-1zM79 317h1v1h-1zM80 317h1v1h-1zM81 317h1v1h-1zM82 317h1v1h-1zM83 317h1v1h-1zM84 317h1v1h-1zM85 317h1v1h-1zM86 317h1v1h-1zM87 317h1v1h-1zM88 317h1v1h-1zM89 317h1v1h-1zM90 317h1v1h-1zM91 317h1v1h-1zM92 317h1v1h-1zM93 317h1v1h-1zM94 317h1v1h-1zM95 317h1v1h-1zM96 317h1v1h-1zM97 317h1v1h-1zM98 317h1v1h-1zM99 317h1v1h-1zM100 317h1v1h-1zM101 317h1v1h-1zM102 317h1v1h-1zM103 317h1v1h-1zM104 317h1v1h-1zM105 317h1v1h-1zM106 317h1v1h-1zM107 317h1v1h-1zM108 317h1v1h-1zM109 317h1v1h-1zM110 317h1v1h-1zM111 317h1v1h-1zM112 317h1v1h-1zM113 317h1v1h-1zM114 317h1v1h-1zM115 317h1v1h-1zM116 317h1v1h-1zM117 317h1v1h-1zM118 317h1v1h-1zM119 317h1v1h-1zM120 317h1v1h-1zM121 317h1v1h-1zM122 317h1v1h-1zM123 317h1v1h-1zM124 271h1v1h-1zM125 271h1v1h-1zM126 271h1v1h-1zM127 271h1v1h-1zM128 271h1v1h-1zM129 271h1v1h-1zM130 271h1v1h-1zM131 271h1v1h-1zM132 271h1v1h-1zM133 271h1v1h-1zM134 271h1v1h-1zM135 271h1v1h-1zM136 271h1v1h-1zM137 271h1v1h-1zM138 271h1v1h-1zM139 271h1v1h-1zM140 271h1v1h-1zM141 271h1v1h-1zM142 271h1v1h-1zM143 271h1v1h-1zM144 271h1v1h-1zM145 271h1v1h-1zM146 271h1v1h-1zM147 271h1v1h-1zM148 271h1v1h-1zM149 271h1v1h-1zM150 271h1v1h-1zM151 271h1v1h-1zM152 271h1v1h-1zM153 271h1v1h-1zM154 271h1v1h-1zM155 271h1v1h-1zM156 271h1v1h-1zM157 271h1v1h-1zM158 271h1v1h-1zM159 271h1v1h-1zM160 271h1v1h-1zM161 271h1v1h-1zM162 271h1v1h-1zM163 271h1v1h-1zM164 271h1v1h-1zM165 271h1v1h-1zM166 271h1v1h-1zM167 271h1v1h-1zM168 271h1v1h-1zM169 317h1v1h-1zM170 317h1v1h-1zM171 317h1v1h-1zM172 317h1v1h-1zM173 317h1v1h-1zM174 317h1v1h-1zM175 317h1v1h-1zM176 317h1v1h-1zM177 317h1v1h-1zM178 317h1v1h-1zM179 317h1v1h-1zM180 317h1v1h-1zM181 317h1v1h-1zM182 317h1v1h-1zM183 317h1v1h-1zM184 317h1v1h-1zM185 317h1v1h-1zM186 317h1v1h-1zM187 317h1v1h-1zM188 317h1v1h-1zM189 317h1v1h-1zM190 317h1v1h-1zM191 317h1v1h-1zM192 317h1v1h-1zM193 317h1v1h-1zM194 317h1v1h-1zM195 317h1v1h-1zM196 317h1v1h-1zM197 317h1v1h-1zM198 317h1v1h-1zM199 317h1v1h-1zM200 317h1v1h-1zM201 317h1v1h-1zM202 317h1v1h-1zM203 317h1v1h-1zM204 317h1v1h-1zM205 317h1v1h-1zM206 317h1v1h-1zM207 317h1v1h-1zM208 317h1v1h-1zM209 317h1v1h-1zM210 317h1v1h-1zM211 317h1v1h-1zM212 317h1v1h-1zM213 317h1v1h-1zM214 271h1v1h-1zM215 271h1v1h-1zM216 271h1v1h-1zM217 271h1v1h-1zM218 271h1v1h-1zM219 271h1v1h-1zM220 271h1v1h-1zM221 271h1v1h-1zM222 271h1v1h-1zM223 271h1v1h-1zM224 271h1v1h-1zM225 271h1v1h-1zM226 271h1v1h-1zM227 271h1v1h-1zM228 271h1v1h-1zM229 271h1v1h-1zM230 271h1v1h-1zM231 271h1v1h-1zM232 271h1v1h-1zM233 271h1v1h-1zM234 271h1v1h-1zM235 271h1v1h-1zM236 271h1v1h-1zM237 271h1v1h-1zM238 271h1v1h-1zM239 271h1v1h-1zM240 271h1v1h-1zM241 271h1v1h-1zM242 271h1v1h-1zM243 271h1v1h-1zM244 271h1v1h-1zM245 271h1v1h-1zM246 271h1v1h-1zM247 271h1v1h-1zM248 271h1v1h-1zM249 271h1v1h-1zM250 271h1v1h-1zM251 271h1v1h-1zM252 271h1v1h-1zM253 271h1v1h-1zM254 271h1v1h-1zM255 271h1v1h-1zM256 271h1v1h-1zM257 271h1v1h-1zM258 271h1v1h-1zM259 271h1v1h-1zM260 317h1v1h-1zM261 317h1v1h-1zM262 317h1v1h-1zM263 317h1v1h-1zM264 317h1v1h-1zM265 317h1v1h-1zM266 317h1v1h-1zM267 317h1v1h-1zM268 317h1v1h-1zM269 317h1v1h-1zM270 317h1v1h-1zM271 317h1v1h-1zM272 317h1v1h-1zM273 317h1v1h-1zM274 317h1v1h-1zM275 317h1v1h-1zM276 317h1v1h-1zM277 317h1v1h-1zM278 317h1v1h-1zM279 317h1v1h-1zM280 317h1v1h-1zM281 317h1v1h-1zM282 317h1v1h-1zM283 317h1v1h-1zM284 317h1v1h-1zM285 317h1v1h-1zM286 317h1v1h-1zM287 317h1v1h-1zM288 317h1v1h-1zM289 317h1v1h-1zM290 317h1v1h-1zM291 317h1v1h-1zM292 317h1v1h-1zM293 317h1v1h-1zM294 317h1v1h-1zM295 317h1v1h-1zM296 317h1v1h-1zM297 317h1v1h-1zM298 317h1v1h-1zM299 317h1v1h-1zM300 317h1v1h-1zM301 317h1v1h-1zM302 317h1v1h-1zM303 317h1v1h-1zM304 317h1v1h-1zM305 271h1v1h-1zM306 271h1v1h-1zM307 271h1v1h-1zM308 271h1v1h-1zM309 271h1v1h-1zM310 271h1v1h-1zM311 271h1v1h-1zM312 271h1v1h-1zM313 271h1v1h-1zM314 271h1v1h-1zM315 271h1v1h-1zM316 271h1v1h-1zM317 271h1v1h-1zM318 271h1v1h-1zM319 271h1v1h-1zM320 271h1v1h-1zM321 271h1v1h-1zM322 271h1v1h-1zM323 271h1v1h-1zM324 271h1v1h-1zM325 271h1v1h-1zM326 271h1v1h-1zM327 271h1v1h-1zM328 271h1v1h-1zM329 271h1v1h-1zM330 271h1v1h-1zM331 271h1v1h-1zM332 271h1v1h-1zM333 271h1v1h-1zM334 271h1v1h-1zM335 271h1v1h-1zM336 271h1v1h-1zM337 271h1v1h-1zM338 271h1v1h-1zM339 271h1v1h-1zM340 271h1v1h-1zM341 271h1v1h-1zM342 271h1v1h-1zM343 271h1v1h-1zM344 271h1v1h-1zM345 271h1v1h-1zM346 271h1v1h-1zM347 271h1v1h-1zM348 271h1v1h-1zM349 271h1v1h-1zM350 317h1v1h-1zM351 317h1v1h-1zM352 317h1v1h-1zM353 317h1v1h-1zM354 317h1v1h-1zM355 317h1v1h-1zM356 317h1v1h-1zM357 317h1v1h-1zM358 317h1v1h-1zM359 317h1v1h-1zM360 317h1v1h-1zM361 317h1v1h-1zM362 317h1v1h-1zM363 317h1v1h-1zM364 317h1v1h-1zM365 317h1v1h-1zM366 317h1v1h-1zM367 317h1v1h-1zM368 317h1v1h-1zM369 317h1v1h-1zM370 317h1v1h-1zM371 317h1v1h-1zM372 317h1v1h-1zM373 317h1v1h-1zM374 317h1v1h-1zM375 317h1v1h-1zM376 317h1v1h-1zM377 317h1v1h-1zM378 317h1v1h-1zM379 317h1v1h-1zM380 317h1v1h-1zM381 317h1v1h-1zM382 317h1v1h-1zM383 317h1v1h-1zM384 317h1v1h-1zM385 317h1v1h-1zM386 317h1v1h-1zM387 317h1v1h-1zM388 317h1v1h-1zM389 317h1v1h-1zM390 317h1v1h-1zM391 317h1v1h-1zM392 317h1v1h-1zM393 317h1v1h-1zM394 317h1v1h-1zM395 271h1v1h-1zM396 271h1v1h-1zM397 271h1v1h-1zM398 271h1v1h-1zM399 271h1v1h-1zM400 271h1v1h-1zM401 271h1v1h-1zM402 271h1v1h-1zM403 271h1v1h-1zM404 271h1v1h-1zM405 271h1v1h-1zM406 271h1v1h-1zM407 271h1v1h-1zM408 271h1v1h-1zM409 271h1v1h-1zM410 271h1v1h-1zM411 271h1v1h-1zM412 271h1v1h-1zM413 271h1v1h-1zM414 271h1v1h-1zM415 271h1v1h-1zM416 271h1v1h-1zM417 271h1v1h-1zM418 271h1v1h-1zM419 271h1v1h-1zM420 271h1v1h-1zM421 271h1v1h-1zM422 271h1v1h-1zM423 271h1v1h-1zM424 271h1v1h-1zM425 271h1v1h-1zM426 271h1v1h-1zM427 271h1v1h-1zM428 271h1v1h-1zM429 271h1v1h-1zM430 271h1v1h-1zM431 271h1v1h-1zM432 271h1v1h-1zM433 271h1v1h-1zM434 271h1v1h-1zM435 271h1v1h-1zM436 271h1v1h-1zM437 271h1v1h-1zM438 271h1v1h-1zM439 271h1v1h-1zM440 317h1v1h-1zM441 317h1v1h-1zM442 317h1v1h-1zM443 317h1v1h-1zM444 317h1v1h-1zM445 317h1v1h-1zM446 317h1v1h-1zM447 317h1v1h-1zM448 317h1v1h-1zM449 317h1v1h-1zM450 317h1v1h-1zM451 317h1v1h-1zM452 317h1v1h-1zM453 317h1v1h-1zM454 317h1v1h-1zM455 317h1v1h-1zM456 317h1v1h-1zM457 317h1v1h-1zM458 317h1v1h-1zM459 317h1v1h-1zM460 317h1v1h-1zM461 317h1v1h-1zM462 317h1v1h-1zM463 317h1v1h-1zM464 317h1v1h-1zM465 317h1v1h-1zM466 317h1v1h-1zM467 317h1v1h-1zM468 317h1v1h-1zM469 317h1v1h-1zM470 317h1v1h-1zM471 317h1v1h-1zM472 317h1v1h-1zM473 317h1v1h-1zM474 317h1v1h-1zM475 317h1v1h-1zM476 317h1v1h-1zM477 317h1v1h-1zM478 317h1v1h-1zM479 317h1v1h-1zM480 317h1v1h-1zM481 317h1v1h-1zM482 317h1v1h-1zM483 317h1v1h-1zM484 317h1v1h-1zM485 271h1v1h-1zM486 271h1v1h-1zM487 271h1v1h-1zM488 271h1v1h-1zM489 271h1v1h-1zM490 271h1v1h-1zM491 271h1v1h-1zM492 271h1v1h-1zM493 271h1v1h-1zM494 271h1v1h-1zM495 271h1v1h-1zM496 271h1v1h-1zM497 271h1v1h-1zM498 271h1v1h-1zM499 271h1v1h-1zM500 271h1v1h-1zM501 271h1v1h-1zM502 271h1v1h-1zM503 271h1v1h-1zM504 271h1v1h-1zM505 271h1v1h-1zM506 271h1v1h-1zM507 271h1v1h-1zM508 271h1v1h-1zM509 271h1v1h-1zM510 271h1v1h-1zM511 271h1v1h-1zM512 271h1v1h-1zM513 271h1v1h-1zM514 271h1v1h-1zM515 271h1v1h-1zM516 271h1v1h-1zM517 271h1v1h-1zM518 271h1v1h-1zM519 271h1v1h-1zM520 271h1v1h-1zM521 271h1v1h-1zM522 271h1v1h-1zM523 271h1v1h-1zM524 271h1v1h-1zM525 271h1v1h-1zM526 271h1v1h-1zM527 271h1v1h-1zM528 271h1v1h-1zM529 271h1v1h-1zM530 317h1v1h-1zM531 317h1v1h-1zM532 317h1v1h-1zM533 317h1v1h-1zM534 317h1v1h-1zM535 317h1v1h-1zM536 317h1v1h-1zM537 317h1v1h-1zM538 317h1v1h-1zM539 317h1v1h-1zM540 317h1v1h-1zM541 317h1v1h-1zM542 317h1v1h-1zM543 317h1v1h-1zM544 317h1v1h-1zM545 317h1v1h-1zM546 317h1v1h-1zM547 317h1v1h-1zM548 317h1v1h-1zM549 317h1v1h-1zM550 317h1v1h-1zM551 317h1v1h-1zM552 317h1v1h-1zM553 317h1v1h-1zM554 317h1v1h-1zM555 317h1v1h-1zM556 317h1v1h-1zM557 317h1v1h-1zM558 317h1v1h-1zM559 317h1v1h-1zM560 317h1v1h-1zM561 317h1v1h-1zM562 317h1v1h-1zM563 317h1v1h-1zM564 317h1v1h-1zM565 317h1v1h-1zM566 317h1v1h-1zM567 317h1v1h-1zM568 317h1v1h-1zM569 317h1v1h-1zM570 317h1v1h-1zM571 317h1v1h-1zM572 317h1v1h-1zM573 317h1v1h-1zM574 317h1v1h-1zM575 271h1v1h-1zM576 271h1v1h-1zM577 271h1v1h-1zM578 271h1v1h-1zM579 271h1v1h-1zM580 271h1v1h-1zM581 271h1v1h-1zM582 271h1v1h-1zM583 271h1v1h-1zM584 271h1v1h-1zM585 271h1v1h-1zM586 271h1v1h-1zM587 271h1v1h-1zM588 271h1v1h-1zM589 271h1v1h-1zM590 271h1v1h-1zM591 271h1v1h-1zM592 271h1v1h-1zM593 271h1v1h-1zM594 271h1v1h-1zM595 271h1v1h-1zM596 271h1v1h-1zM597 271h1v1h-1zM598 271h1v1h-1zM599 271h1v1h-1zM600 271h1v1h-1zM601 271h1v1h-1zM602 271h1v1h-1zM603 271h1v1h-1zM604 271h1v1h-1zM605 271h1v1h-1zM606 271h1v1h-1zM607 271h1v1h-1zM608 271h1v1h-1zM609 271h1v1h-1zM610 271h1v1h-1zM611 271h1v1h-1zM612 271h1v1h-1zM613 271h1v1h-1zM614 271h1v1h-1zM615 271h1v1h-1zM616 271h1v1h-1zM617 271h1v1h-1zM618 271h1v1h-1zM619 271h1v1h-1zM620 271h1v1h-1zM621 317h1v1h-1zM622 317h1v1h-1zM623 317h1v1h-1zM624 317h1v1h-1zM625 317h1v1h-1zM626 317h1v1h-1zM627 317h1v1h-1zM628 317h1v1h-1zM629 317h1v1h-1zM630 317h1v1h-1zM631 317h1v1h-1zM632 317h1v1h-1zM633 317h1v1h-1zM634 317h1v1h-1zM635 317h1v1h-1zM636 317h1v1h-1zM637 317h1v1h-1zM638 317h1v1h-1zM639 317h1v1h-1zM640 317h1v1h-1zM641 317h1v1h-1zM642 317h1v1h-1zM643 317h1v1h-1zM644 317h1v1h-1zM645 317h1v1h-1zM646 317h1v1h-1zM647 317h1v1h-1zM648 317h1v1h-1zM649 317h1v1h-1zM650 317h1v1h-1zM651 317h1v1h-1zM652 317h1v1h-1zM653 317h1v1h-1zM654 317h1v1h-1zM655 317h1v1h-1zM656 317h1v1h-1zM657 317h1v1h-1zM658 317h1v1h-1zM659 317h1v1h-1zM660 317h1v1h-1zM661 317h1v1h-1zM662 317h1v1h-1zM663 317h1v1h-1zM664 317h1v1h-1zM665 317h1v1h-1zM666 271h1v1h-1zM667 271h1v1h-1zM668 271h1v1h-1zM669 271h1v1h-1zM670 271h1v1h-1zM671 271h1v1h-1zM672 271h1v1h-1zM673 271h1v1h-1zM674 271h1v1h-1zM675 271h1v1h-1zM676 271h1v1h-1zM677 271h1v1h-1zM678 271h1v1h-1zM679 271h1v1h-1zM680 271h1v1h-1zM681 271h1v1h-1zM682 271h1v1h-1zM683 271h1v1h-1zM684 271h1v1h-1zM685 271h1v1h-1zM33 271h1v47h-1zM78 271h1v47h-1zM123 271h1v47h-1zM168 271h1v47h-1zM213 271h1v47h-1zM259 271h1v47h-1zM304 271h1v47h-1zM349 271h1v47h-1zM394 271h1v47h-1zM439 271h1v47h-1zM484 271h1v47h-1zM529 271h1v47h-1zM574 271h1v47h-1zM620 271h1v47h-1zM665 271h1v47h-1z" fill="#f4a468"/><path d="M1 414h1v2h-1zM2 414h1v2h-1zM3 414h1v2h-1zM4 414h1v2h-1zM5 414h1v2h-1zM6 414h1v2h-1zM7 414h1v2h-1zM8 414h1v2h-1zM9 414h1v2h-1zM10 414h1v2h-1zM11 414h1v2h-1zM12 414h1v2h-1zM13 414h1v2h-1zM14 414h1v2h-1zM15 414h1v2h-1zM16 414h1v2h-1zM17 414h1v2h-1zM18 414h1v2h-1zM19 414h1v2h-1zM20 414h1v2h-1zM21 414h1v2h-1zM22 414h1v2h-1zM23 414h1v2h-1zM24 414h1v2h-1zM25 414h1v2h-1zM26 414h1v2h-1zM27 414h1v2h-1zM28 414h1v2h-1zM29 414h1v2h-1zM30 414h1v2h-1zM31 414h1v2h-1zM32 414h1v2h-1zM33 414h1v2h-1zM34 368h1v2h-1zM35 368h1v2h-1zM36 368h1v2h-1zM37 368h1v2h-1zM38 368h1v2h-1zM39 368h1v2h-1zM40 368h1v2h-1zM41 368h1v2h-1zM42 368h1v2h-1zM43 368h1v2h-1zM44 368h1v2h-1zM45 368h1v2h-1zM46 368h1v2h-1zM47 368h1v2h-1zM48 368h1v2h-1zM49 368h1v2h-1zM50 368h1v2h-1zM51 368h1v2h-1zM52 368h1v2h-1zM53 368h1v2h-1zM54 368h1v2h-1zM55 368h1v2h-1zM56 368h1v2h-1zM57 368h1v2h-1zM58 368h1v2h-1zM59 368h1v2h-1zM60 368h1v2h-1zM61 368h1v2h-1zM62 368h1v2h-1zM63 368h1v2h-1zM64 368h1v2h-1zM65 368h1v2h-1zM66 368h1v2h-1zM67 368h1v2h-1zM68 368h1v2h-1zM69 368h1v2h-1zM70 368h1v2h-1zM71 368h1v2h-1zM72 368h1v2h-1zM73 368h1v2h-1zM74 368h1v2h-1zM75 368h1v2h-1zM76 368h1v2h-1zM77 368h1v2h-1zM78 368h1v2h-1zM79 414h1v2h-1zM80 414h1v2h-1zM81 414h1v2h-1zM82 414h1v2h-1zM83 414h1v2h-1zM84 414h1v2h-1zM85 414h1v2h-1zM86 414h1v2h-1zM87 414h1v2h-1zM88 414h1v2h-1zM89 414h1v2h-1zM90 414h1v2h-1zM91 414h1v2h-1zM92 414h1v2h-1zM93 414h1v2h-1zM94 414h1v2h-1zM95 414h1v2h-1zM96 414h1v2h-1zM97 414h1v2h-1zM98 414h1v2h-1zM99 414h1v2h-1zM100 414h1v2h-1zM101 414h1v2h-1zM102 414h1v2h-1zM103 414h1v2h-1zM104 414h1v2h-1zM105 414h1v2h-1zM106 414h1v2h-1zM107 414h1v2h-1zM108 414h1v2h-1zM109 414h1v2h-1zM110 414h1v2h-1zM111 414h1v2h-1zM112 414h1v2h-1zM113 414h1v2h-1zM114 414h1v2h-1zM115 414h1v2h-1zM116 414h1v2h-1zM117 414h1v2h-1zM118 414h1v2h-1zM119 414h1v2h-1zM120 414h1v2h-1zM121 414h1v2h-1zM122 414h1v2h-1zM123 414h1v2h-1zM124 368h1v2h-1zM125 368h1v2h-1zM126 368h1v2h-1zM127 368h1v2h-1zM128 368h1v2h-1zM129 368h1v2h-1zM130 368h1v2h-1zM131 368h1v2h-1zM132 368h1v2h-1zM133 368h1v2h-1zM134 368h1v2h-1zM135 368h1v2h-1zM136 368h1v2h-1zM137 368h1v2h-1zM138 368h1v2h-1zM139 368h1v2h-1zM140 368h1v2h-1zM141 368h1v2h-1zM142 368h1v2h-1zM143 368h1v2h-1zM144 368h1v2h-1zM145 368h1v2h-1zM146 368h1v2h-1zM147 368h1v2h-1zM148 368h1v2h-1zM149 368h1v2h-1zM150 368h1v2h-1zM151 368h1v2h-1zM152 368h1v2h-1zM153 368h1v2h-1zM154 368h1v2h-1zM155 368h1v2h-1zM156 368h1v2h-1zM157 368h1v2h-1zM158 368h1v2h-1zM159 368h1v2h-1zM160 368h1v2h-1zM161 368h1v2h-1zM162 368h1v2h-1zM163 368h1v2h-1zM164 368h1v2h-1zM165 368h1v2h-1zM166 368h1v2h-1zM167 368h1v2h-1zM168 368h1v2h-1zM169 414h1v2h-1zM170 414h1v2h-1zM171 414h1v2h-1zM172 414h1v2h-1zM173 414h1v2h-1zM174 414h1v2h-1zM175 414h1v2h-1zM176 414h1v2h-1zM177 414h1v2h-1zM178 414h1v2h-1zM179 414h1v2h-1zM180 414h1v2h-1zM181 414h1v2h-1zM182 414h1v2h-1zM183 414h1v2h-1zM184 414h1v2h-1zM185 414h1v2h-1zM186 414h1v2h-1zM187 414h1v2h-1zM188 414h1v2h-1zM189 414h1v2h-1zM190 414h1v2h-1zM191 414h1v2h-1zM192 414h1v2h-1zM193 414h1v2h-1zM194 414h1v2h-1zM195 414h1v2h-1zM196 414h1v2h-1zM197 414h1v2h-1zM198 414h1v2h-1zM199 414h1v2h-1zM200 414h1v2h-1zM201 414h1v2h-1zM202 414h1v2h-1zM203 414h1v2h-1zM204 414h1v2h-1zM205 414h1v2h-1zM206 414h1v2h-1zM207 414h1v2h-1zM208 414h1v2h-1zM209 414h1v2h-1zM210 414h1v2h-1zM211 414h1v2h-1zM212 414h1v2h-1zM213 414h1v2h-1zM214 368h1v2h-1zM215 368h1v2h-1zM216 368h1v2h-1zM217 368h1v2h-1zM218 368h1v2h-1zM219 368h1v2h-1zM220 368h1v2h-1zM221 368h1v2h-1zM222 368h1v2h-1zM223 368h1v2h-1zM224 368h1v2h-1zM225 368h1v2h-1zM226 368h1v2h-1zM227 368h1v2h-1zM228 368h1v2h-1zM229 368h1v2h-1zM230 368h1v2h-1zM231 368h1v2h-1zM232 368h1v2h-1zM233 368h1v2h-1zM234 368h1v2h-1zM235 368h1v2h-1zM236 368h1v2h-1zM237 368h1v2h-1zM238 368h1v2h-1zM239 368h1v2h-1zM240 368h1v2h-1zM241 368h1v2h-1zM242 368h1v2h-1zM243 368h1v2h-1zM244 368h1v2h-1zM245 368h1v2h-1zM246 368h1v2h-1zM247 368h1v2h-1zM248 368h1v2h-1zM249 368h1v2h-1zM250 368h1v2h-1zM251 368h1v2h-1zM252 368h1v2h-1zM253 368h1v2h-1zM254 368h1v2h-1zM255 368h1v2h-1zM256 368h1v2h-1zM257 368h1v2h-1zM258 368h1v2h-1zM259 368h1v2h-1zM260 414h1v2h-1zM261 414h1v2h-1zM262 414h1v2h-1zM263 414h1v2h-1zM264 414h1v2h-1zM265 414h1v2h-1zM266 414h1v2h-1zM267 414h1v2h-1zM268 414h1v2h-1zM269 414h1v2h-1zM270 414h1v2h-1zM271 414h1v2h-1zM272 414h1v2h-1zM273 414h1v2h-1zM274 414h1v2h-1zM275 414h1v2h-1zM276 414h1v2h-1zM277 414h1v2h-1zM278 414h1v2h-1zM279 414h1v2h-1zM280 414h1v2h-1zM281 414h1v2h-1zM282 414h1v2h-1zM283 414h1v2h-1zM284 414h1v2h-1zM285 414h1v2h-1zM286 414h1v2h-1zM287 414h1v2h-1zM288 414h1v2h-1zM289 414h1v2h-1zM290 414h1v2h-1zM291 414h1v2h-1zM292 414h1v2h-1zM293 414h1v2h-1zM294 414h1v2h-1zM295 414h1v2h-1zM296 414h1v2h-1zM297 414h1v2h-1zM298 414h1v2h-1zM299 414h1v2h-1zM300 414h1v2h-1zM301 414h1v2h-1zM302 414h1v2h-1zM303 414h1v2h-1zM304 414h1v2h-1zM305 368h1v2h-1zM306 368h1v2h-1zM307 368h1v2h-1zM308 368h1v2h-1zM309 368h1v2h-1zM310 368h1v2h-1zM311 368h1v2h-1zM312 368h1v2h-1zM313 368h1v2h-1zM314 368h1v2h-1zM315 368h1v2h-1zM316 368h1v2h-1zM317 368h1v2h-1zM318 368h1v2h-1zM319 368h1v2h-1zM320 368h1v2h-1zM321 368h1v2h-1zM322 368h1v2h-1zM323 368h1v2h-1zM324 368h1v2h-1zM325 368h1v2h-1zM326 368h1v2h-1zM327 368h1v2h-1zM328 368h1v2h-1zM329 368h1v2h-1zM330 368h1v2h-1zM331 368h1v2h-1zM332 368h1v2h-1zM333 368h1v2h-1zM334 368h1v2h-1zM335 368h1v2h-1zM336 368h1v2h-1zM337 368h1v2h-1zM338 368h1v2h-1zM339 368h1v2h-1zM340 368h1v2h-1zM341 368h1v2h-1zM342 368h1v2h-1zM343 368h1v2h-1zM344 368h1v2h-1zM345 368h1v2h-1zM346 368h1v2h-1zM347 368h1v2h-1zM348 368h1v2h-1zM349 368h1v2h-1zM350 414h1v2h-1zM351 414h1v2h-1zM352 414h1v2h-1zM353 414h1v2h-1zM354 414h1v2h-1zM355 414h1v2h-1zM356 414h1v2h-1zM357 414h1v2h-1zM358 414h1v2h-1zM359 414h1v2h-1zM360 414h1v2h-1zM361 414h1v2h-1zM362 414h1v2h-1zM363 414h1v2h-1zM364 414h1v2h-1zM365 414h1v2h-1zM366 414h1v2h-1zM367 414h1v2h-1zM368 414h1v2h-1zM369 414h1v2h-1zM370 414h1v2h-1zM371 414h1v2h-1zM372 414h1v2h-1zM373 414h1v2h-1zM374 414h1v2h-1zM375 414h1v2h-1zM376 414h1v2h-1zM377 414h1v2h-1zM378 414h1v2h-1zM379 414h1v2h-1zM380 414h1v2h-1zM381 414h1v2h-1zM382 414h1v2h-1zM383 414h1v2h-1zM384 414h1v2h-1zM385 414h1v2h-1zM386 414h1v2h-1zM387 414h1v2h-1zM388 414h1v2h-1zM389 414h1v2h-1zM390 414h1v2h-1zM391 414h1v2h-1zM392 414h1v2h-1zM393 414h1v2h-1zM394 414h1v2h-1zM395 368h1v2h-1zM396 368h1v2h-1zM397 368h1v2h-1zM398 368h1v2h-1zM399 368h1v2h-1zM400 368h1v2h-1zM401 368h1v2h-1zM402 368h1v2h-1zM403 368h1v2h-1zM404 368h1v2h-1zM405 368h1v2h-1zM406 368h1v2h-1zM407 368h1v2h-1zM408 368h1v2h-1zM409 368h1v2h-1zM410 368h1v2h-1zM411 368h1v2h-1zM412 368h1v2h-1zM413 368h1v2h-1zM414 368h1v2h-1zM415 368h1v2h-1zM416 368h1v2h-1zM417 368h1v2h-1zM418 368h1v2h-1zM419 368h1v2h-1zM420 368h1v2h-1zM421 368h1v2h-1zM422 368h1v2h-1zM423 368h1v2h-1zM424 368h1v2h-1zM425 368h1v2h-1zM426 368h1v2h-1zM427 368h1v2h-1zM428 368h1v2h-1zM429 368h1v2h-1zM430 368h1v2h-1zM431 368h1v2h-1zM432 368h1v2h-1zM433 368h1v2h-1zM434 368h1v2h-1zM435 368h1v2h-1zM436 368h1v2h-1zM437 368h1v2h-1zM438 368h1v2h-1zM439 368h1v2h-1zM440 414h1v2h-1zM441 414h1v2h-1zM442 414h1v2h-1zM443 414h1v2h-1zM444 414h1v2h-1zM445 414h1v2h-1zM446 414h1v2h-1zM447 414h1v2h-1zM448 414h1v2h-1zM449 414h1v2h-1zM450 414h1v2h-1zM451 414h1v2h-1zM452 414h1v2h-1zM453 414h1v2h-1zM454 414h1v2h-1zM455 414h1v2h-1zM456 414h1v2h-1zM457 414h1v2h-1zM458 414h1v2h-1zM459 414h1v2h-1zM460 414h1v2h-1zM461 414h1v2h-1zM462 414h1v2h-1zM463 414h1v2h-1zM464 414h1v2h-1zM465 414h1v2h-1zM466 414h1v2h-1zM467 414h1v2h-1zM468 414h1v2h-1zM469 414h1v2h-1zM470 414h1v2h-1zM471 414h1v2h-1zM472 414h1v2h-1zM473 414h1v2h-1zM474 414h1v2h-1zM475 414h1v2h-1zM476 414h1v2h-1zM477 414h1v2h-1zM478 414h1v2h-1zM479 414h1v2h-1zM480 414h1v2h-1zM481 414h1v2h-1zM482 414h1v2h-1zM483 414h1v2h-1zM484 414h1v2h-1zM485 368h1v2h-1zM486 368h1v2h-1zM487 368h1v2h-1zM488 368h1v2h-1zM489 368h1v2h-1zM490 368h1v2h-1zM491 368h1v2h-1zM492 368h1v2h-1zM493 368h1v2h-1zM494 368h1v2h-1zM495 368h1v2h-1zM496 368h1v2h-1zM497 368h1v2h-1zM498 368h1v2h-1zM499 368h1v2h-1zM500 368h1v2h-1zM501 368h1v2h-1zM502 368h1v2h-1zM503 368h1v2h-1zM504 368h1v2h-1zM505 368h1v2h-1zM506 368h1v2h-1zM507 368h1v2h-1zM508 368h1v2h-1zM509 368h1v2h-1zM510 368h1v2h-1zM511 368h1v2h-1zM512 368h1v2h-1zM513 368h1v2h-1zM514 368h1v2h-1zM515 368h1v2h-1zM516 368h1v2h-1zM517 368h1v2h-1zM518 368h1v2h-1zM519 368h1v2h-1zM520 368h1v2h-1zM521 368h1v2h-1zM522 368h1v2h-1zM523 368h1v2h-1zM524 368h1v2h-1zM525 368h1v2h-1zM526 368h1v2h-1zM527 368h1v2h-1zM528 368h1v2h-1zM529 368h1v2h-1zM530 414h1v2h-1zM531 414h1v2h-1zM532 414h1v2h-1zM533 414h1v2h-1zM534 414h1v2h-1zM535 414h1v2h-1zM536 414h1v2h-1zM537 414h1v2h-1zM538 414h1v2h-1zM539 414h1v2h-1zM540 414h1v2h-1zM541 414h1v2h-1zM542 414h1v2h-1zM543 414h1v2h-1zM544 414h1v2h-1zM545 414h1v2h-1zM546 414h1v2h-1zM547 414h1v2h-1zM548 414h1v2h-1zM549 414h1v2h-1zM550 414h1v2h-1zM551 414h1v2h-1zM552 414h1v2h-1zM553 414h1v2h-1zM554 414h1v2h-1zM555 414h1v2h-1zM556 414h1v2h-1zM557 414h1v2h-1zM558 414h1v2h-1zM559 414h1v2h-1zM560 414h1v2h-1zM561 414h1v2h-1zM562 414h1v2h-1zM563 414h1v2h-1zM564 414h1v2h-1zM565 414h1v2h-1zM566 414h1v2h-1zM567 414h1v2h-1zM568 414h1v2h-1zM569 414h1v2h-1zM570 414h1v2h-1zM571 414h1v2h-1zM572 414h1v2h-1zM573 414h1v2h-1zM574 414h1v2h-1zM575 368h1v2h-1zM576 368h1v2h-1zM577 368h1v2h-1zM578 368h1v2h-1zM579 368h1v2h-1zM580 368h1v2h-1zM581 368h1v2h-1zM582 368h1v2h-1zM583 368h1v2h-1zM584 368h1v2h-1zM585 368h1v2h-1zM586 368h1v2h-1zM587 368h1v2h-1zM588 368h1v2h-1zM589 368h1v2h-1zM590 368h1v2h-1zM591 368h1v2h-1zM592 368h1v2h-1zM593 368h1v2h-1zM594 368h1v2h-1zM595 368h1v2h-1zM596 368h1v2h-1zM597 368h1v2h-1zM598 368h1v2h-1zM599 368h1v2h-1zM600 368h1v2h-1zM601 368h1v2h-1zM602 368h1v2h-1zM603 368h1v2h-1zM604 368h1v2h-1zM605 368h1v2h-1zM606 368h1v2h-1zM607 368h1v2h-1zM608 368h1v2h-1zM609 368h1v2h-1zM610 368h1v2h-1zM611 368h1v2h-1zM612 368h1v2h-1zM613 368h1v2h-1zM614 368h1v2h-1zM615 368h1v2h-1zM616 368h1v2h-1zM617 368h1v2h-1zM618 368h1v2h-1zM619 368h1v2h-1zM620 368h1v2h-1zM621 414h1v2h-1zM622 414h1v2h-1zM623 414h1v2h-1zM624 414h1v2h-1zM625 414h1v2h-1zM626 414h1v2h-1zM627 414h1v2h-1zM628 414h1v2h-1zM629 414h1v2h-1zM630 414h1v2h-1zM631 414h1v2h-1zM632 414h1v2h-1zM633 414h1v2h-1zM634 414h1v2h-1zM635 414h1v2h-1zM636 414h1v2h-1zM637 414h1v2h-1zM638 414h1v2h-1zM639 414h1v2h-1zM640 414h1v2h-1zM641 414h1v2h-1zM642 414h1v2h-1zM643 414h1v2h-1zM644 414h1v2h-1zM645 414h1v2h-1zM646 414h1v2h-1zM647 414h1v2h-1zM648 414h1v2h-1zM649 414h1v2h-1zM650 414h1v2h-1zM651 414h1v2h-1zM652 414h1v2h-1zM653 414h1v2h-1zM654 414h1v2h-1zM655 414h1v2h-1zM656 414h1v2h-1zM657 414h1v2h-1zM658 414h1v2h-1zM659 414h1v2h-1zM660 414h1v2h-1zM661 414h1v2h-1zM662 414h1v2h-1zM663 414h1v2h-1zM664 414h1v2h-1zM665 414h1v2h-1zM666 368h1v2h-1zM667 368h1v2h-1zM668 368h1v2h-1zM669 368h1v2h-1zM670 368h1v2h-1zM671 368h1v2h-1zM672 368h1v2h-1zM673 368h1v2h-1zM674 368h1v2h-1zM675 368h1v2h-1zM676 368h1v2h-1zM677 368h1v2h-1zM678 368h1v2h-1zM679 368h1v2h-1zM680 368h1v2h-1zM681 368h1v2h-1zM682 368h1v2h-1zM683 368h1v2h-1zM684 368h1v2h-1zM685 368h1v2h-1zM33 368h2v48h-2zM78 368h2v48h-2zM123 368h2v48h-2zM168 368h2v48h-2zM213 368h2v48h-2zM259 368h2v48h-2zM304 368h2v48h-2zM349 368h2v48h-2zM394 368h2v48h-2zM439 368h2v48h-2zM484 368h2v48h-2zM529 368h2v48h-2zM574 368h2v48h-2zM620 368h2v48h-2zM665 368h2v48h-2z" fill="#8ce840" opacity="0.55"/><path d="M1 414h1v1h-1zM2 414h1v1h-1zM3 414h1v1h-1zM4 414h1v1h-1zM5 414h1v1h-1zM6 414h1v1h-1zM7 414h1v1h-1zM8 414h1v1h-1zM9 414h1v1h-1zM10 414h1v1h-1zM11 414h1v1h-1zM12 414h1v1h-1zM13 414h1v1h-1zM14 414h1v1h-1zM15 414h1v1h-1zM16 414h1v1h-1zM17 414h1v1h-1zM18 414h1v1h-1zM19 414h1v1h-1zM20 414h1v1h-1zM21 414h1v1h-1zM22 414h1v1h-1zM23 414h1v1h-1zM24 414h1v1h-1zM25 414h1v1h-1zM26 414h1v1h-1zM27 414h1v1h-1zM28 414h1v1h-1zM29 414h1v1h-1zM30 414h1v1h-1zM31 414h1v1h-1zM32 414h1v1h-1zM33 414h1v1h-1zM34 368h1v1h-1zM35 368h1v1h-1zM36 368h1v1h-1zM37 368h1v1h-1zM38 368h1v1h-1zM39 368h1v1h-1zM40 368h1v1h-1zM41 368h1v1h-1zM42 368h1v1h-1zM43 368h1v1h-1zM44 368h1v1h-1zM45 368h1v1h-1zM46 368h1v1h-1zM47 368h1v1h-1zM48 368h1v1h-1zM49 368h1v1h-1zM50 368h1v1h-1zM51 368h1v1h-1zM52 368h1v1h-1zM53 368h1v1h-1zM54 368h1v1h-1zM55 368h1v1h-1zM56 368h1v1h-1zM57 368h1v1h-1zM58 368h1v1h-1zM59 368h1v1h-1zM60 368h1v1h-1zM61 368h1v1h-1zM62 368h1v1h-1zM63 368h1v1h-1zM64 368h1v1h-1zM65 368h1v1h-1zM66 368h1v1h-1zM67 368h1v1h-1zM68 368h1v1h-1zM69 368h1v1h-1zM70 368h1v1h-1zM71 368h1v1h-1zM72 368h1v1h-1zM73 368h1v1h-1zM74 368h1v1h-1zM75 368h1v1h-1zM76 368h1v1h-1zM77 368h1v1h-1zM78 368h1v1h-1zM79 414h1v1h-1zM80 414h1v1h-1zM81 414h1v1h-1zM82 414h1v1h-1zM83 414h1v1h-1zM84 414h1v1h-1zM85 414h1v1h-1zM86 414h1v1h-1zM87 414h1v1h-1zM88 414h1v1h-1zM89 414h1v1h-1zM90 414h1v1h-1zM91 414h1v1h-1zM92 414h1v1h-1zM93 414h1v1h-1zM94 414h1v1h-1zM95 414h1v1h-1zM96 414h1v1h-1zM97 414h1v1h-1zM98 414h1v1h-1zM99 414h1v1h-1zM100 414h1v1h-1zM101 414h1v1h-1zM102 414h1v1h-1zM103 414h1v1h-1zM104 414h1v1h-1zM105 414h1v1h-1zM106 414h1v1h-1zM107 414h1v1h-1zM108 414h1v1h-1zM109 414h1v1h-1zM110 414h1v1h-1zM111 414h1v1h-1zM112 414h1v1h-1zM113 414h1v1h-1zM114 414h1v1h-1zM115 414h1v1h-1zM116 414h1v1h-1zM117 414h1v1h-1zM118 414h1v1h-1zM119 414h1v1h-1zM120 414h1v1h-1zM121 414h1v1h-1zM122 414h1v1h-1zM123 414h1v1h-1zM124 368h1v1h-1zM125 368h1v1h-1zM126 368h1v1h-1zM127 368h1v1h-1zM128 368h1v1h-1zM129 368h1v1h-1zM130 368h1v1h-1zM131 368h1v1h-1zM132 368h1v1h-1zM133 368h1v1h-1zM134 368h1v1h-1zM135 368h1v1h-1zM136 368h1v1h-1zM137 368h1v1h-1zM138 368h1v1h-1zM139 368h1v1h-1zM140 368h1v1h-1zM141 368h1v1h-1zM142 368h1v1h-1zM143 368h1v1h-1zM144 368h1v1h-1zM145 368h1v1h-1zM146 368h1v1h-1zM147 368h1v1h-1zM148 368h1v1h-1zM149 368h1v1h-1zM150 368h1v1h-1zM151 368h1v1h-1zM152 368h1v1h-1zM153 368h1v1h-1zM154 368h1v1h-1zM155 368h1v1h-1zM156 368h1v1h-1zM157 368h1v1h-1zM158 368h1v1h-1zM159 368h1v1h-1zM160 368h1v1h-1zM161 368h1v1h-1zM162 368h1v1h-1zM163 368h1v1h-1zM164 368h1v1h-1zM165 368h1v1h-1zM166 368h1v1h-1zM167 368h1v1h-1zM168 368h1v1h-1zM169 414h1v1h-1zM170 414h1v1h-1zM171 414h1v1h-1zM172 414h1v1h-1zM173 414h1v1h-1zM174 414h1v1h-1zM175 414h1v1h-1zM176 414h1v1h-1zM177 414h1v1h-1zM178 414h1v1h-1zM179 414h1v1h-1zM180 414h1v1h-1zM181 414h1v1h-1zM182 414h1v1h-1zM183 414h1v1h-1zM184 414h1v1h-1zM185 414h1v1h-1zM186 414h1v1h-1zM187 414h1v1h-1zM188 414h1v1h-1zM189 414h1v1h-1zM190 414h1v1h-1zM191 414h1v1h-1zM192 414h1v1h-1zM193 414h1v1h-1zM194 414h1v1h-1zM195 414h1v1h-1zM196 414h1v1h-1zM197 414h1v1h-1zM198 414h1v1h-1zM199 414h1v1h-1zM200 414h1v1h-1zM201 414h1v1h-1zM202 414h1v1h-1zM203 414h1v1h-1zM204 414h1v1h-1zM205 414h1v1h-1zM206 414h1v1h-1zM207 414h1v1h-1zM208 414h1v1h-1zM209 414h1v1h-1zM210 414h1v1h-1zM211 414h1v1h-1zM212 414h1v1h-1zM213 414h1v1h-1zM214 368h1v1h-1zM215 368h1v1h-1zM216 368h1v1h-1zM217 368h1v1h-1zM218 368h1v1h-1zM219 368h1v1h-1zM220 368h1v1h-1zM221 368h1v1h-1zM222 368h1v1h-1zM223 368h1v1h-1zM224 368h1v1h-1zM225 368h1v1h-1zM226 368h1v1h-1zM227 368h1v1h-1zM228 368h1v1h-1zM229 368h1v1h-1zM230 368h1v1h-1zM231 368h1v1h-1zM232 368h1v1h-1zM233 368h1v1h-1zM234 368h1v1h-1zM235 368h1v1h-1zM236 368h1v1h-1zM237 368h1v1h-1zM238 368h1v1h-1zM239 368h1v1h-1zM240 368h1v1h-1zM241 368h1v1h-1zM242 368h1v1h-1zM243 368h1v1h-1zM244 368h1v1h-1zM245 368h1v1h-1zM246 368h1v1h-1zM247 368h1v1h-1zM248 368h1v1h-1zM249 368h1v1h-1zM250 368h1v1h-1zM251 368h1v1h-1zM252 368h1v1h-1zM253 368h1v1h-1zM254 368h1v1h-1zM255 368h1v1h-1zM256 368h1v1h-1zM257 368h1v1h-1zM258 368h1v1h-1zM259 368h1v1h-1zM260 414h1v1h-1zM261 414h1v1h-1zM262 414h1v1h-1zM263 414h1v1h-1zM264 414h1v1h-1zM265 414h1v1h-1zM266 414h1v1h-1zM267 414h1v1h-1zM268 414h1v1h-1zM269 414h1v1h-1zM270 414h1v1h-1zM271 414h1v1h-1zM272 414h1v1h-1zM273 414h1v1h-1zM274 414h1v1h-1zM275 414h1v1h-1zM276 414h1v1h-1zM277 414h1v1h-1zM278 414h1v1h-1zM279 414h1v1h-1zM280 414h1v1h-1zM281 414h1v1h-1zM282 414h1v1h-1zM283 414h1v1h-1zM284 414h1v1h-1zM285 414h1v1h-1zM286 414h1v1h-1zM287 414h1v1h-1zM288 414h1v1h-1zM289 414h1v1h-1zM290 414h1v1h-1zM291 414h1v1h-1zM292 414h1v1h-1zM293 414h1v1h-1zM294 414h1v1h-1zM295 414h1v1h-1zM296 414h1v1h-1zM297 414h1v1h-1zM298 414h1v1h-1zM299 414h1v1h-1zM300 414h1v1h-1zM301 414h1v1h-1zM302 414h1v1h-1zM303 414h1v1h-1zM304 414h1v1h-1zM305 368h1v1h-1zM306 368h1v1h-1zM307 368h1v1h-1zM308 368h1v1h-1zM309 368h1v1h-1zM310 368h1v1h-1zM311 368h1v1h-1zM312 368h1v1h-1zM313 368h1v1h-1zM314 368h1v1h-1zM315 368h1v1h-1zM316 368h1v1h-1zM317 368h1v1h-1zM318 368h1v1h-1zM319 368h1v1h-1zM320 368h1v1h-1zM321 368h1v1h-1zM322 368h1v1h-1zM323 368h1v1h-1zM324 368h1v1h-1zM325 368h1v1h-1zM326 368h1v1h-1zM327 368h1v1h-1zM328 368h1v1h-1zM329 368h1v1h-1zM330 368h1v1h-1zM331 368h1v1h-1zM332 368h1v1h-1zM333 368h1v1h-1zM334 368h1v1h-1zM335 368h1v1h-1zM336 368h1v1h-1zM337 368h1v1h-1zM338 368h1v1h-1zM339 368h1v1h-1zM340 368h1v1h-1zM341 368h1v1h-1zM342 368h1v1h-1zM343 368h1v1h-1zM344 368h1v1h-1zM345 368h1v1h-1zM346 368h1v1h-1zM347 368h1v1h-1zM348 368h1v1h-1zM349 368h1v1h-1zM350 414h1v1h-1zM351 414h1v1h-1zM352 414h1v1h-1zM353 414h1v1h-1zM354 414h1v1h-1zM355 414h1v1h-1zM356 414h1v1h-1zM357 414h1v1h-1zM358 414h1v1h-1zM359 414h1v1h-1zM360 414h1v1h-1zM361 414h1v1h-1zM362 414h1v1h-1zM363 414h1v1h-1zM364 414h1v1h-1zM365 414h1v1h-1zM366 414h1v1h-1zM367 414h1v1h-1zM368 414h1v1h-1zM369 414h1v1h-1zM370 414h1v1h-1zM371 414h1v1h-1zM372 414h1v1h-1zM373 414h1v1h-1zM374 414h1v1h-1zM375 414h1v1h-1zM376 414h1v1h-1zM377 414h1v1h-1zM378 414h1v1h-1zM379 414h1v1h-1zM380 414h1v1h-1zM381 414h1v1h-1zM382 414h1v1h-1zM383 414h1v1h-1zM384 414h1v1h-1zM385 414h1v1h-1zM386 414h1v1h-1zM387 414h1v1h-1zM388 414h1v1h-1zM389 414h1v1h-1zM390 414h1v1h-1zM391 414h1v1h-1zM392 414h1v1h-1zM393 414h1v1h-1zM394 414h1v1h-1zM395 368h1v1h-1zM396 368h1v1h-1zM397 368h1v1h-1zM398 368h1v1h-1zM399 368h1v1h-1zM400 368h1v1h-1zM401 368h1v1h-1zM402 368h1v1h-1zM403 368h1v1h-1zM404 368h1v1h-1zM405 368h1v1h-1zM406 368h1v1h-1zM407 368h1v1h-1zM408 368h1v1h-1zM409 368h1v1h-1zM410 368h1v1h-1zM411 368h1v1h-1zM412 368h1v1h-1zM413 368h1v1h-1zM414 368h1v1h-1zM415 368h1v1h-1zM416 368h1v1h-1zM417 368h1v1h-1zM418 368h1v1h-1zM419 368h1v1h-1zM420 368h1v1h-1zM421 368h1v1h-1zM422 368h1v1h-1zM423 368h1v1h-1zM424 368h1v1h-1zM425 368h1v1h-1zM426 368h1v1h-1zM427 368h1v1h-1zM428 368h1v1h-1zM429 368h1v1h-1zM430 368h1v1h-1zM431 368h1v1h-1zM432 368h1v1h-1zM433 368h1v1h-1zM434 368h1v1h-1zM435 368h1v1h-1zM436 368h1v1h-1zM437 368h1v1h-1zM438 368h1v1h-1zM439 368h1v1h-1zM440 414h1v1h-1zM441 414h1v1h-1zM442 414h1v1h-1zM443 414h1v1h-1zM444 414h1v1h-1zM445 414h1v1h-1zM446 414h1v1h-1zM447 414h1v1h-1zM448 414h1v1h-1zM449 414h1v1h-1zM450 414h1v1h-1zM451 414h1v1h-1zM452 414h1v1h-1zM453 414h1v1h-1zM454 414h1v1h-1zM455 414h1v1h-1zM456 414h1v1h-1zM457 414h1v1h-1zM458 414h1v1h-1zM459 414h1v1h-1zM460 414h1v1h-1zM461 414h1v1h-1zM462 414h1v1h-1zM463 414h1v1h-1zM464 414h1v1h-1zM465 414h1v1h-1zM466 414h1v1h-1zM467 414h1v1h-1zM468 414h1v1h-1zM469 414h1v1h-1zM470 414h1v1h-1zM471 414h1v1h-1zM472 414h1v1h-1zM473 414h1v1h-1zM474 414h1v1h-1zM475 414h1v1h-1zM476 414h1v1h-1zM477 414h1v1h-1zM478 414h1v1h-1zM479 414h1v1h-1zM480 414h1v1h-1zM481 414h1v1h-1zM482 414h1v1h-1zM483 414h1v1h-1zM484 414h1v1h-1zM485 368h1v1h-1zM486 368h1v1h-1zM487 368h1v1h-1zM488 368h1v1h-1zM489 368h1v1h-1zM490 368h1v1h-1zM491 368h1v1h-1zM492 368h1v1h-1zM493 368h1v1h-1zM494 368h1v1h-1zM495 368h1v1h-1zM496 368h1v1h-1zM497 368h1v1h-1zM498 368h1v1h-1zM499 368h1v1h-1zM500 368h1v1h-1zM501 368h1v1h-1zM502 368h1v1h-1zM503 368h1v1h-1zM504 368h1v1h-1zM505 368h1v1h-1zM506 368h1v1h-1zM507 368h1v1h-1zM508 368h1v1h-1zM509 368h1v1h-1zM510 368h1v1h-1zM511 368h1v1h-1zM512 368h1v1h-1zM513 368h1v1h-1zM514 368h1v1h-1zM515 368h1v1h-1zM516 368h1v1h-1zM517 368h1v1h-1zM518 368h1v1h-1zM519 368h1v1h-1zM520 368h1v1h-1zM521 368h1v1h-1zM522 368h1v1h-1zM523 368h1v1h-1zM524 368h1v1h-1zM525 368h1v1h-1zM526 368h1v1h-1zM527 368h1v1h-1zM528 368h1v1h-1zM529 368h1v1h-1zM530 414h1v1h-1zM531 414h1v1h-1zM532 414h1v1h-1zM533 414h1v1h-1zM534 414h1v1h-1zM535 414h1v1h-1zM536 414h1v1h-1zM537 414h1v1h-1zM538 414h1v1h-1zM539 414h1v1h-1zM540 414h1v1h-1zM541 414h1v1h-1zM542 414h1v1h-1zM543 414h1v1h-1zM544 414h1v1h-1zM545 414h1v1h-1zM546 414h1v1h-1zM547 414h1v1h-1zM548 414h1v1h-1zM549 414h1v1h-1zM550 414h1v1h-1zM551 414h1v1h-1zM552 414h1v1h-1zM553 414h1v1h-1zM554 414h1v1h-1zM555 414h1v1h-1zM556 414h1v1h-1zM557 414h1v1h-1zM558 414h1v1h-1zM559 414h1v1h-1zM560 414h1v1h-1zM561 414h1v1h-1zM562 414h1v1h-1zM563 414h1v1h-1zM564 414h1v1h-1zM565 414h1v1h-1zM566 414h1v1h-1zM567 414h1v1h-1zM568 414h1v1h-1zM569 414h1v1h-1zM570 414h1v1h-1zM571 414h1v1h-1zM572 414h1v1h-1zM573 414h1v1h-1zM574 414h1v1h-1zM575 368h1v1h-1zM576 368h1v1h-1zM577 368h1v1h-1zM578 368h1v1h-1zM579 368h1v1h-1zM580 368h1v1h-1zM581 368h1v1h-1zM582 368h1v1h-1zM583 368h1v1h-1zM584 368h1v1h-1zM585 368h1v1h-1zM586 368h1v1h-1zM587 368h1v1h-1zM588 368h1v1h-1zM589 368h1v1h-1zM590 368h1v1h-1zM591 368h1v1h-1zM592 368h1v1h-1zM593 368h1v1h-1zM594 368h1v1h-1zM595 368h1v1h-1zM596 368h1v1h-1zM597 368h1v1h-1zM598 368h1v1h-1zM599 368h1v1h-1zM600 368h1v1h-1zM601 368h1v1h-1zM602 368h1v1h-1zM603 368h1v1h-1zM604 368h1v1h-1zM605 368h1v1h-1zM606 368h1v1h-1zM607 368h1v1h-1zM608 368h1v1h-1zM609 368h1v1h-1zM610 368h1v1h-1zM611 368h1v1h-1zM612 368h1v1h-1zM613 368h1v1h-1zM614 368h1v1h-1zM615 368h1v1h-1zM616 368h1v1h-1zM617 368h1v1h-1zM618 368h1v1h-1zM619 368h1v1h-1zM620 368h1v1h-1zM621 414h1v1h-1zM622 414h1v1h-1zM623 414h1v1h-1zM624 414h1v1h-1zM625 414h1v1h-1zM626 414h1v1h-1zM627 414h1v1h-1zM628 414h1v1h-1zM629 414h1v1h-1zM630 414h1v1h-1zM631 414h1v1h-1zM632 414h1v1h-1zM633 414h1v1h-1zM634 414h1v1h-1zM635 414h1v1h-1zM636 414h1v1h-1zM637 414h1v1h-1zM638 414h1v1h-1zM639 414h1v1h-1zM640 414h1v1h-1zM641 414h1v1h-1zM642 414h1v1h-1zM643 414h1v1h-1zM644 414h1v1h-1zM645 414h1v1h-1zM646 414h1v1h-1zM647 414h1v1h-1zM648 414h1v1h-1zM649 414h1v1h-1zM650 414h1v1h-1zM651 414h1v1h-1zM652 414h1v1h-1zM653 414h1v1h-1zM654 414h1v1h-1zM655 414h1v1h-1zM656 414h1v1h-1zM657 414h1v1h-1zM658 414h1v1h-1zM659 414h1v1h-1zM660 414h1v1h-1zM661 414h1v1h-1zM662 414h1v1h-1zM663 414h1v1h-1zM664 414h1v1h-1zM665 414h1v1h-1zM666 368h1v1h-1zM667 368h1v1h-1zM668 368h1v1h-1zM669 368h1v1h-1zM670 368h1v1h-1zM671 368h1v1h-1zM672 368h1v1h-1zM673 368h1v1h-1zM674 368h1v1h-1zM675 368h1v1h-1zM676 368h1v1h-1zM677 368h1v1h-1zM678 368h1v1h-1zM679 368h1v1h-1zM680 368h1v1h-1zM681 368h1v1h-1zM682 368h1v1h-1zM683 368h1v1h-1zM684 368h1v1h-1zM685 368h1v1h-1zM33 368h1v47h-1zM78 368h1v47h-1zM123 368h1v47h-1zM168 368h1v47h-1zM213 368h1v47h-1zM259 368h1v47h-1zM304 368h1v47h-1zM349 368h1v47h-1zM394 368h1v47h-1zM439 368h1v47h-1zM484 368h1v47h-1zM529 368h1v47h-1zM574 368h1v47h-1zM620 368h1v47h-1zM665 368h1v47h-1z" fill="#bcfa80"/></svg>
<div class="a" style="left:731px;top:106px;width:4px;height:456px;background:#f7f8fb"></div>
<svg class="a" style="left:20px;top:152px" width="26" height="16"><path d="M0 0H17.5L24 6V11L19.5 16H0Z" fill="#f4f050"/></svg>
<div class="t" style="left:21px;top:154px;font-size:11.5px;color:#101010;font-style:italic;">CH1</div>
<svg class="a" style="left:20px;top:264px" width="26" height="16"><path d="M0 0H17.5L24 6V11L19.5 16H0Z" fill="#c0c0f4"/></svg>
<div class="t" style="left:21px;top:266px;font-size:11.5px;color:#141450;">CH2</div>
<svg class="a" style="left:20px;top:392px" width="26" height="17"><path d="M0 0H16Q24 0 24 8.5Q24 17 16 17H0Z" fill="#ee9650"/></svg>
<div class="t" style="left:21px;top:395px;font-size:11.5px;color:#3c0c00;">CH3</div>
<svg class="a" style="left:20px;top:488px" width="26" height="17"><path d="M0 0H17.5L24 6V12L19.5 17H0Z" fill="#aaf048"/></svg>
<div class="t" style="left:21px;top:491px;font-size:11.5px;color:#0c2c00;">CH4</div>
<div class="a" style="left:750px;top:114px;width:1px;height:439px;background:#a8a8a8"></div>
<div class="a" style="left:751px;top:114px;width:1px;height:439px;background:#fcfcfc"></div>
<div class="a" style="left:750px;top:114px;width:2px;height:1px;background:#a0a0a0"></div>
<div class="a" style="left:737px;top:119px;width:4px;height:1px;background:#c4c4c4"></div>
<div class="a" style="left:764px;top:119px;width:4px;height:1px;background:#c4c4c4"></div>
<div class="a" style="left:737px;top:226px;width:4px;height:1px;background:#c4c4c4"></div>
<div class="a" style="left:764px;top:226px;width:4px;height:1px;background:#c4c4c4"></div>
<div class="a" style="left:737px;top:334px;width:4px;height:1px;background:#c4c4c4"></div>
<div class="a" style="left:764px;top:334px;width:4px;height:1px;background:#c4c4c4"></div>
<div class="a" style="left:737px;top:441px;width:4px;height:1px;background:#c4c4c4"></div>
<div class="a" style="left:764px;top:441px;width:4px;height:1px;background:#c4c4c4"></div>
<div class="a" style="left:737px;top:548px;width:4px;height:1px;background:#c4c4c4"></div>
<div class="a" style="left:764px;top:548px;width:4px;height:1px;background:#c4c4c4"></div>
<div class="a" style="left:741px;top:288px;width:21px;height:10px;border:1px solid #6c6c6c;border-radius:2px;background:linear-gradient(#fdfdfd,#ececec 50%,#dcdcdc 51%,#eaeaea)"></div>
<div class="a" style="left:773px;top:106px;width:1px;height:456px;background:#a4a4a4"></div>
<div class="a" style="left:774px;top:106px;width:1px;height:456px;background:#fdfdfd"></div>
<div class="a" style="left:779px;top:114px;width:224px;height:317px;border:1px solid #dadada;box-shadow:inset 1px 1px 0 #fcfcfc, 1px 1px 0 #fcfcfc"></div>
<div class="a" style="left:784.5px;top:112px;width:72.2px;height:5px;background:#f0f0f0"></div>
<div class="t" style="left:787.50px;top:107.00px;font-size:12px;line-height:16px;color:#1a1a1a;letter-spacing:0.356px;">CH1 Cursor</div>
<div class="a" style="left:779px;top:440px;width:224px;height:55px;border:1px solid #dadada;box-shadow:inset 1px 1px 0 #fcfcfc, 1px 1px 0 #fcfcfc"></div>
<div class="a" style="left:784.5px;top:438px;width:92.2px;height:5px;background:#f0f0f0"></div>
<div class="t" style="left:787.50px;top:433.00px;font-size:12px;line-height:16px;color:#1a1a1a;letter-spacing:0.400px;">CH1 Time / Div</div>
<div class="a" style="left:779px;top:505px;width:224px;height:56px;border:1px solid #dadada;box-shadow:inset 1px 1px 0 #fcfcfc, 1px 1px 0 #fcfcfc"></div>
<div class="a" style="left:784.5px;top:503px;width:86.9px;height:5px;background:#f0f0f0"></div>
<div class="t" style="left:787.50px;top:498.00px;font-size:12px;line-height:16px;color:#1a1a1a;letter-spacing:0.454px;">CH1 Volt / Div</div>
<div class="t" style="left:791.50px;top:139.00px;font-size:12px;line-height:16px;color:#1a1a1a;letter-spacing:0.000px;">dy:</div>
<div class="t" style="left:791.50px;top:166.00px;font-size:12px;line-height:16px;color:#1a1a1a;letter-spacing:0.000px;">y1:</div>
<div class="t" style="left:791.50px;top:193.00px;font-size:12px;line-height:16px;color:#1a1a1a;letter-spacing:0.000px;">y2:</div>
<div class="t" style="left:791.50px;top:220.00px;font-size:12px;line-height:16px;color:#1a1a1a;letter-spacing:0.000px;">dx:</div>
<div class="t" style="left:791.50px;top:247.00px;font-size:12px;line-height:16px;color:#1a1a1a;letter-spacing:0.000px;">x1:</div>
<div class="t" style="left:791.50px;top:274.00px;font-size:12px;line-height:16px;color:#1a1a1a;letter-spacing:0.000px;">x2:</div>
<div class="t" style="left:791.90px;top:301.00px;font-size:12px;line-height:16px;color:#1a1a1a;letter-spacing:0.144px;">Divisions:</div>
<div class="t" style="left:856.50px;top:301.00px;font-size:12px;line-height:16px;color:#1a1a1a;letter-spacing:0.643px;">[-20~20]</div>
<div class="t" style="left:856.50px;top:327.00px;font-size:12px;line-height:16px;color:#1a1a1a;letter-spacing:-0.500px;">3.81</div>
<div class="t" style="left:791.60px;top:359.00px;font-size:12px;line-height:16px;color:#1a1a1a;letter-spacing:0.225px;">Type:</div>
<div class="t" style="left:791.60px;top:463.00px;font-size:12px;line-height:16px;color:#1a1a1a;letter-spacing:0.020px;">scale:</div>
<div class="t" style="left:791.60px;top:528.00px;font-size:12px;line-height:16px;color:#1a1a1a;letter-spacing:0.020px;">scale:</div>
<div class="a" style="left:856px;top:354px;width:135px;height:25px;border:1px solid #858585;border-radius:3px;background:linear-gradient(#f6f6f6,#eeeeee 48%,#e4e4e4 54%,#dadada);box-shadow:inset 0 0 0 1px #fafafa"></div>
<div class="t" style="left:860.80px;top:359.00px;font-size:12px;line-height:16px;color:#101010;letter-spacing:0.467px;">None</div>
<svg class="a" style="left:978px;top:364px" width="8" height="5"><path d="M0 0H8L4 4.5Z" fill="#101010"/></svg>
<div class="a" style="left:856px;top:459px;width:135px;height:25px;border:1px solid #858585;border-radius:3px;background:linear-gradient(#f6f6f6,#eeeeee 48%,#e4e4e4 54%,#dadada);box-shadow:inset 0 0 0 1px #fafafa"></div>
<div class="t" style="left:860.80px;top:463.00px;font-size:12px;line-height:16px;color:#101010;letter-spacing:-0.050px;">500us</div>
<svg class="a" style="left:978px;top:469px" width="8" height="5"><path d="M0 0H8L4 4.5Z" fill="#101010"/></svg>
<div class="a" style="left:856px;top:524px;width:135px;height:25px;border:1px solid #858585;border-radius:3px;background:linear-gradient(#f6f6f6,#eeeeee 48%,#e4e4e4 54%,#dadada);box-shadow:inset 0 0 0 1px #fafafa"></div>
<div class="t" style="left:860.80px;top:528.00px;font-size:12px;line-height:16px;color:#101010;letter-spacing:-0.150px;">10.0V</div>
<svg class="a" style="left:978px;top:534px" width="8" height="5"><path d="M0 0H8L4 4.5Z" fill="#101010"/></svg>
<div class="a" style="left:18px;top:561px;width:757px;height:4px;background:#f7f8fb"></div>
<div class="a" style="left:20px;top:565px;width:653px;height:108px;border:1px solid #828790;background:#fff"></div>
<div class="a" style="left:21px;top:566px;width:651px;height:22px;background:linear-gradient(#fbfbfb,#f2f2f2 50%,#e6e6e6)"></div>
<div class="a" style="left:21px;top:588px;width:651px;height:1px;background:#ececec"></div>
<div class="a" style="left:21px;top:610px;width:651px;height:1px;background:#f0f0f0"></div>
<div class="a" style="left:21px;top:632px;width:651px;height:1px;background:#f0f0f0"></div>
<div class="a" style="left:21px;top:654px;width:651px;height:1px;background:#f0f0f0"></div>
<div class="a" style="left:185px;top:589px;width:1px;height:83px;background:#f0f0f0"></div>
<div class="a" style="left:347px;top:589px;width:1px;height:83px;background:#f0f0f0"></div>
<div class="a" style="left:509px;top:589px;width:1px;height:83px;background:#f0f0f0"></div>
<svg class="a" style="left:30px;top:571px" width="13" height="13">
<rect x="0.5" y="0.5" width="12" height="12" fill="#f4f4f4" stroke="#8e8f8f"/>
<rect x="2" y="2" width="9" height="9" fill="#dcdde6"/>
<path d="M3.5 6.5L5.6 9.4L9.6 2.8" fill="none" stroke="#4a5078" stroke-width="1.9"/>
</svg>
<div class="t" style="left:52.70px;top:570.00px;font-size:12px;line-height:16px;color:#1a1a1a;letter-spacing:-0.750px;">CH1</div>
<div class="t" style="left:305.90px;top:570.00px;font-size:12px;line-height:16px;color:#1a1a1a;letter-spacing:-0.150px;">500us</div>
<div class="t" style="left:469.40px;top:570.00px;font-size:12px;line-height:16px;color:#1a1a1a;letter-spacing:0.000px;">10.0V</div>
<div class="t" style="left:514.60px;top:570.00px;font-size:12px;line-height:16px;color:#1a1a1a;letter-spacing:1.000px;">/10.0</div>
<svg class="a" style="left:30px;top:593px" width="13" height="13">
<rect x="0.5" y="0.5" width="12" height="12" fill="#f4f4f4" stroke="#8e8f8f"/>
<rect x="2" y="2" width="9" height="9" fill="#dcdde6"/>
<path d="M3.5 6.5L5.6 9.4L9.6 2.8" fill="none" stroke="#4a5078" stroke-width="1.9"/>
</svg>
<div class="t" style="left:52.70px;top:592.00px;font-size:12px;line-height:16px;color:#1a1a1a;letter-spacing:-0.750px;">CH2</div>
<div class="t" style="left:305.90px;top:592.00px;font-size:12px;line-height:16px;color:#1a1a1a;letter-spacing:-0.150px;">500us</div>
<div class="t" style="left:469.40px;top:592.00px;font-size:12px;line-height:16px;color:#1a1a1a;letter-spacing:0.000px;">10.0V</div>
<div class="t" style="left:514.60px;top:592.00px;font-size:12px;line-height:16px;color:#1a1a1a;letter-spacing:1.000px;">/10.0</div>
<svg class="a" style="left:30px;top:615px" width="13" height="13">
<rect x="0.5" y="0.5" width="12" height="12" fill="#f4f4f4" stroke="#8e8f8f"/>
<rect x="2" y="2" width="9" height="9" fill="#dcdde6"/>
<path d="M3.5 6.5L5.6 9.4L9.6 2.8" fill="none" stroke="#4a5078" stroke-width="1.9"/>
</svg>
<div class="t" style="left:52.70px;top:614.00px;font-size:12px;line-height:16px;color:#1a1a1a;letter-spacing:-0.750px;">CH3</div>
<div class="t" style="left:305.90px;top:614.00px;font-size:12px;line-height:16px;color:#1a1a1a;letter-spacing:-0.150px;">500us</div>
<div class="t" style="left:469.40px;top:614.00px;font-size:12px;line-height:16px;color:#1a1a1a;letter-spacing:0.000px;">10.0V</div>
<div class="t" style="left:514.60px;top:614.00px;font-size:12px;line-height:16px;color:#1a1a1a;letter-spacing:1.000px;">/10.0</div>
<svg class="a" style="left:30px;top:637px" width="13" height="13">
<rect x="0.5" y="0.5" width="12" height="12" fill="#f4f4f4" stroke="#8e8f8f"/>
<rect x="2" y="2" width="9" height="9" fill="#dcdde6"/>
<path d="M3.5 6.5L5.6 9.4L9.6 2.8" fill="none" stroke="#4a5078" stroke-width="1.9"/>
</svg>
<div class="t" style="left:52.70px;top:636.00px;font-size:12px;line-height:16px;color:#1a1a1a;letter-spacing:-0.750px;">CH4</div>
<div class="t" style="left:305.90px;top:636.00px;font-size:12px;line-height:16px;color:#1a1a1a;letter-spacing:-0.150px;">500us</div>
<div class="t" style="left:469.40px;top:636.00px;font-size:12px;line-height:16px;color:#1a1a1a;letter-spacing:0.000px;">10.0V</div>
<div class="t" style="left:514.60px;top:636.00px;font-size:12px;line-height:16px;color:#1a1a1a;letter-spacing:1.000px;">/10.0</div>
<div class="a" style="left:21px;top:674px;width:312px;height:25px;border:1px solid #c2c2c2;border-radius:3px;background:#f4f4f4;box-shadow:inset 0 0 0 1px #fbfbfb"></div>
<div class="t" style="left:27.60px;top:679.00px;font-size:12px;line-height:16px;color:#8c8c8c;letter-spacing:0.504px;">To FFT. Current status not support for this compute.</div>
<div class="a" style="left:338px;top:674px;width:103px;height:25px;border:1px solid #7c7c7c;border-radius:3px;background:linear-gradient(#f6f6f6,#eeeeee 48%,#e2e2e2 54%,#d8d8d8);box-shadow:inset 0 0 0 1px #fbfbfb"></div>
<div class="t" style="left:343.60px;top:679.00px;font-size:12px;line-height:16px;color:#101010;letter-spacing:0.623px;">To Mathematics</div>
<div class="a" style="left:446px;top:674px;width:58px;height:25px;border:1px solid #7c7c7c;border-radius:3px;background:linear-gradient(#f6f6f6,#eeeeee 48%,#e2e2e2 54%,#d8d8d8);box-shadow:inset 0 0 0 1px #fbfbfb"></div>
<div class="t" style="left:451.30px;top:679.00px;font-size:12px;line-height:16px;color:#101010;letter-spacing:0.600px;">Inverted</div>
<div class="a" style="left:509px;top:674px;width:57px;height:25px;border:1px solid #c2c2c2;border-radius:3px;background:#f4f4f4;box-shadow:inset 0 0 0 1px #fbfbfb"></div>
<div class="t" style="left:514.30px;top:679.00px;font-size:12px;line-height:16px;color:#8c8c8c;letter-spacing:0.280px;">Remove</div>
<div class="a" style="left:677px;top:573px;width:326px;height:127px;border:1px solid #dadada;box-shadow:inset 1px 1px 0 #fcfcfc, 1px 1px 0 #fcfcfc"></div>
<div class="a" style="left:682.5px;top:571px;width:121.5px;height:5px;background:#f0f0f0"></div>
<div class="t" style="left:685.50px;top:566.00px;font-size:12px;line-height:16px;color:#1a1a1a;letter-spacing:0.406px;">CH1 WaveForm Info</div>
<div class="a" style="left:689px;top:587px;width:303px;height:107px;border:1px solid #828790;background:#fff"></div>
<div class="a" style="left:690px;top:588px;width:301px;height:23px;background:linear-gradient(#ffffff,#f7f8fa 50%,#f1f2f4)"></div>
<div class="a" style="left:690px;top:611px;width:301px;height:1px;background:#d5d5d5"></div>
<div class="a" style="left:690px;top:633px;width:301px;height:1px;background:#f0f0f0"></div>
<div class="a" style="left:690px;top:655px;width:301px;height:1px;background:#f0f0f0"></div>
<div class="a" style="left:690px;top:676px;width:301px;height:1px;background:#f0f0f0"></div>
<div class="a" style="left:810px;top:588px;width:1px;height:105px;background:#eaeaea"></div>
<div class="a" style="left:971px;top:588px;width:1px;height:105px;background:#eaeaea"></div>
<div class="t" style="left:697.80px;top:593.00px;font-size:12px;line-height:16px;color:#1a1a1a;letter-spacing:0.200px;">Type</div>
<div class="t" style="left:817.60px;top:593.00px;font-size:12px;line-height:16px;color:#1a1a1a;letter-spacing:0.275px;">Value</div>
<div class="t" style="left:697.80px;top:616.00px;font-size:12px;line-height:16px;color:#1a1a1a;letter-spacing:0.111px;">Frequency:</div>
<div class="t" style="left:817.60px;top:616.00px;font-size:12px;line-height:16px;color:#1a1a1a;letter-spacing:0.287px;">1.000 kHz</div>
<div class="t" style="left:697.80px;top:636.00px;font-size:12px;line-height:16px;color:#1a1a1a;letter-spacing:0.317px;">Period:</div>
<div class="t" style="left:817.60px;top:636.00px;font-size:12px;line-height:16px;color:#1a1a1a;letter-spacing:0.089px;">999.998 uS</div>
<div class="t" style="left:697.80px;top:658.00px;font-size:12px;line-height:16px;color:#1a1a1a;letter-spacing:0.000px;">PK-PK:</div>
<div class="t" style="left:817.60px;top:658.00px;font-size:12px;line-height:16px;color:#1a1a1a;letter-spacing:0.240px;">78.1mV</div>
<div class="a" style="left:18px;top:700px;width:658px;height:1px;background:#cacaca"></div>
<div class="a" style="left:676px;top:700px;width:330px;height:1px;background:#e0e0e0"></div>
<div class="a" style="left:18px;top:701px;width:988px;height:30px;background:linear-gradient(#f1f1f1,#f1f1f1 90%,#f6f8fb)"></div>
<div class="t" style="left:27.60px;top:710.00px;font-size:12px;line-height:16px;color:#101010;letter-spacing:0.232px;">D:\XDS3004\DSO\2017-06-06 11_45_08_678.bin</div>
<div class="t" style="left:812.70px;top:710.00px;font-size:12px;line-height:16px;color:#5f9748;letter-spacing:0.313px;">automatically check USB:</div>
<svg class="a" style="left:960px;top:711px" width="18" height="11">
<path d="M2.5 6H16" stroke="#303030" stroke-width="1.3"/>
<circle cx="2.8" cy="6" r="1.4" fill="#303030"/>
<circle cx="15.6" cy="6" r="1.5" fill="#303030"/>
<path d="M5 6L8 2.2H11M7.5 6L9.5 9.3H13" stroke="#303030" stroke-width="1.2" fill="none"/>
<circle cx="11.2" cy="2.2" r="1.3" fill="#303030"/><rect x="12" y="8.2" width="2.2" height="2.2" fill="#303030"/>
</svg>
<div class="a" style="left:983px;top:705px;width:1px;height:22px;background:#e4e4e4"></div>
<svg class="a" style="left:987px;top:715px" width="8" height="5"><path d="M0.5 0.5H7.5L4 4Z" fill="#404040"/></svg>
</body></html>
